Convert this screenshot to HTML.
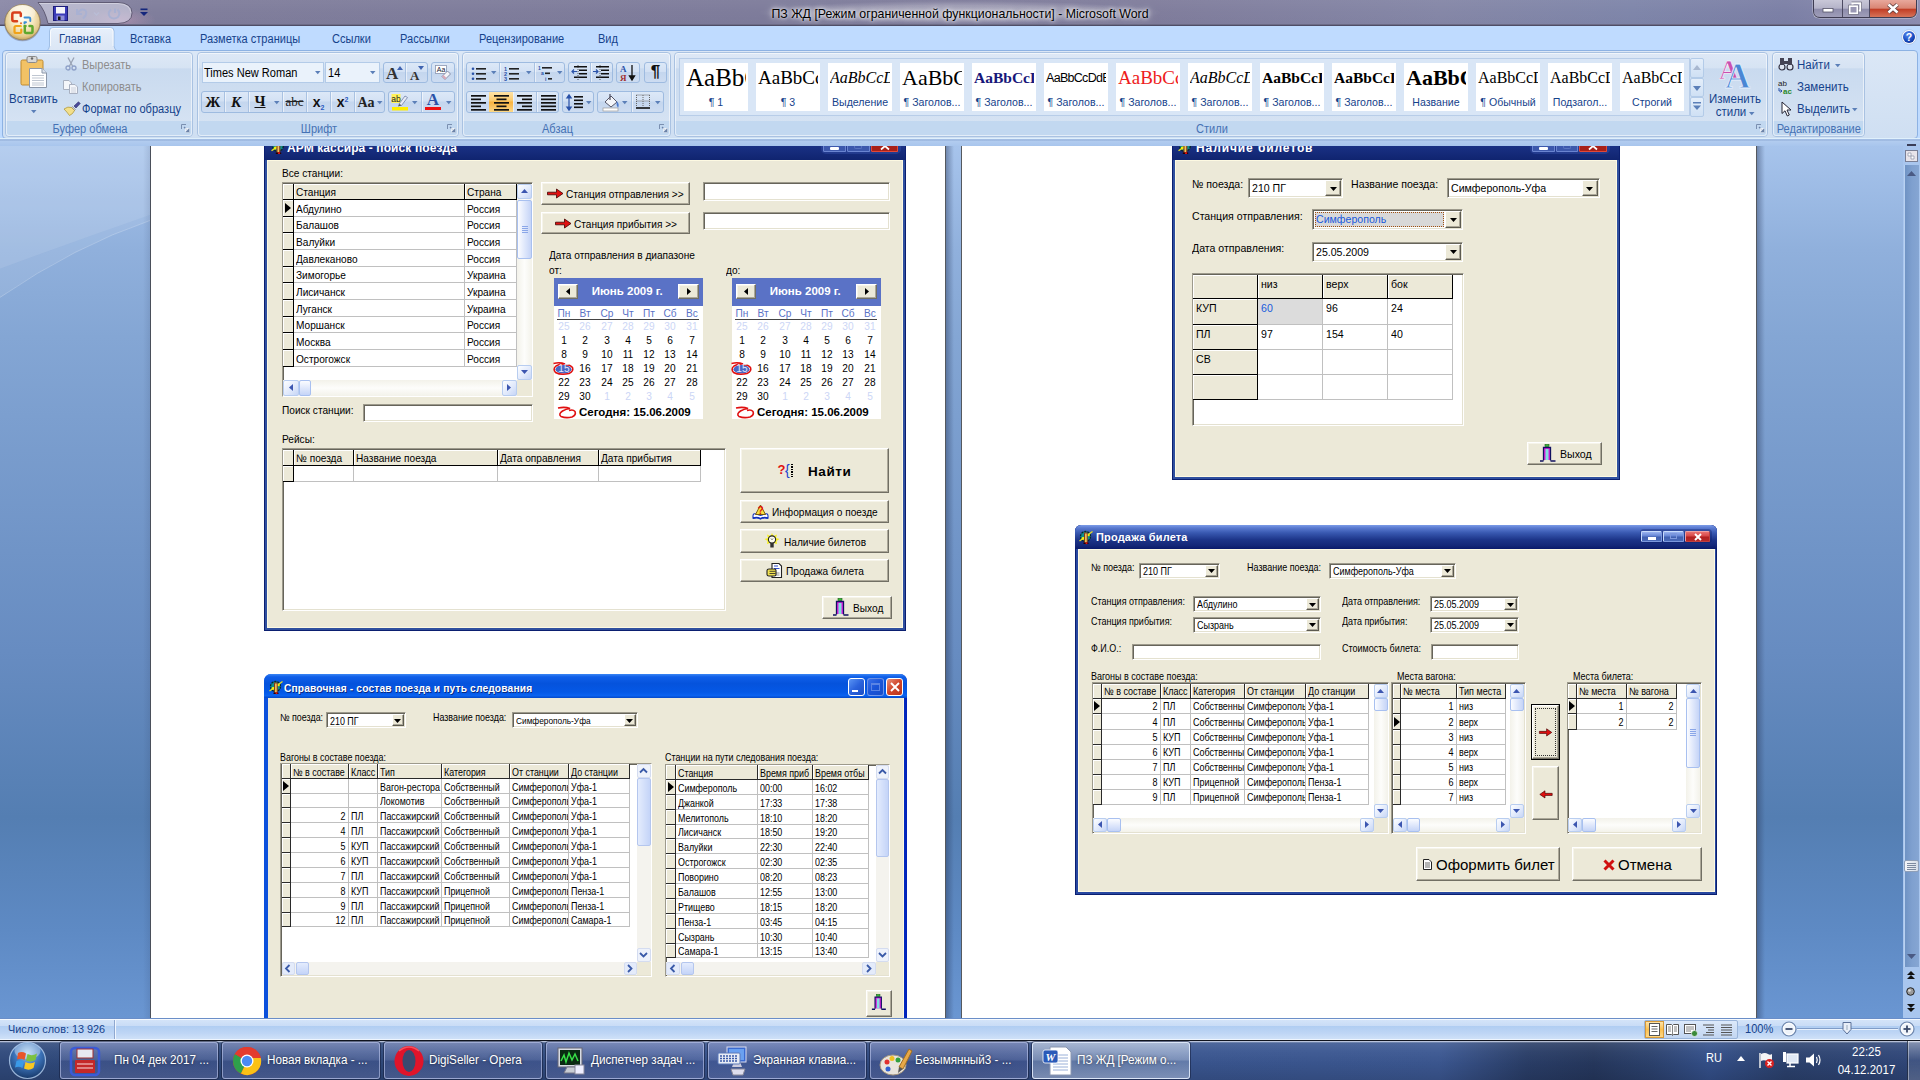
<!DOCTYPE html>
<html lang="ru"><head><meta charset="utf-8"><title>ПЗ ЖД - Microsoft Word</title><style>
html,body{margin:0;padding:0;}
body{width:1920px;height:1080px;overflow:hidden;position:relative;background:#6f95cb;font-family:"Liberation Sans",sans-serif;font-size:11px;}
div{position:absolute;box-sizing:content-box;}
svg{overflow:visible;}
</style></head><body>
<div style="left:0px;top:145px;width:1920px;height:873px;background:linear-gradient(180deg,#a7c4ec 0%,#90b0dc 12%,#84a6d4 22%,#7c9fcf 31%,#678cc1 58%,#547eb2 77%,#5e8ac4 90%,#6a96d2 100%);"></div>
<svg style="position:absolute;left:0px;top:146px;" width="150" height="160" viewBox="0 0 150 160"><path d="M0 0 H150 V69 Q75 95 0 122.700 Z" fill="rgba(255,255,255,.17)"/><path d="M0 122.700 Q75 95 150 69 V74.500 Q75 100 0 151.400 Z" fill="rgba(255,255,255,.09)"/><path d="M0 151.400 Q75 100 150 74.500" fill="none" stroke="rgba(255,255,255,.22)" stroke-width="1"/></svg>
<div style="left:150px;top:146px;width:1px;height:872px;background:#4a4f5a;"></div>
<div style="left:151px;top:146px;width:794px;height:872px;background:#fff;"></div>
<div style="left:945px;top:146px;width:1px;height:872px;background:#55595f;"></div>
<div style="left:946px;top:146px;width:8px;height:872px;background:linear-gradient(90deg,rgba(40,55,90,.42),rgba(40,55,90,0));"></div>
<div style="left:962px;top:146px;width:794px;height:872px;background:#fff;"></div>
<div style="left:961px;top:146px;width:1px;height:872px;background:#55595f;"></div>
<div style="left:1756px;top:146px;width:1px;height:872px;background:#55595f;"></div>
<div style="left:1757px;top:146px;width:8px;height:872px;background:linear-gradient(90deg,rgba(40,55,90,.42),rgba(40,55,90,0));"></div>
<div style="left:143px;top:146px;width:7px;height:872px;background:linear-gradient(270deg,rgba(40,55,90,.12),rgba(40,55,90,0));"></div>
<div style="left:1903px;top:145px;width:17px;height:873px;background:#a9c6ee;"></div>
<div style="left:1903px;top:165px;width:17px;height:31px;"></div>
<div style="left:1904px;top:165px;width:15px;height:802px;background:linear-gradient(90deg,#6f93c4,#7fa0cf 50%,#86a6d3);border-left:1px solid #b9d1f0;box-sizing:border-box;"></div>
<svg style="position:absolute;left:1905px;top:150px;" width="13" height="13" viewBox="0 0 13 13"><rect x="0.500" y="0.500" width="12" height="11" fill="#e8e4ea" stroke="#7a7f95"/><path d="M3 3 h3 v3 h3 v3 h-3 v-3 h-3 z" fill="#fff" stroke="#8a8fa5" stroke-width=".7"/></svg>
<svg style="position:absolute;left:1907px;top:171px;" width="9" height="5" viewBox="0 0 9 5"><path d="M0 5 H9 L4.500 0 Z" fill="#4a5a84"/></svg>
<svg style="position:absolute;left:1907px;top:954px;" width="9" height="5" viewBox="0 0 9 5"><path d="M0 0 H9 L4.500 5 Z" fill="#4a5a84"/></svg>
<div style="left:1904px;top:860px;width:15px;height:12px;background:linear-gradient(90deg,#f4f6fa,#d6dde8);border:1px solid #8f9fb8;border-radius:2px;box-sizing:border-box;"></div>
<svg style="position:absolute;left:1907px;top:863px;" width="9" height="7" viewBox="0 0 9 7"><path d="M0 0.500 H9 M0 2.500 H9 M0 4.500 H9 M0 6.500 H9" stroke="#7d8aa0" stroke-width="1"/></svg>
<svg style="position:absolute;left:1906px;top:971px;" width="10" height="9" viewBox="0 0 10 9"><path d="M5 0 L9 4 H1 Z M5 4 L9 8 H1 Z" fill="#111"/></svg>
<svg style="position:absolute;left:1906px;top:987px;" width="9" height="9" viewBox="0 0 9 9"><circle cx="4.500" cy="4.500" r="3.800" fill="#9a9a9a" stroke="#222" stroke-width="1"/><circle cx="3.500" cy="3.500" r="1.300" fill="#ddd"/></svg>
<svg style="position:absolute;left:1906px;top:1003px;" width="10" height="9" viewBox="0 0 10 9"><path d="M5 9 L9 5 H1 Z M5 5 L9 1 H1 Z" fill="#111"/></svg>
<div style="left:264px;top:140px;width:642px;height:491px;background:#30509f;box-shadow:inset 0 0 0 1px #0b1f70;"></div>
<div style="left:265px;top:140px;width:640px;height:20px;background:linear-gradient(180deg,#2c4596 0%,#1a3184 30%,#10246f 100%);"></div>
<div style="left:267px;top:160px;width:636px;height:468px;background:#ece9d8;box-sizing:border-box;border:1px solid #fdf9e2;"></div>
<div style="left:264px;top:145px;width:642px;height:15px;overflow:hidden;"><div style="left:23px;top:-5.50px;font-size:12px;line-height:16px;color:#fff;white-space:nowrap;font-weight:bold;letter-spacing:.1px;">АРМ кассира - поиск поезда</div></div>
<div style="left:271px;top:145px;width:16px;height:9px;overflow:hidden;"><svg style="position:absolute;left:0;top:-6.500px" width="15" height="15" viewBox="0 0 14 14"><circle cx="6.500" cy="6.500" r="5" fill="#10908c" stroke="#0a2a2a" stroke-width="1.300" stroke-dasharray="2.200 .9"/><path d="M0.500 11 L13.500 1.500" stroke="#e8e020" stroke-width="1.300"/><circle cx="4" cy="8.500" r="1.400" fill="#f0f010"/><circle cx="9.500" cy="5" r="1.300" fill="#f0f010"/><rect x="5.600" y="3" width="2.600" height="10" fill="#e8c860" stroke="#8a2a10" stroke-width=".9"/><path d="M4.500 13.300 H9.500" stroke="#200" stroke-width="1.400"/><circle cx="7.500" cy="13.200" r="1" fill="#e01010"/></svg></div>
<div style="left:821px;top:146px;width:80px;height:8px;background:rgba(60,90,180,.35);border-radius:0 0 5px 5px;"></div>
<div style="left:823px;top:146px;width:23px;height:6px;background:#3c58ac;border:1px solid #6a84d0;border-top:0;box-sizing:border-box;border-radius:0 0 1.500px 1.500px;"></div>
<div style="left:830px;top:147px;width:9px;height:2.5px;background:#fff;border-radius:1px;"></div>
<div style="left:847.2px;top:146px;width:22.8px;height:6px;background:#3c58ac;border:1px solid #6a84d0;border-top:0;box-sizing:border-box;border-radius:0 0 1.500px 1.500px;"></div>
<div style="left:854px;top:146px;width:8px;height:2.5px;border:1px solid #5a74c0;border-top:0;box-sizing:border-box;border-radius:0 0 2px 2px;"></div>
<div style="left:870.7px;top:146px;width:27.8px;height:6px;background:#a82018;border:1px solid #e04838;border-top:0;box-sizing:border-box;border-radius:0 0 1.500px 1.500px;"></div>
<svg style="position:absolute;left:880.5px;top:146px;" width="8" height="4" viewBox="0 0 8 4"><path d="M0 3.500 L4 0 L8 3.500" stroke="#fff" stroke-width="1.700" fill="none"/></svg>
<div style="left:282px;top:166.20px;font-size:11px;line-height:14px;color:#000;white-space:nowrap;transform:scaleX(0.92);transform-origin:0 50%;">Все станции:</div>
<div style="left:281.5px;top:182px;width:251px;height:214.5px;background:#fff;box-sizing:border-box;border:1px solid;border-color:#9d9a8c #fff #fff #9d9a8c;box-shadow:inset 1px 1px 0 #66645a, inset -1px -1px 0 #e4e1d0;"></div>
<div style="left:283px;top:184px;width:11px;height:16px;background:#ece9d8;box-sizing:border-box;border-right:1px solid #000;border-bottom:1px solid #000;box-shadow:inset 1px 1px 0 #fff;"></div>
<div style="left:294px;top:184px;width:171px;height:16px;background:#ece9d8;box-sizing:border-box;border-right:1px solid #000;border-bottom:1px solid #000;box-shadow:inset 1px 1px 0 #fff;"></div>
<div style="left:296px;top:184px;width:168px;height:15px;overflow:hidden;"><div style="left:0px;top:1.00px;font-size:11px;line-height:14px;color:#000;white-space:nowrap;transform:scaleX(0.92);transform-origin:0 50%;">Станция</div></div>
<div style="left:465px;top:184px;width:52px;height:16px;background:#ece9d8;box-sizing:border-box;border-right:1px solid #000;border-bottom:1px solid #000;box-shadow:inset 1px 1px 0 #fff;"></div>
<div style="left:467px;top:184px;width:49px;height:15px;overflow:hidden;"><div style="left:0px;top:1.00px;font-size:11px;line-height:14px;color:#000;white-space:nowrap;transform:scaleX(0.92);transform-origin:0 50%;">Страна</div></div>
<div style="left:283px;top:200px;width:11px;height:17px;background:#ece9d8;box-sizing:border-box;border-right:1px solid #000;border-bottom:1px solid #000;box-shadow:inset 1px 1px 0 #fff;"></div>
<svg style="position:absolute;left:285.0px;top:203.0px" width="6" height="10" viewBox="0 0 6 10"><path d="M0 0 V10 L6 5 Z" fill="#000"/></svg>
<div style="left:294px;top:200px;width:171px;height:17px;box-sizing:border-box;border-right:1px solid #c0c0c0;border-bottom:1px solid #c0c0c0;background:#fff;"></div>
<div style="left:296px;top:200px;width:168px;height:16px;overflow:hidden;"><div style="left:0px;top:1.50px;font-size:11px;line-height:14px;color:#000;white-space:nowrap;transform:scaleX(0.92);transform-origin:0 50%;">Абдулино</div></div>
<div style="left:465px;top:200px;width:52px;height:17px;box-sizing:border-box;border-right:1px solid #c0c0c0;border-bottom:1px solid #c0c0c0;background:#fff;"></div>
<div style="left:467px;top:200px;width:49px;height:16px;overflow:hidden;"><div style="left:0px;top:1.50px;font-size:11px;line-height:14px;color:#000;white-space:nowrap;transform:scaleX(0.92);transform-origin:0 50%;">Россия</div></div>
<div style="left:283px;top:217px;width:11px;height:16px;background:#ece9d8;box-sizing:border-box;border-right:1px solid #000;border-bottom:1px solid #000;box-shadow:inset 1px 1px 0 #fff;"></div>
<div style="left:294px;top:217px;width:171px;height:16px;box-sizing:border-box;border-right:1px solid #c0c0c0;border-bottom:1px solid #c0c0c0;background:#fff;"></div>
<div style="left:296px;top:217px;width:168px;height:15px;overflow:hidden;"><div style="left:0px;top:1.00px;font-size:11px;line-height:14px;color:#000;white-space:nowrap;transform:scaleX(0.92);transform-origin:0 50%;">Балашов</div></div>
<div style="left:465px;top:217px;width:52px;height:16px;box-sizing:border-box;border-right:1px solid #c0c0c0;border-bottom:1px solid #c0c0c0;background:#fff;"></div>
<div style="left:467px;top:217px;width:49px;height:15px;overflow:hidden;"><div style="left:0px;top:1.00px;font-size:11px;line-height:14px;color:#000;white-space:nowrap;transform:scaleX(0.92);transform-origin:0 50%;">Россия</div></div>
<div style="left:283px;top:233px;width:11px;height:17px;background:#ece9d8;box-sizing:border-box;border-right:1px solid #000;border-bottom:1px solid #000;box-shadow:inset 1px 1px 0 #fff;"></div>
<div style="left:294px;top:233px;width:171px;height:17px;box-sizing:border-box;border-right:1px solid #c0c0c0;border-bottom:1px solid #c0c0c0;background:#fff;"></div>
<div style="left:296px;top:233px;width:168px;height:16px;overflow:hidden;"><div style="left:0px;top:1.50px;font-size:11px;line-height:14px;color:#000;white-space:nowrap;transform:scaleX(0.92);transform-origin:0 50%;">Валуйки</div></div>
<div style="left:465px;top:233px;width:52px;height:17px;box-sizing:border-box;border-right:1px solid #c0c0c0;border-bottom:1px solid #c0c0c0;background:#fff;"></div>
<div style="left:467px;top:233px;width:49px;height:16px;overflow:hidden;"><div style="left:0px;top:1.50px;font-size:11px;line-height:14px;color:#000;white-space:nowrap;transform:scaleX(0.92);transform-origin:0 50%;">Россия</div></div>
<div style="left:283px;top:250px;width:11px;height:17px;background:#ece9d8;box-sizing:border-box;border-right:1px solid #000;border-bottom:1px solid #000;box-shadow:inset 1px 1px 0 #fff;"></div>
<div style="left:294px;top:250px;width:171px;height:17px;box-sizing:border-box;border-right:1px solid #c0c0c0;border-bottom:1px solid #c0c0c0;background:#fff;"></div>
<div style="left:296px;top:250px;width:168px;height:16px;overflow:hidden;"><div style="left:0px;top:1.50px;font-size:11px;line-height:14px;color:#000;white-space:nowrap;transform:scaleX(0.92);transform-origin:0 50%;">Давлеканово</div></div>
<div style="left:465px;top:250px;width:52px;height:17px;box-sizing:border-box;border-right:1px solid #c0c0c0;border-bottom:1px solid #c0c0c0;background:#fff;"></div>
<div style="left:467px;top:250px;width:49px;height:16px;overflow:hidden;"><div style="left:0px;top:1.50px;font-size:11px;line-height:14px;color:#000;white-space:nowrap;transform:scaleX(0.92);transform-origin:0 50%;">Россия</div></div>
<div style="left:283px;top:267px;width:11px;height:16px;background:#ece9d8;box-sizing:border-box;border-right:1px solid #000;border-bottom:1px solid #000;box-shadow:inset 1px 1px 0 #fff;"></div>
<div style="left:294px;top:267px;width:171px;height:16px;box-sizing:border-box;border-right:1px solid #c0c0c0;border-bottom:1px solid #c0c0c0;background:#fff;"></div>
<div style="left:296px;top:267px;width:168px;height:15px;overflow:hidden;"><div style="left:0px;top:1.00px;font-size:11px;line-height:14px;color:#000;white-space:nowrap;transform:scaleX(0.92);transform-origin:0 50%;">Зимогорье</div></div>
<div style="left:465px;top:267px;width:52px;height:16px;box-sizing:border-box;border-right:1px solid #c0c0c0;border-bottom:1px solid #c0c0c0;background:#fff;"></div>
<div style="left:467px;top:267px;width:49px;height:15px;overflow:hidden;"><div style="left:0px;top:1.00px;font-size:11px;line-height:14px;color:#000;white-space:nowrap;transform:scaleX(0.92);transform-origin:0 50%;">Украина</div></div>
<div style="left:283px;top:283px;width:11px;height:17px;background:#ece9d8;box-sizing:border-box;border-right:1px solid #000;border-bottom:1px solid #000;box-shadow:inset 1px 1px 0 #fff;"></div>
<div style="left:294px;top:283px;width:171px;height:17px;box-sizing:border-box;border-right:1px solid #c0c0c0;border-bottom:1px solid #c0c0c0;background:#fff;"></div>
<div style="left:296px;top:283px;width:168px;height:16px;overflow:hidden;"><div style="left:0px;top:1.50px;font-size:11px;line-height:14px;color:#000;white-space:nowrap;transform:scaleX(0.92);transform-origin:0 50%;">Лисичанск</div></div>
<div style="left:465px;top:283px;width:52px;height:17px;box-sizing:border-box;border-right:1px solid #c0c0c0;border-bottom:1px solid #c0c0c0;background:#fff;"></div>
<div style="left:467px;top:283px;width:49px;height:16px;overflow:hidden;"><div style="left:0px;top:1.50px;font-size:11px;line-height:14px;color:#000;white-space:nowrap;transform:scaleX(0.92);transform-origin:0 50%;">Украина</div></div>
<div style="left:283px;top:300px;width:11px;height:17px;background:#ece9d8;box-sizing:border-box;border-right:1px solid #000;border-bottom:1px solid #000;box-shadow:inset 1px 1px 0 #fff;"></div>
<div style="left:294px;top:300px;width:171px;height:17px;box-sizing:border-box;border-right:1px solid #c0c0c0;border-bottom:1px solid #c0c0c0;background:#fff;"></div>
<div style="left:296px;top:300px;width:168px;height:16px;overflow:hidden;"><div style="left:0px;top:1.50px;font-size:11px;line-height:14px;color:#000;white-space:nowrap;transform:scaleX(0.92);transform-origin:0 50%;">Луганск</div></div>
<div style="left:465px;top:300px;width:52px;height:17px;box-sizing:border-box;border-right:1px solid #c0c0c0;border-bottom:1px solid #c0c0c0;background:#fff;"></div>
<div style="left:467px;top:300px;width:49px;height:16px;overflow:hidden;"><div style="left:0px;top:1.50px;font-size:11px;line-height:14px;color:#000;white-space:nowrap;transform:scaleX(0.92);transform-origin:0 50%;">Украина</div></div>
<div style="left:283px;top:317px;width:11px;height:16px;background:#ece9d8;box-sizing:border-box;border-right:1px solid #000;border-bottom:1px solid #000;box-shadow:inset 1px 1px 0 #fff;"></div>
<div style="left:294px;top:317px;width:171px;height:16px;box-sizing:border-box;border-right:1px solid #c0c0c0;border-bottom:1px solid #c0c0c0;background:#fff;"></div>
<div style="left:296px;top:317px;width:168px;height:15px;overflow:hidden;"><div style="left:0px;top:1.00px;font-size:11px;line-height:14px;color:#000;white-space:nowrap;transform:scaleX(0.92);transform-origin:0 50%;">Моршанск</div></div>
<div style="left:465px;top:317px;width:52px;height:16px;box-sizing:border-box;border-right:1px solid #c0c0c0;border-bottom:1px solid #c0c0c0;background:#fff;"></div>
<div style="left:467px;top:317px;width:49px;height:15px;overflow:hidden;"><div style="left:0px;top:1.00px;font-size:11px;line-height:14px;color:#000;white-space:nowrap;transform:scaleX(0.92);transform-origin:0 50%;">Россия</div></div>
<div style="left:283px;top:333px;width:11px;height:17px;background:#ece9d8;box-sizing:border-box;border-right:1px solid #000;border-bottom:1px solid #000;box-shadow:inset 1px 1px 0 #fff;"></div>
<div style="left:294px;top:333px;width:171px;height:17px;box-sizing:border-box;border-right:1px solid #c0c0c0;border-bottom:1px solid #c0c0c0;background:#fff;"></div>
<div style="left:296px;top:333px;width:168px;height:16px;overflow:hidden;"><div style="left:0px;top:1.50px;font-size:11px;line-height:14px;color:#000;white-space:nowrap;transform:scaleX(0.92);transform-origin:0 50%;">Москва</div></div>
<div style="left:465px;top:333px;width:52px;height:17px;box-sizing:border-box;border-right:1px solid #c0c0c0;border-bottom:1px solid #c0c0c0;background:#fff;"></div>
<div style="left:467px;top:333px;width:49px;height:16px;overflow:hidden;"><div style="left:0px;top:1.50px;font-size:11px;line-height:14px;color:#000;white-space:nowrap;transform:scaleX(0.92);transform-origin:0 50%;">Россия</div></div>
<div style="left:283px;top:350px;width:11px;height:17px;background:#ece9d8;box-sizing:border-box;border-right:1px solid #000;border-bottom:1px solid #000;box-shadow:inset 1px 1px 0 #fff;"></div>
<div style="left:294px;top:350px;width:171px;height:17px;box-sizing:border-box;border-right:1px solid #c0c0c0;border-bottom:1px solid #c0c0c0;background:#fff;"></div>
<div style="left:296px;top:350px;width:168px;height:16px;overflow:hidden;"><div style="left:0px;top:1.50px;font-size:11px;line-height:14px;color:#000;white-space:nowrap;transform:scaleX(0.92);transform-origin:0 50%;">Острогожск</div></div>
<div style="left:465px;top:350px;width:52px;height:17px;box-sizing:border-box;border-right:1px solid #c0c0c0;border-bottom:1px solid #c0c0c0;background:#fff;"></div>
<div style="left:467px;top:350px;width:49px;height:16px;overflow:hidden;"><div style="left:0px;top:1.50px;font-size:11px;line-height:14px;color:#000;white-space:nowrap;transform:scaleX(0.92);transform-origin:0 50%;">Россия</div></div>
<div style="left:517px;top:183.5px;width:15px;height:196px;background:linear-gradient(90deg,#f3f2ea,#fdfdfb 50%,#f3f2ea);"></div>
<div style="left:517px;top:183.5px;width:15px;height:15px;box-sizing:border-box;border:1px solid #b8cdf0;border-radius:2px;background:linear-gradient(135deg,#fdfeff,#dfe8fb 60%,#c6d5f6);"></div>
<svg style="position:absolute;left:521.0px;top:189.0px" width="7" height="4" viewBox="0 0 7 4"><path d="M0 4 H7 L3.500 0 Z" fill="#3c56b0"/></svg>
<div style="left:517px;top:364.5px;width:15px;height:15px;box-sizing:border-box;border:1px solid #b8cdf0;border-radius:2px;background:linear-gradient(135deg,#fdfeff,#dfe8fb 60%,#c6d5f6);"></div>
<svg style="position:absolute;left:521.0px;top:370.0px" width="7" height="4" viewBox="0 0 7 4"><path d="M0 0 H7 L3.500 4 Z" fill="#3c56b0"/></svg>
<div style="left:517px;top:199.5px;width:15px;height:59px;box-sizing:border-box;border:1px solid #a8c0f0;border-radius:2px;background:linear-gradient(90deg,#fbfcff,#dde6fb 55%,#c5d4f7);"></div>
<svg style="position:absolute;left:521.5px;top:225.5px" width="6" height="7" viewBox="0 0 6 7"><path d="M0 0.500 H6 M0 2.500 H6 M0 4.500 H6 M0 6.500 H6" stroke="#8aa6e8" stroke-width="1"/></svg>
<div style="left:283px;top:380px;width:234px;height:15.5px;background:linear-gradient(180deg,#f3f2ea,#fdfdfb 50%,#f3f2ea);"></div>
<div style="left:283px;top:380px;width:15.5px;height:15.5px;box-sizing:border-box;border:1px solid #b8cdf0;border-radius:2px;background:linear-gradient(135deg,#fdfeff,#dfe8fb 60%,#c6d5f6);"></div>
<svg style="position:absolute;left:288.8px;top:384.2px" width="4" height="7" viewBox="0 0 4 7"><path d="M4 0 V7 L0 3.500 Z" fill="#3c56b0"/></svg>
<div style="left:501.5px;top:380px;width:15.5px;height:15.5px;box-sizing:border-box;border:1px solid #b8cdf0;border-radius:2px;background:linear-gradient(135deg,#fdfeff,#dfe8fb 60%,#c6d5f6);"></div>
<svg style="position:absolute;left:507.2px;top:384.2px" width="4" height="7" viewBox="0 0 4 7"><path d="M0 0 V7 L4 3.500 Z" fill="#3c56b0"/></svg>
<div style="left:298.5px;top:380px;width:12px;height:15.5px;box-sizing:border-box;border:1px solid #a8c0f0;border-radius:2px;background:linear-gradient(180deg,#fbfcff,#dde6fb 55%,#c5d4f7);"></div>
<div style="left:517px;top:380px;width:15px;height:15.5px;background:#ece9d8;"></div>
<div style="left:540.5px;top:182px;width:149.5px;height:22.5px;background:#ece9d8;box-sizing:border-box;border:1px solid;border-color:#fff #716f64 #716f64 #fff;box-shadow:inset -1px -1px 0 #aca899, inset 1px 1px 0 #f6f4ea;"></div>
<svg style="position:absolute;left:547px;top:188px" width="17.0" height="11.0" viewBox="0 0 17 11"><g><path d="M0.500 4.200 H9.500 V1 L16 5.500 L9.500 10 V6.800 H0.500 Z" fill="#e01010" stroke="#400000" stroke-width=".8"/></g></svg>
<div style="left:566px;top:187.00px;font-size:11px;line-height:14px;color:#000;white-space:nowrap;transform:scaleX(0.92);transform-origin:0 50%;">Станция отправления &gt;&gt;</div>
<div style="left:540.5px;top:211.5px;width:149.5px;height:22.5px;background:#ece9d8;box-sizing:border-box;border:1px solid;border-color:#fff #716f64 #716f64 #fff;box-shadow:inset -1px -1px 0 #aca899, inset 1px 1px 0 #f6f4ea;"></div>
<svg style="position:absolute;left:555px;top:217.5px" width="17.0" height="11.0" viewBox="0 0 17 11"><g><path d="M0.500 4.200 H9.500 V1 L16 5.500 L9.500 10 V6.800 H0.500 Z" fill="#e01010" stroke="#400000" stroke-width=".8"/></g></svg>
<div style="left:573.5px;top:216.50px;font-size:11px;line-height:14px;color:#000;white-space:nowrap;transform:scaleX(0.92);transform-origin:0 50%;">Станция прибытия &gt;&gt;</div>
<div style="left:703px;top:182px;width:186.5px;height:18.5px;background:#fff;box-sizing:border-box;border:1px solid;border-color:#9d9a8c #fff #fff #9d9a8c;box-shadow:inset 1px 1px 0 #66645a, inset -1px -1px 0 #e4e1d0;"></div>
<div style="left:703px;top:211.5px;width:186.5px;height:18.5px;background:#fff;box-sizing:border-box;border:1px solid;border-color:#9d9a8c #fff #fff #9d9a8c;box-shadow:inset 1px 1px 0 #66645a, inset -1px -1px 0 #e4e1d0;"></div>
<div style="left:548.5px;top:247.70px;font-size:11px;line-height:14px;color:#000;white-space:nowrap;transform:scaleX(0.92);transform-origin:0 50%;">Дата отправления в диапазоне</div>
<div style="left:548.5px;top:262.50px;font-size:11px;line-height:14px;color:#000;white-space:nowrap;transform:scaleX(0.92);transform-origin:0 50%;">от:</div>
<div style="left:725.5px;top:262.50px;font-size:11px;line-height:14px;color:#000;white-space:nowrap;transform:scaleX(0.92);transform-origin:0 50%;">до:</div>
<div style="left:553.5px;top:278px;width:149.5px;height:141.0px;background:#fff;"></div>
<div style="left:553.5px;top:278px;width:149.5px;height:27.5px;background:#5a72c6;"></div>
<div style="left:558.0px;top:283.5px;width:20px;height:15px;background:#ece9d8;box-sizing:border-box;border:1px solid;border-color:#fff #716f64 #716f64 #fff;box-shadow:inset -1px -1px 0 #aca899, inset 1px 1px 0 #f6f4ea;"></div>
<svg style="position:absolute;left:565.5px;top:287.5px;" width="4" height="7" viewBox="0 0 4 7"><path d="M4 0 V7 L0 3.500 Z" fill="#000"/></svg>
<div style="left:678.0px;top:283.5px;width:20.5px;height:15px;background:#ece9d8;box-sizing:border-box;border:1px solid;border-color:#fff #716f64 #716f64 #fff;box-shadow:inset -1px -1px 0 #aca899, inset 1px 1px 0 #f6f4ea;"></div>
<svg style="position:absolute;left:686.5px;top:287.5px;" width="4" height="7" viewBox="0 0 4 7"><path d="M0 0 V7 L4 3.500 Z" fill="#000"/></svg>
<div style="left:553.5px;top:284.00px;font-size:11.5px;line-height:15px;color:#fff;white-space:nowrap;width:147.5px;text-align:center;font-weight:bold;">Июнь 2009 г.</div>
<div style="left:554.0px;top:306.50px;font-size:11px;line-height:13px;color:#5a72c6;white-space:nowrap;width:20px;text-align:center;transform:scaleX(0.92);transform-origin:50% 50%;">Пн</div>
<div style="left:575.25px;top:306.50px;font-size:11px;line-height:13px;color:#5a72c6;white-space:nowrap;width:20px;text-align:center;transform:scaleX(0.92);transform-origin:50% 50%;">Вт</div>
<div style="left:596.5px;top:306.50px;font-size:11px;line-height:13px;color:#5a72c6;white-space:nowrap;width:20px;text-align:center;transform:scaleX(0.92);transform-origin:50% 50%;">Ср</div>
<div style="left:617.75px;top:306.50px;font-size:11px;line-height:13px;color:#5a72c6;white-space:nowrap;width:20px;text-align:center;transform:scaleX(0.92);transform-origin:50% 50%;">Чт</div>
<div style="left:639.0px;top:306.50px;font-size:11px;line-height:13px;color:#5a72c6;white-space:nowrap;width:20px;text-align:center;transform:scaleX(0.92);transform-origin:50% 50%;">Пт</div>
<div style="left:660.25px;top:306.50px;font-size:11px;line-height:13px;color:#5a72c6;white-space:nowrap;width:20px;text-align:center;transform:scaleX(0.92);transform-origin:50% 50%;">Сб</div>
<div style="left:681.5px;top:306.50px;font-size:11px;line-height:13px;color:#5a72c6;white-space:nowrap;width:20px;text-align:center;transform:scaleX(0.92);transform-origin:50% 50%;">Вс</div>
<div style="left:557.0px;top:318.5px;width:142.0px;height:1px;background:#444;"></div>
<div style="left:554.0px;top:320.00px;font-size:11px;line-height:13px;color:#ccd6f6;white-space:nowrap;width:20px;text-align:center;transform:scaleX(0.92);transform-origin:50% 50%;">25</div>
<div style="left:575.25px;top:320.00px;font-size:11px;line-height:13px;color:#ccd6f6;white-space:nowrap;width:20px;text-align:center;transform:scaleX(0.92);transform-origin:50% 50%;">26</div>
<div style="left:596.5px;top:320.00px;font-size:11px;line-height:13px;color:#ccd6f6;white-space:nowrap;width:20px;text-align:center;transform:scaleX(0.92);transform-origin:50% 50%;">27</div>
<div style="left:617.75px;top:320.00px;font-size:11px;line-height:13px;color:#ccd6f6;white-space:nowrap;width:20px;text-align:center;transform:scaleX(0.92);transform-origin:50% 50%;">28</div>
<div style="left:639.0px;top:320.00px;font-size:11px;line-height:13px;color:#ccd6f6;white-space:nowrap;width:20px;text-align:center;transform:scaleX(0.92);transform-origin:50% 50%;">29</div>
<div style="left:660.25px;top:320.00px;font-size:11px;line-height:13px;color:#ccd6f6;white-space:nowrap;width:20px;text-align:center;transform:scaleX(0.92);transform-origin:50% 50%;">30</div>
<div style="left:681.5px;top:320.00px;font-size:11px;line-height:13px;color:#ccd6f6;white-space:nowrap;width:20px;text-align:center;transform:scaleX(0.92);transform-origin:50% 50%;">31</div>
<div style="left:554.0px;top:333.90px;font-size:11px;line-height:13px;color:#000;white-space:nowrap;width:20px;text-align:center;transform:scaleX(0.92);transform-origin:50% 50%;">1</div>
<div style="left:575.25px;top:333.90px;font-size:11px;line-height:13px;color:#000;white-space:nowrap;width:20px;text-align:center;transform:scaleX(0.92);transform-origin:50% 50%;">2</div>
<div style="left:596.5px;top:333.90px;font-size:11px;line-height:13px;color:#000;white-space:nowrap;width:20px;text-align:center;transform:scaleX(0.92);transform-origin:50% 50%;">3</div>
<div style="left:617.75px;top:333.90px;font-size:11px;line-height:13px;color:#000;white-space:nowrap;width:20px;text-align:center;transform:scaleX(0.92);transform-origin:50% 50%;">4</div>
<div style="left:639.0px;top:333.90px;font-size:11px;line-height:13px;color:#000;white-space:nowrap;width:20px;text-align:center;transform:scaleX(0.92);transform-origin:50% 50%;">5</div>
<div style="left:660.25px;top:333.90px;font-size:11px;line-height:13px;color:#000;white-space:nowrap;width:20px;text-align:center;transform:scaleX(0.92);transform-origin:50% 50%;">6</div>
<div style="left:681.5px;top:333.90px;font-size:11px;line-height:13px;color:#000;white-space:nowrap;width:20px;text-align:center;transform:scaleX(0.92);transform-origin:50% 50%;">7</div>
<div style="left:554.0px;top:347.80px;font-size:11px;line-height:13px;color:#000;white-space:nowrap;width:20px;text-align:center;transform:scaleX(0.92);transform-origin:50% 50%;">8</div>
<div style="left:575.25px;top:347.80px;font-size:11px;line-height:13px;color:#000;white-space:nowrap;width:20px;text-align:center;transform:scaleX(0.92);transform-origin:50% 50%;">9</div>
<div style="left:596.5px;top:347.80px;font-size:11px;line-height:13px;color:#000;white-space:nowrap;width:20px;text-align:center;transform:scaleX(0.92);transform-origin:50% 50%;">10</div>
<div style="left:617.75px;top:347.80px;font-size:11px;line-height:13px;color:#000;white-space:nowrap;width:20px;text-align:center;transform:scaleX(0.92);transform-origin:50% 50%;">11</div>
<div style="left:639.0px;top:347.80px;font-size:11px;line-height:13px;color:#000;white-space:nowrap;width:20px;text-align:center;transform:scaleX(0.92);transform-origin:50% 50%;">12</div>
<div style="left:660.25px;top:347.80px;font-size:11px;line-height:13px;color:#000;white-space:nowrap;width:20px;text-align:center;transform:scaleX(0.92);transform-origin:50% 50%;">13</div>
<div style="left:681.5px;top:347.80px;font-size:11px;line-height:13px;color:#000;white-space:nowrap;width:20px;text-align:center;transform:scaleX(0.92);transform-origin:50% 50%;">14</div>
<svg style="position:absolute;left:552.0px;top:360.7px;" width="24" height="15" viewBox="0 0 24 15"><ellipse cx="11.500" cy="8.300" rx="8" ry="4.300" fill="#4a66c4"/><path d="M1.500 2.500 Q8 1 13 3 Q8 2.500 4 5 Q0.500 8 3.500 11.500 Q9 14.500 17 12.500 Q22 10 20.500 6.500 Q18 3.500 13 3.800" fill="none" stroke="#e01010" stroke-width="1.500"/></svg>
<div style="left:554.0px;top:361.70px;font-size:11px;line-height:13px;color:#dfe6fa;white-space:nowrap;width:20px;text-align:center;transform:scaleX(0.92);transform-origin:50% 50%;">15</div>
<div style="left:575.25px;top:361.70px;font-size:11px;line-height:13px;color:#000;white-space:nowrap;width:20px;text-align:center;transform:scaleX(0.92);transform-origin:50% 50%;">16</div>
<div style="left:596.5px;top:361.70px;font-size:11px;line-height:13px;color:#000;white-space:nowrap;width:20px;text-align:center;transform:scaleX(0.92);transform-origin:50% 50%;">17</div>
<div style="left:617.75px;top:361.70px;font-size:11px;line-height:13px;color:#000;white-space:nowrap;width:20px;text-align:center;transform:scaleX(0.92);transform-origin:50% 50%;">18</div>
<div style="left:639.0px;top:361.70px;font-size:11px;line-height:13px;color:#000;white-space:nowrap;width:20px;text-align:center;transform:scaleX(0.92);transform-origin:50% 50%;">19</div>
<div style="left:660.25px;top:361.70px;font-size:11px;line-height:13px;color:#000;white-space:nowrap;width:20px;text-align:center;transform:scaleX(0.92);transform-origin:50% 50%;">20</div>
<div style="left:681.5px;top:361.70px;font-size:11px;line-height:13px;color:#000;white-space:nowrap;width:20px;text-align:center;transform:scaleX(0.92);transform-origin:50% 50%;">21</div>
<div style="left:554.0px;top:375.60px;font-size:11px;line-height:13px;color:#000;white-space:nowrap;width:20px;text-align:center;transform:scaleX(0.92);transform-origin:50% 50%;">22</div>
<div style="left:575.25px;top:375.60px;font-size:11px;line-height:13px;color:#000;white-space:nowrap;width:20px;text-align:center;transform:scaleX(0.92);transform-origin:50% 50%;">23</div>
<div style="left:596.5px;top:375.60px;font-size:11px;line-height:13px;color:#000;white-space:nowrap;width:20px;text-align:center;transform:scaleX(0.92);transform-origin:50% 50%;">24</div>
<div style="left:617.75px;top:375.60px;font-size:11px;line-height:13px;color:#000;white-space:nowrap;width:20px;text-align:center;transform:scaleX(0.92);transform-origin:50% 50%;">25</div>
<div style="left:639.0px;top:375.60px;font-size:11px;line-height:13px;color:#000;white-space:nowrap;width:20px;text-align:center;transform:scaleX(0.92);transform-origin:50% 50%;">26</div>
<div style="left:660.25px;top:375.60px;font-size:11px;line-height:13px;color:#000;white-space:nowrap;width:20px;text-align:center;transform:scaleX(0.92);transform-origin:50% 50%;">27</div>
<div style="left:681.5px;top:375.60px;font-size:11px;line-height:13px;color:#000;white-space:nowrap;width:20px;text-align:center;transform:scaleX(0.92);transform-origin:50% 50%;">28</div>
<div style="left:554.0px;top:389.50px;font-size:11px;line-height:13px;color:#000;white-space:nowrap;width:20px;text-align:center;transform:scaleX(0.92);transform-origin:50% 50%;">29</div>
<div style="left:575.25px;top:389.50px;font-size:11px;line-height:13px;color:#000;white-space:nowrap;width:20px;text-align:center;transform:scaleX(0.92);transform-origin:50% 50%;">30</div>
<div style="left:596.5px;top:389.50px;font-size:11px;line-height:13px;color:#ccd6f6;white-space:nowrap;width:20px;text-align:center;transform:scaleX(0.92);transform-origin:50% 50%;">1</div>
<div style="left:617.75px;top:389.50px;font-size:11px;line-height:13px;color:#ccd6f6;white-space:nowrap;width:20px;text-align:center;transform:scaleX(0.92);transform-origin:50% 50%;">2</div>
<div style="left:639.0px;top:389.50px;font-size:11px;line-height:13px;color:#ccd6f6;white-space:nowrap;width:20px;text-align:center;transform:scaleX(0.92);transform-origin:50% 50%;">3</div>
<div style="left:660.25px;top:389.50px;font-size:11px;line-height:13px;color:#ccd6f6;white-space:nowrap;width:20px;text-align:center;transform:scaleX(0.92);transform-origin:50% 50%;">4</div>
<div style="left:681.5px;top:389.50px;font-size:11px;line-height:13px;color:#ccd6f6;white-space:nowrap;width:20px;text-align:center;transform:scaleX(0.92);transform-origin:50% 50%;">5</div>
<svg style="position:absolute;left:557.0px;top:405.5px;" width="20" height="13" viewBox="0 0 20 13"><path d="M1 2 Q8 0.500 13 2.500 Q9 3 5.500 5 Q1 8 4 10.500 Q9 12.500 15 11 Q19.500 9 18 5.500 Q16 3 12 4.500" stroke="#e01010" stroke-width="1.600" fill="none"/></svg>
<div style="left:579.0px;top:404.50px;font-size:11.5px;line-height:15px;color:#000;white-space:nowrap;font-weight:bold;">Сегодня: 15.06.2009</div>
<div style="left:731.5px;top:278px;width:149.5px;height:141.0px;background:#fff;"></div>
<div style="left:731.5px;top:278px;width:149.5px;height:27.5px;background:#5a72c6;"></div>
<div style="left:736.0px;top:283.5px;width:20px;height:15px;background:#ece9d8;box-sizing:border-box;border:1px solid;border-color:#fff #716f64 #716f64 #fff;box-shadow:inset -1px -1px 0 #aca899, inset 1px 1px 0 #f6f4ea;"></div>
<svg style="position:absolute;left:743.5px;top:287.5px;" width="4" height="7" viewBox="0 0 4 7"><path d="M4 0 V7 L0 3.500 Z" fill="#000"/></svg>
<div style="left:856.0px;top:283.5px;width:20.5px;height:15px;background:#ece9d8;box-sizing:border-box;border:1px solid;border-color:#fff #716f64 #716f64 #fff;box-shadow:inset -1px -1px 0 #aca899, inset 1px 1px 0 #f6f4ea;"></div>
<svg style="position:absolute;left:864.5px;top:287.5px;" width="4" height="7" viewBox="0 0 4 7"><path d="M0 0 V7 L4 3.500 Z" fill="#000"/></svg>
<div style="left:731.5px;top:284.00px;font-size:11.5px;line-height:15px;color:#fff;white-space:nowrap;width:147.5px;text-align:center;font-weight:bold;">Июнь 2009 г.</div>
<div style="left:732.0px;top:306.50px;font-size:11px;line-height:13px;color:#5a72c6;white-space:nowrap;width:20px;text-align:center;transform:scaleX(0.92);transform-origin:50% 50%;">Пн</div>
<div style="left:753.25px;top:306.50px;font-size:11px;line-height:13px;color:#5a72c6;white-space:nowrap;width:20px;text-align:center;transform:scaleX(0.92);transform-origin:50% 50%;">Вт</div>
<div style="left:774.5px;top:306.50px;font-size:11px;line-height:13px;color:#5a72c6;white-space:nowrap;width:20px;text-align:center;transform:scaleX(0.92);transform-origin:50% 50%;">Ср</div>
<div style="left:795.75px;top:306.50px;font-size:11px;line-height:13px;color:#5a72c6;white-space:nowrap;width:20px;text-align:center;transform:scaleX(0.92);transform-origin:50% 50%;">Чт</div>
<div style="left:817.0px;top:306.50px;font-size:11px;line-height:13px;color:#5a72c6;white-space:nowrap;width:20px;text-align:center;transform:scaleX(0.92);transform-origin:50% 50%;">Пт</div>
<div style="left:838.25px;top:306.50px;font-size:11px;line-height:13px;color:#5a72c6;white-space:nowrap;width:20px;text-align:center;transform:scaleX(0.92);transform-origin:50% 50%;">Сб</div>
<div style="left:859.5px;top:306.50px;font-size:11px;line-height:13px;color:#5a72c6;white-space:nowrap;width:20px;text-align:center;transform:scaleX(0.92);transform-origin:50% 50%;">Вс</div>
<div style="left:735.0px;top:318.5px;width:142.0px;height:1px;background:#444;"></div>
<div style="left:732.0px;top:320.00px;font-size:11px;line-height:13px;color:#ccd6f6;white-space:nowrap;width:20px;text-align:center;transform:scaleX(0.92);transform-origin:50% 50%;">25</div>
<div style="left:753.25px;top:320.00px;font-size:11px;line-height:13px;color:#ccd6f6;white-space:nowrap;width:20px;text-align:center;transform:scaleX(0.92);transform-origin:50% 50%;">26</div>
<div style="left:774.5px;top:320.00px;font-size:11px;line-height:13px;color:#ccd6f6;white-space:nowrap;width:20px;text-align:center;transform:scaleX(0.92);transform-origin:50% 50%;">27</div>
<div style="left:795.75px;top:320.00px;font-size:11px;line-height:13px;color:#ccd6f6;white-space:nowrap;width:20px;text-align:center;transform:scaleX(0.92);transform-origin:50% 50%;">28</div>
<div style="left:817.0px;top:320.00px;font-size:11px;line-height:13px;color:#ccd6f6;white-space:nowrap;width:20px;text-align:center;transform:scaleX(0.92);transform-origin:50% 50%;">29</div>
<div style="left:838.25px;top:320.00px;font-size:11px;line-height:13px;color:#ccd6f6;white-space:nowrap;width:20px;text-align:center;transform:scaleX(0.92);transform-origin:50% 50%;">30</div>
<div style="left:859.5px;top:320.00px;font-size:11px;line-height:13px;color:#ccd6f6;white-space:nowrap;width:20px;text-align:center;transform:scaleX(0.92);transform-origin:50% 50%;">31</div>
<div style="left:732.0px;top:333.90px;font-size:11px;line-height:13px;color:#000;white-space:nowrap;width:20px;text-align:center;transform:scaleX(0.92);transform-origin:50% 50%;">1</div>
<div style="left:753.25px;top:333.90px;font-size:11px;line-height:13px;color:#000;white-space:nowrap;width:20px;text-align:center;transform:scaleX(0.92);transform-origin:50% 50%;">2</div>
<div style="left:774.5px;top:333.90px;font-size:11px;line-height:13px;color:#000;white-space:nowrap;width:20px;text-align:center;transform:scaleX(0.92);transform-origin:50% 50%;">3</div>
<div style="left:795.75px;top:333.90px;font-size:11px;line-height:13px;color:#000;white-space:nowrap;width:20px;text-align:center;transform:scaleX(0.92);transform-origin:50% 50%;">4</div>
<div style="left:817.0px;top:333.90px;font-size:11px;line-height:13px;color:#000;white-space:nowrap;width:20px;text-align:center;transform:scaleX(0.92);transform-origin:50% 50%;">5</div>
<div style="left:838.25px;top:333.90px;font-size:11px;line-height:13px;color:#000;white-space:nowrap;width:20px;text-align:center;transform:scaleX(0.92);transform-origin:50% 50%;">6</div>
<div style="left:859.5px;top:333.90px;font-size:11px;line-height:13px;color:#000;white-space:nowrap;width:20px;text-align:center;transform:scaleX(0.92);transform-origin:50% 50%;">7</div>
<div style="left:732.0px;top:347.80px;font-size:11px;line-height:13px;color:#000;white-space:nowrap;width:20px;text-align:center;transform:scaleX(0.92);transform-origin:50% 50%;">8</div>
<div style="left:753.25px;top:347.80px;font-size:11px;line-height:13px;color:#000;white-space:nowrap;width:20px;text-align:center;transform:scaleX(0.92);transform-origin:50% 50%;">9</div>
<div style="left:774.5px;top:347.80px;font-size:11px;line-height:13px;color:#000;white-space:nowrap;width:20px;text-align:center;transform:scaleX(0.92);transform-origin:50% 50%;">10</div>
<div style="left:795.75px;top:347.80px;font-size:11px;line-height:13px;color:#000;white-space:nowrap;width:20px;text-align:center;transform:scaleX(0.92);transform-origin:50% 50%;">11</div>
<div style="left:817.0px;top:347.80px;font-size:11px;line-height:13px;color:#000;white-space:nowrap;width:20px;text-align:center;transform:scaleX(0.92);transform-origin:50% 50%;">12</div>
<div style="left:838.25px;top:347.80px;font-size:11px;line-height:13px;color:#000;white-space:nowrap;width:20px;text-align:center;transform:scaleX(0.92);transform-origin:50% 50%;">13</div>
<div style="left:859.5px;top:347.80px;font-size:11px;line-height:13px;color:#000;white-space:nowrap;width:20px;text-align:center;transform:scaleX(0.92);transform-origin:50% 50%;">14</div>
<svg style="position:absolute;left:730.0px;top:360.7px;" width="24" height="15" viewBox="0 0 24 15"><ellipse cx="11.500" cy="8.300" rx="8" ry="4.300" fill="#4a66c4"/><path d="M1.500 2.500 Q8 1 13 3 Q8 2.500 4 5 Q0.500 8 3.500 11.500 Q9 14.500 17 12.500 Q22 10 20.500 6.500 Q18 3.500 13 3.800" fill="none" stroke="#e01010" stroke-width="1.500"/></svg>
<div style="left:732.0px;top:361.70px;font-size:11px;line-height:13px;color:#dfe6fa;white-space:nowrap;width:20px;text-align:center;transform:scaleX(0.92);transform-origin:50% 50%;">15</div>
<div style="left:753.25px;top:361.70px;font-size:11px;line-height:13px;color:#000;white-space:nowrap;width:20px;text-align:center;transform:scaleX(0.92);transform-origin:50% 50%;">16</div>
<div style="left:774.5px;top:361.70px;font-size:11px;line-height:13px;color:#000;white-space:nowrap;width:20px;text-align:center;transform:scaleX(0.92);transform-origin:50% 50%;">17</div>
<div style="left:795.75px;top:361.70px;font-size:11px;line-height:13px;color:#000;white-space:nowrap;width:20px;text-align:center;transform:scaleX(0.92);transform-origin:50% 50%;">18</div>
<div style="left:817.0px;top:361.70px;font-size:11px;line-height:13px;color:#000;white-space:nowrap;width:20px;text-align:center;transform:scaleX(0.92);transform-origin:50% 50%;">19</div>
<div style="left:838.25px;top:361.70px;font-size:11px;line-height:13px;color:#000;white-space:nowrap;width:20px;text-align:center;transform:scaleX(0.92);transform-origin:50% 50%;">20</div>
<div style="left:859.5px;top:361.70px;font-size:11px;line-height:13px;color:#000;white-space:nowrap;width:20px;text-align:center;transform:scaleX(0.92);transform-origin:50% 50%;">21</div>
<div style="left:732.0px;top:375.60px;font-size:11px;line-height:13px;color:#000;white-space:nowrap;width:20px;text-align:center;transform:scaleX(0.92);transform-origin:50% 50%;">22</div>
<div style="left:753.25px;top:375.60px;font-size:11px;line-height:13px;color:#000;white-space:nowrap;width:20px;text-align:center;transform:scaleX(0.92);transform-origin:50% 50%;">23</div>
<div style="left:774.5px;top:375.60px;font-size:11px;line-height:13px;color:#000;white-space:nowrap;width:20px;text-align:center;transform:scaleX(0.92);transform-origin:50% 50%;">24</div>
<div style="left:795.75px;top:375.60px;font-size:11px;line-height:13px;color:#000;white-space:nowrap;width:20px;text-align:center;transform:scaleX(0.92);transform-origin:50% 50%;">25</div>
<div style="left:817.0px;top:375.60px;font-size:11px;line-height:13px;color:#000;white-space:nowrap;width:20px;text-align:center;transform:scaleX(0.92);transform-origin:50% 50%;">26</div>
<div style="left:838.25px;top:375.60px;font-size:11px;line-height:13px;color:#000;white-space:nowrap;width:20px;text-align:center;transform:scaleX(0.92);transform-origin:50% 50%;">27</div>
<div style="left:859.5px;top:375.60px;font-size:11px;line-height:13px;color:#000;white-space:nowrap;width:20px;text-align:center;transform:scaleX(0.92);transform-origin:50% 50%;">28</div>
<div style="left:732.0px;top:389.50px;font-size:11px;line-height:13px;color:#000;white-space:nowrap;width:20px;text-align:center;transform:scaleX(0.92);transform-origin:50% 50%;">29</div>
<div style="left:753.25px;top:389.50px;font-size:11px;line-height:13px;color:#000;white-space:nowrap;width:20px;text-align:center;transform:scaleX(0.92);transform-origin:50% 50%;">30</div>
<div style="left:774.5px;top:389.50px;font-size:11px;line-height:13px;color:#ccd6f6;white-space:nowrap;width:20px;text-align:center;transform:scaleX(0.92);transform-origin:50% 50%;">1</div>
<div style="left:795.75px;top:389.50px;font-size:11px;line-height:13px;color:#ccd6f6;white-space:nowrap;width:20px;text-align:center;transform:scaleX(0.92);transform-origin:50% 50%;">2</div>
<div style="left:817.0px;top:389.50px;font-size:11px;line-height:13px;color:#ccd6f6;white-space:nowrap;width:20px;text-align:center;transform:scaleX(0.92);transform-origin:50% 50%;">3</div>
<div style="left:838.25px;top:389.50px;font-size:11px;line-height:13px;color:#ccd6f6;white-space:nowrap;width:20px;text-align:center;transform:scaleX(0.92);transform-origin:50% 50%;">4</div>
<div style="left:859.5px;top:389.50px;font-size:11px;line-height:13px;color:#ccd6f6;white-space:nowrap;width:20px;text-align:center;transform:scaleX(0.92);transform-origin:50% 50%;">5</div>
<svg style="position:absolute;left:735.0px;top:405.5px;" width="20" height="13" viewBox="0 0 20 13"><path d="M1 2 Q8 0.500 13 2.500 Q9 3 5.500 5 Q1 8 4 10.500 Q9 12.500 15 11 Q19.500 9 18 5.500 Q16 3 12 4.500" stroke="#e01010" stroke-width="1.600" fill="none"/></svg>
<div style="left:757.0px;top:404.50px;font-size:11.5px;line-height:15px;color:#000;white-space:nowrap;font-weight:bold;">Сегодня: 15.06.2009</div>
<div style="left:282px;top:402.70px;font-size:11px;line-height:14px;color:#000;white-space:nowrap;transform:scaleX(0.92);transform-origin:0 50%;">Поиск станции:</div>
<div style="left:363px;top:403.5px;width:170px;height:18.5px;background:#fff;box-sizing:border-box;border:1px solid;border-color:#9d9a8c #fff #fff #9d9a8c;box-shadow:inset 1px 1px 0 #66645a, inset -1px -1px 0 #e4e1d0;"></div>
<div style="left:282px;top:432.30px;font-size:11px;line-height:14px;color:#000;white-space:nowrap;transform:scaleX(0.92);transform-origin:0 50%;">Рейсы:</div>
<div style="left:281.5px;top:448px;width:444.5px;height:162.5px;background:#fff;box-sizing:border-box;border:1px solid;border-color:#9d9a8c #fff #fff #9d9a8c;box-shadow:inset 1px 1px 0 #66645a, inset -1px -1px 0 #e4e1d0;"></div>
<div style="left:283px;top:450px;width:11px;height:16px;background:#ece9d8;box-sizing:border-box;border-right:1px solid #000;border-bottom:1px solid #000;box-shadow:inset 1px 1px 0 #fff;"></div>
<div style="left:294px;top:450px;width:60px;height:16px;background:#ece9d8;box-sizing:border-box;border-right:1px solid #000;border-bottom:1px solid #000;box-shadow:inset 1px 1px 0 #fff;"></div>
<div style="left:296px;top:450px;width:57px;height:15px;overflow:hidden;"><div style="left:0px;top:1.00px;font-size:11px;line-height:14px;color:#000;white-space:nowrap;transform:scaleX(0.92);transform-origin:0 50%;">№ поезда</div></div>
<div style="left:354px;top:450px;width:144px;height:16px;background:#ece9d8;box-sizing:border-box;border-right:1px solid #000;border-bottom:1px solid #000;box-shadow:inset 1px 1px 0 #fff;"></div>
<div style="left:356px;top:450px;width:141px;height:15px;overflow:hidden;"><div style="left:0px;top:1.00px;font-size:11px;line-height:14px;color:#000;white-space:nowrap;transform:scaleX(0.92);transform-origin:0 50%;">Название поезда</div></div>
<div style="left:498px;top:450px;width:101px;height:16px;background:#ece9d8;box-sizing:border-box;border-right:1px solid #000;border-bottom:1px solid #000;box-shadow:inset 1px 1px 0 #fff;"></div>
<div style="left:500px;top:450px;width:98px;height:15px;overflow:hidden;"><div style="left:0px;top:1.00px;font-size:11px;line-height:14px;color:#000;white-space:nowrap;transform:scaleX(0.92);transform-origin:0 50%;">Дата оправления</div></div>
<div style="left:599px;top:450px;width:102px;height:16px;background:#ece9d8;box-sizing:border-box;border-right:1px solid #000;border-bottom:1px solid #000;box-shadow:inset 1px 1px 0 #fff;"></div>
<div style="left:601px;top:450px;width:99px;height:15px;overflow:hidden;"><div style="left:0px;top:1.00px;font-size:11px;line-height:14px;color:#000;white-space:nowrap;transform:scaleX(0.92);transform-origin:0 50%;">Дата прибытия</div></div>
<div style="left:283px;top:466px;width:11px;height:16px;background:#ece9d8;box-sizing:border-box;border-right:1px solid #000;border-bottom:1px solid #000;box-shadow:inset 1px 1px 0 #fff;"></div>
<div style="left:294px;top:466px;width:60px;height:16px;box-sizing:border-box;border-right:1px solid #c0c0c0;border-bottom:1px solid #c0c0c0;background:#fff;"></div>
<div style="left:354px;top:466px;width:144px;height:16px;box-sizing:border-box;border-right:1px solid #c0c0c0;border-bottom:1px solid #c0c0c0;background:#fff;"></div>
<div style="left:498px;top:466px;width:101px;height:16px;box-sizing:border-box;border-right:1px solid #c0c0c0;border-bottom:1px solid #c0c0c0;background:#fff;"></div>
<div style="left:599px;top:466px;width:102px;height:16px;box-sizing:border-box;border-right:1px solid #c0c0c0;border-bottom:1px solid #c0c0c0;background:#fff;"></div>
<div style="left:740px;top:448px;width:149px;height:45px;background:#ece9d8;box-sizing:border-box;border:1px solid;border-color:#fff #716f64 #716f64 #fff;box-shadow:inset -1px -1px 0 #aca899, inset 1px 1px 0 #f6f4ea;"></div>
<div style="left:777.5px;top:462.00px;font-size:13px;line-height:16px;color:#e01010;white-space:nowrap;font-weight:bold;">?</div>
<div style="left:785px;top:461.50px;font-size:14px;line-height:16px;color:#2040d0;white-space:nowrap;font-weight:normal;">{</div>
<div style="left:791px;top:464px;width:2px;height:13px;background:repeating-linear-gradient(180deg,#000 0,#000 1.500px,transparent 1.500px,transparent 2.500px);"></div>
<div style="left:808px;top:463.00px;font-size:13.5px;line-height:17px;color:#000;white-space:nowrap;font-weight:bold;letter-spacing:.6px;">Найти</div>
<div style="left:740px;top:499.5px;width:149px;height:23.5px;background:#ece9d8;box-sizing:border-box;border:1px solid;border-color:#fff #716f64 #716f64 #fff;box-shadow:inset -1px -1px 0 #aca899, inset 1px 1px 0 #f6f4ea;"></div>
<svg style="position:absolute;left:752px;top:503px;" width="17" height="17" viewBox="0 0 17 17"><path d="M1 13 Q1 10 4 11 L8.500 12.500 L13 11 Q16 10 16 13 V15 Q12 13.500 8.500 15.500 Q5 13.500 1 15 Z" fill="#fff" stroke="#1030c0" stroke-width="1.100"/><path d="M8.500 2 L13.500 11.500 H3.500 Z" fill="#f8e040" stroke="#705000" stroke-width=".9"/><text x="8.500" y="10.500" font-size="10" font-weight="bold" fill="#e01010" text-anchor="middle" font-family="Liberation Sans,sans-serif">?</text><path d="M1 15.500 Q5 14 8.500 16 Q12 14 16 15.500" stroke="#1030c0" stroke-width="1.300" fill="none"/></svg>
<div style="left:772px;top:505.00px;font-size:11px;line-height:14px;color:#000;white-space:nowrap;transform:scaleX(0.92);transform-origin:0 50%;">Информация о поезде</div>
<div style="left:740px;top:529px;width:149px;height:23.5px;background:#ece9d8;box-sizing:border-box;border:1px solid;border-color:#fff #716f64 #716f64 #fff;box-shadow:inset -1px -1px 0 #aca899, inset 1px 1px 0 #f6f4ea;"></div>
<svg style="position:absolute;left:764px;top:532.5px;" width="16" height="17" viewBox="0 0 16 17"><path d="M8 0 L9.500 3 L13 1.500 L12 5 L15.500 6 L12.500 8 L13 11 L8 9.500 L3 11 L3.500 8 L0.500 6 L4 5 L3 1.500 L6.500 3 Z" fill="#f8f020"/><circle cx="8" cy="6.500" r="3.600" fill="#fcfcf0" stroke="#222" stroke-width="1.100"/><rect x="6.300" y="10" width="3.400" height="4.500" fill="#333"/><path d="M7 5.500 Q8 8 9 5.500" stroke="#555" fill="none" stroke-width=".8"/></svg>
<div style="left:784px;top:534.50px;font-size:11px;line-height:14px;color:#000;white-space:nowrap;transform:scaleX(0.92);transform-origin:0 50%;">Наличие билетов</div>
<div style="left:740px;top:558.5px;width:149px;height:23.5px;background:#ece9d8;box-sizing:border-box;border:1px solid;border-color:#fff #716f64 #716f64 #fff;box-shadow:inset -1px -1px 0 #aca899, inset 1px 1px 0 #f6f4ea;"></div>
<svg style="position:absolute;left:766px;top:562px;" width="17" height="17" viewBox="0 0 17 17"><path d="M6 1.500 H13 L15.500 4 V15.500 H6 Z" fill="#fff" stroke="#222" stroke-width="1.100"/><path d="M8 4 H12 M8 6.500 H13.500" stroke="#3050d0" stroke-width="1.200"/><path d="M9 11 H13.500 M9 13 H13.500" stroke="#888" stroke-width=".9"/><path d="M1 8.500 Q1 7 3 7 H8.500 Q10 7 10 8.500 V12.500 Q10 14 8.500 14 H3 Q1 14 1 12.500 Z" fill="#f0e050" stroke="#222" stroke-width="1.100"/><path d="M3.500 9.300 H9.500 M3.500 11.500 H9.500" stroke="#222" stroke-width=".8"/></svg>
<div style="left:786px;top:564.00px;font-size:11px;line-height:14px;color:#000;white-space:nowrap;transform:scaleX(0.92);transform-origin:0 50%;">Продажа билета</div>
<div style="left:822px;top:596px;width:69.5px;height:22.5px;background:#ece9d8;box-sizing:border-box;border:1px solid;border-color:#fff #716f64 #716f64 #fff;box-shadow:inset -1px -1px 0 #aca899, inset 1px 1px 0 #f6f4ea;"></div>
<svg style="position:absolute;left:832px;top:597.5px" width="18.0" height="19.0" viewBox="0 0 18 19"><rect x="6" y="0.500" width="4" height="2" fill="#30c030" stroke="#1a5a1a" stroke-width=".6"/><path d="M4.500 3.500 H11.500 V16 H4.500 Z" fill="#e020e0"/><path d="M6.500 5 H9.500 V16 H6.500 Z" fill="#80e0e0"/><path d="M4.500 16.500 V3.500 H11.500 V16.500" fill="none" stroke="#101060" stroke-width="1.300"/><path d="M1 17 H4.500 M11.500 17 H16.500" stroke="#101060" stroke-width="1.500"/></svg>
<div style="left:853px;top:601.00px;font-size:11px;line-height:14px;color:#000;white-space:nowrap;transform:scaleX(0.92);transform-origin:0 50%;">Выход</div>
<div style="left:264px;top:674px;width:643px;height:348px;background:linear-gradient(90deg,#0c50dc 0%,#0c50dc 98%,#0020b8 100%);border-radius:7px 7px 0 0;"></div>
<div style="left:264px;top:674px;width:643px;height:24px;border-radius:7px 7px 0 0;background:linear-gradient(180deg,#3a86f4 0%,#0f5ee8 12%,#0553dc 40%,#0458e6 75%,#0a62f0 90%,#0448c8 100%);"></div>
<div style="left:267.5px;top:698px;width:636.5px;height:320px;background:#ece9d8;box-sizing:border-box;border-right:1px solid #fdf9e2;"></div>
<svg style="position:absolute;left:269px;top:680px" width="14.0" height="14.0" viewBox="0 0 14 14"><circle cx="6.500" cy="6.500" r="5" fill="#10908c" stroke="#0a2a2a" stroke-width="1.300" stroke-dasharray="2.200 .9"/><path d="M0.500 11 L13.500 1.500" stroke="#e8e020" stroke-width="1.300"/><circle cx="4" cy="8.500" r="1.400" fill="#f0f010"/><circle cx="9.500" cy="5" r="1.300" fill="#f0f010"/><rect x="5.600" y="3" width="2.600" height="10" fill="#e8c860" stroke="#8a2a10" stroke-width=".9"/><path d="M4.500 13.300 H9.500" stroke="#200" stroke-width="1.400"/><circle cx="7.500" cy="13.200" r="1" fill="#e01010"/></svg>
<div style="left:284px;top:680.50px;font-size:11px;line-height:14px;color:#fff;white-space:nowrap;transform:scaleX(0.93);transform-origin:0 50%;font-weight:bold;letter-spacing:.15px;text-shadow:1px 1px 0 #0a2a80;">Справочная - состав поезда и путь следования</div>
<div style="left:847.5px;top:678px;width:17.5px;height:17.5px;box-sizing:border-box;border:1px solid #fff;border-radius:3px;background:linear-gradient(135deg,#5a94f4,#2a62dc 50%,#1c4ec4);"></div>
<div style="left:852px;top:689.5px;width:6px;height:2.5px;background:#fff;"></div>
<div style="left:866.5px;top:678px;width:17.5px;height:17.5px;box-sizing:border-box;border:1px solid rgba(255,255,255,.35);border-radius:3px;background:linear-gradient(135deg,#3a70e8,#1a54d8 50%,#164cc8);"></div>
<div style="left:871px;top:682.5px;width:9px;height:8.5px;box-sizing:border-box;border:1px solid #5a84e4;border-top:2.500px solid #5a84e4;"></div>
<div style="left:885.5px;top:678px;width:17.5px;height:17.5px;box-sizing:border-box;border:1px solid #fff;border-radius:3px;background:linear-gradient(135deg,#e8927c,#d0452a 50%,#b8341c);"></div>
<svg style="position:absolute;left:889.5px;top:682px;" width="10" height="10" viewBox="0 0 10 10"><path d="M1 1 L9 9 M9 1 L1 9" stroke="#fff" stroke-width="1.900"/></svg>
<div style="left:279.5px;top:711.30px;font-size:10.3px;line-height:13px;color:#000;white-space:nowrap;transform:scaleX(0.865);transform-origin:0 50%;">№ поезда:</div>
<div style="left:326px;top:712px;width:79.5px;height:16px;background:#fff;box-sizing:border-box;border:1px solid;border-color:#9d9a8c #fff #fff #9d9a8c;box-shadow:inset 1px 1px 0 #66645a, inset -1px -1px 0 #e4e1d0;"></div>
<div style="left:391.5px;top:714px;width:12px;height:12px;background:#ece9d8;box-sizing:border-box;border:1px solid;border-color:#fff #5c5a50 #5c5a50 #fff;box-shadow:inset -1px -1px 0 #aca899;"></div>
<svg style="position:absolute;left:394.0px;top:718.5px" width="7" height="4" viewBox="0 0 7 4"><path d="M0 0 H7 L3.500 4 Z" fill="#000"/></svg>
<div style="left:330px;top:714.80px;font-size:10.3px;line-height:13px;color:#000;white-space:nowrap;transform:scaleX(0.865);transform-origin:0 50%;">210 ПГ</div>
<div style="left:432.5px;top:711.30px;font-size:10.3px;line-height:13px;color:#000;white-space:nowrap;transform:scaleX(0.865);transform-origin:0 50%;">Название поезда:</div>
<div style="left:512px;top:712px;width:125.5px;height:16px;background:#fff;box-sizing:border-box;border:1px solid;border-color:#9d9a8c #fff #fff #9d9a8c;box-shadow:inset 1px 1px 0 #66645a, inset -1px -1px 0 #e4e1d0;"></div>
<div style="left:623.5px;top:714px;width:12px;height:12px;background:#ece9d8;box-sizing:border-box;border:1px solid;border-color:#fff #5c5a50 #5c5a50 #fff;box-shadow:inset -1px -1px 0 #aca899;"></div>
<svg style="position:absolute;left:626.0px;top:718.5px" width="7" height="4" viewBox="0 0 7 4"><path d="M0 0 H7 L3.500 4 Z" fill="#000"/></svg>
<div style="left:516px;top:715.30px;font-size:9.6px;line-height:12px;color:#000;white-space:nowrap;transform:scaleX(0.865);transform-origin:0 50%;">Симферополь-Уфа</div>
<div style="left:280px;top:750.80px;font-size:10.3px;line-height:13px;color:#000;white-space:nowrap;transform:scaleX(0.865);transform-origin:0 50%;">Вагоны в составе поезда:</div>
<div style="left:280px;top:762.5px;width:371.5px;height:214px;background:#fff;box-sizing:border-box;border:1px solid;border-color:#9d9a8c #fff #fff #9d9a8c;box-shadow:inset 1px 1px 0 #66645a, inset -1px -1px 0 #e4e1d0;"></div>
<div style="left:282px;top:764px;width:9px;height:15px;background:#ece9d8;box-sizing:border-box;border-right:1px solid #2a2a2a;border-bottom:1px solid #2a2a2a;box-shadow:inset 1px 1px 0 #fff;"></div>
<div style="left:291px;top:764px;width:58px;height:15px;background:#ece9d8;box-sizing:border-box;border-right:1px solid #2a2a2a;border-bottom:1px solid #2a2a2a;box-shadow:inset 1px 1px 0 #fff;"></div>
<div style="left:292.5px;top:764px;width:55.5px;height:14px;overflow:hidden;"><div style="left:0px;top:1.80px;font-size:10.3px;line-height:13px;color:#000;white-space:nowrap;transform:scaleX(0.865);transform-origin:0 50%;">№ в составе</div></div>
<div style="left:349px;top:764px;width:29px;height:15px;background:#ece9d8;box-sizing:border-box;border-right:1px solid #2a2a2a;border-bottom:1px solid #2a2a2a;box-shadow:inset 1px 1px 0 #fff;"></div>
<div style="left:350.5px;top:764px;width:26.5px;height:14px;overflow:hidden;"><div style="left:0px;top:1.80px;font-size:10.3px;line-height:13px;color:#000;white-space:nowrap;transform:scaleX(0.865);transform-origin:0 50%;">Класс</div></div>
<div style="left:378px;top:764px;width:64px;height:15px;background:#ece9d8;box-sizing:border-box;border-right:1px solid #2a2a2a;border-bottom:1px solid #2a2a2a;box-shadow:inset 1px 1px 0 #fff;"></div>
<div style="left:379.5px;top:764px;width:61.5px;height:14px;overflow:hidden;"><div style="left:0px;top:1.80px;font-size:10.3px;line-height:13px;color:#000;white-space:nowrap;transform:scaleX(0.865);transform-origin:0 50%;">Тип</div></div>
<div style="left:442px;top:764px;width:68px;height:15px;background:#ece9d8;box-sizing:border-box;border-right:1px solid #2a2a2a;border-bottom:1px solid #2a2a2a;box-shadow:inset 1px 1px 0 #fff;"></div>
<div style="left:443.5px;top:764px;width:65.5px;height:14px;overflow:hidden;"><div style="left:0px;top:1.80px;font-size:10.3px;line-height:13px;color:#000;white-space:nowrap;transform:scaleX(0.865);transform-origin:0 50%;">Категория</div></div>
<div style="left:510px;top:764px;width:59px;height:15px;background:#ece9d8;box-sizing:border-box;border-right:1px solid #2a2a2a;border-bottom:1px solid #2a2a2a;box-shadow:inset 1px 1px 0 #fff;"></div>
<div style="left:511.5px;top:764px;width:56.5px;height:14px;overflow:hidden;"><div style="left:0px;top:1.80px;font-size:10.3px;line-height:13px;color:#000;white-space:nowrap;transform:scaleX(0.865);transform-origin:0 50%;">От станции</div></div>
<div style="left:569px;top:764px;width:61px;height:15px;background:#ece9d8;box-sizing:border-box;border-right:1px solid #2a2a2a;border-bottom:1px solid #2a2a2a;box-shadow:inset 1px 1px 0 #fff;"></div>
<div style="left:570.5px;top:764px;width:58.5px;height:14px;overflow:hidden;"><div style="left:0px;top:1.80px;font-size:10.3px;line-height:13px;color:#000;white-space:nowrap;transform:scaleX(0.865);transform-origin:0 50%;">До станции</div></div>
<div style="left:282px;top:779px;width:9px;height:15px;background:#ece9d8;box-sizing:border-box;border-right:1px solid #2a2a2a;border-bottom:1px solid #2a2a2a;box-shadow:inset 1px 1px 0 #fff;"></div>
<svg style="position:absolute;left:283.0px;top:781.0px" width="6" height="10" viewBox="0 0 6 10"><path d="M0 0 V10 L6 5 Z" fill="#000"/></svg>
<div style="left:291px;top:779px;width:58px;height:15px;box-sizing:border-box;border-right:1px solid #c0c0c0;border-bottom:1px solid #c0c0c0;background:#fff;"></div>
<div style="left:349px;top:779px;width:29px;height:15px;box-sizing:border-box;border-right:1px solid #c0c0c0;border-bottom:1px solid #c0c0c0;background:#fff;"></div>
<div style="left:378px;top:779px;width:64px;height:15px;box-sizing:border-box;border-right:1px solid #c0c0c0;border-bottom:1px solid #c0c0c0;background:#fff;"></div>
<div style="left:379.5px;top:779px;width:61.5px;height:14px;overflow:hidden;"><div style="left:0px;top:1.80px;font-size:10.3px;line-height:13px;color:#000;white-space:nowrap;transform:scaleX(0.865);transform-origin:0 50%;">Вагон-рестора</div></div>
<div style="left:442px;top:779px;width:68px;height:15px;box-sizing:border-box;border-right:1px solid #c0c0c0;border-bottom:1px solid #c0c0c0;background:#fff;"></div>
<div style="left:443.5px;top:779px;width:65.5px;height:14px;overflow:hidden;"><div style="left:0px;top:1.80px;font-size:10.3px;line-height:13px;color:#000;white-space:nowrap;transform:scaleX(0.865);transform-origin:0 50%;">Собственный</div></div>
<div style="left:510px;top:779px;width:59px;height:15px;box-sizing:border-box;border-right:1px solid #c0c0c0;border-bottom:1px solid #c0c0c0;background:#fff;"></div>
<div style="left:511.5px;top:779px;width:56.5px;height:14px;overflow:hidden;"><div style="left:0px;top:1.80px;font-size:10.3px;line-height:13px;color:#000;white-space:nowrap;transform:scaleX(0.865);transform-origin:0 50%;">Симферополь</div></div>
<div style="left:569px;top:779px;width:61px;height:15px;box-sizing:border-box;border-right:1px solid #c0c0c0;border-bottom:1px solid #c0c0c0;background:#fff;"></div>
<div style="left:570.5px;top:779px;width:58.5px;height:14px;overflow:hidden;"><div style="left:0px;top:1.80px;font-size:10.3px;line-height:13px;color:#000;white-space:nowrap;transform:scaleX(0.865);transform-origin:0 50%;">Уфа-1</div></div>
<div style="left:282px;top:794px;width:9px;height:14px;background:#ece9d8;box-sizing:border-box;border-right:1px solid #2a2a2a;border-bottom:1px solid #2a2a2a;box-shadow:inset 1px 1px 0 #fff;"></div>
<div style="left:291px;top:794px;width:58px;height:14px;box-sizing:border-box;border-right:1px solid #c0c0c0;border-bottom:1px solid #c0c0c0;background:#fff;"></div>
<div style="left:349px;top:794px;width:29px;height:14px;box-sizing:border-box;border-right:1px solid #c0c0c0;border-bottom:1px solid #c0c0c0;background:#fff;"></div>
<div style="left:378px;top:794px;width:64px;height:14px;box-sizing:border-box;border-right:1px solid #c0c0c0;border-bottom:1px solid #c0c0c0;background:#fff;"></div>
<div style="left:379.5px;top:794px;width:61.5px;height:13px;overflow:hidden;"><div style="left:0px;top:1.30px;font-size:10.3px;line-height:13px;color:#000;white-space:nowrap;transform:scaleX(0.865);transform-origin:0 50%;">Локомотив</div></div>
<div style="left:442px;top:794px;width:68px;height:14px;box-sizing:border-box;border-right:1px solid #c0c0c0;border-bottom:1px solid #c0c0c0;background:#fff;"></div>
<div style="left:443.5px;top:794px;width:65.5px;height:13px;overflow:hidden;"><div style="left:0px;top:1.30px;font-size:10.3px;line-height:13px;color:#000;white-space:nowrap;transform:scaleX(0.865);transform-origin:0 50%;">Собственный</div></div>
<div style="left:510px;top:794px;width:59px;height:14px;box-sizing:border-box;border-right:1px solid #c0c0c0;border-bottom:1px solid #c0c0c0;background:#fff;"></div>
<div style="left:511.5px;top:794px;width:56.5px;height:13px;overflow:hidden;"><div style="left:0px;top:1.30px;font-size:10.3px;line-height:13px;color:#000;white-space:nowrap;transform:scaleX(0.865);transform-origin:0 50%;">Симферополь</div></div>
<div style="left:569px;top:794px;width:61px;height:14px;box-sizing:border-box;border-right:1px solid #c0c0c0;border-bottom:1px solid #c0c0c0;background:#fff;"></div>
<div style="left:570.5px;top:794px;width:58.5px;height:13px;overflow:hidden;"><div style="left:0px;top:1.30px;font-size:10.3px;line-height:13px;color:#000;white-space:nowrap;transform:scaleX(0.865);transform-origin:0 50%;">Уфа-1</div></div>
<div style="left:282px;top:808px;width:9px;height:15px;background:#ece9d8;box-sizing:border-box;border-right:1px solid #2a2a2a;border-bottom:1px solid #2a2a2a;box-shadow:inset 1px 1px 0 #fff;"></div>
<div style="left:291px;top:808px;width:58px;height:15px;box-sizing:border-box;border-right:1px solid #c0c0c0;border-bottom:1px solid #c0c0c0;background:#fff;"></div>
<div style="left:291px;top:808px;width:54.5px;height:14px;overflow:hidden;"><div style="left:0px;top:1.80px;font-size:10.3px;line-height:13px;color:#000;white-space:nowrap;width:54.5px;text-align:right;transform:scaleX(0.865);transform-origin:100% 50%;">2</div></div>
<div style="left:349px;top:808px;width:29px;height:15px;box-sizing:border-box;border-right:1px solid #c0c0c0;border-bottom:1px solid #c0c0c0;background:#fff;"></div>
<div style="left:350.5px;top:808px;width:26.5px;height:14px;overflow:hidden;"><div style="left:0px;top:1.80px;font-size:10.3px;line-height:13px;color:#000;white-space:nowrap;transform:scaleX(0.865);transform-origin:0 50%;">ПЛ</div></div>
<div style="left:378px;top:808px;width:64px;height:15px;box-sizing:border-box;border-right:1px solid #c0c0c0;border-bottom:1px solid #c0c0c0;background:#fff;"></div>
<div style="left:379.5px;top:808px;width:61.5px;height:14px;overflow:hidden;"><div style="left:0px;top:1.80px;font-size:10.3px;line-height:13px;color:#000;white-space:nowrap;transform:scaleX(0.865);transform-origin:0 50%;">Пассажирский</div></div>
<div style="left:442px;top:808px;width:68px;height:15px;box-sizing:border-box;border-right:1px solid #c0c0c0;border-bottom:1px solid #c0c0c0;background:#fff;"></div>
<div style="left:443.5px;top:808px;width:65.5px;height:14px;overflow:hidden;"><div style="left:0px;top:1.80px;font-size:10.3px;line-height:13px;color:#000;white-space:nowrap;transform:scaleX(0.865);transform-origin:0 50%;">Собственный</div></div>
<div style="left:510px;top:808px;width:59px;height:15px;box-sizing:border-box;border-right:1px solid #c0c0c0;border-bottom:1px solid #c0c0c0;background:#fff;"></div>
<div style="left:511.5px;top:808px;width:56.5px;height:14px;overflow:hidden;"><div style="left:0px;top:1.80px;font-size:10.3px;line-height:13px;color:#000;white-space:nowrap;transform:scaleX(0.865);transform-origin:0 50%;">Симферополь</div></div>
<div style="left:569px;top:808px;width:61px;height:15px;box-sizing:border-box;border-right:1px solid #c0c0c0;border-bottom:1px solid #c0c0c0;background:#fff;"></div>
<div style="left:570.5px;top:808px;width:58.5px;height:14px;overflow:hidden;"><div style="left:0px;top:1.80px;font-size:10.3px;line-height:13px;color:#000;white-space:nowrap;transform:scaleX(0.865);transform-origin:0 50%;">Уфа-1</div></div>
<div style="left:282px;top:823px;width:9px;height:15px;background:#ece9d8;box-sizing:border-box;border-right:1px solid #2a2a2a;border-bottom:1px solid #2a2a2a;box-shadow:inset 1px 1px 0 #fff;"></div>
<div style="left:291px;top:823px;width:58px;height:15px;box-sizing:border-box;border-right:1px solid #c0c0c0;border-bottom:1px solid #c0c0c0;background:#fff;"></div>
<div style="left:291px;top:823px;width:54.5px;height:14px;overflow:hidden;"><div style="left:0px;top:1.80px;font-size:10.3px;line-height:13px;color:#000;white-space:nowrap;width:54.5px;text-align:right;transform:scaleX(0.865);transform-origin:100% 50%;">4</div></div>
<div style="left:349px;top:823px;width:29px;height:15px;box-sizing:border-box;border-right:1px solid #c0c0c0;border-bottom:1px solid #c0c0c0;background:#fff;"></div>
<div style="left:350.5px;top:823px;width:26.5px;height:14px;overflow:hidden;"><div style="left:0px;top:1.80px;font-size:10.3px;line-height:13px;color:#000;white-space:nowrap;transform:scaleX(0.865);transform-origin:0 50%;">ПЛ</div></div>
<div style="left:378px;top:823px;width:64px;height:15px;box-sizing:border-box;border-right:1px solid #c0c0c0;border-bottom:1px solid #c0c0c0;background:#fff;"></div>
<div style="left:379.5px;top:823px;width:61.5px;height:14px;overflow:hidden;"><div style="left:0px;top:1.80px;font-size:10.3px;line-height:13px;color:#000;white-space:nowrap;transform:scaleX(0.865);transform-origin:0 50%;">Пассажирский</div></div>
<div style="left:442px;top:823px;width:68px;height:15px;box-sizing:border-box;border-right:1px solid #c0c0c0;border-bottom:1px solid #c0c0c0;background:#fff;"></div>
<div style="left:443.5px;top:823px;width:65.5px;height:14px;overflow:hidden;"><div style="left:0px;top:1.80px;font-size:10.3px;line-height:13px;color:#000;white-space:nowrap;transform:scaleX(0.865);transform-origin:0 50%;">Собственный</div></div>
<div style="left:510px;top:823px;width:59px;height:15px;box-sizing:border-box;border-right:1px solid #c0c0c0;border-bottom:1px solid #c0c0c0;background:#fff;"></div>
<div style="left:511.5px;top:823px;width:56.5px;height:14px;overflow:hidden;"><div style="left:0px;top:1.80px;font-size:10.3px;line-height:13px;color:#000;white-space:nowrap;transform:scaleX(0.865);transform-origin:0 50%;">Симферополь</div></div>
<div style="left:569px;top:823px;width:61px;height:15px;box-sizing:border-box;border-right:1px solid #c0c0c0;border-bottom:1px solid #c0c0c0;background:#fff;"></div>
<div style="left:570.5px;top:823px;width:58.5px;height:14px;overflow:hidden;"><div style="left:0px;top:1.80px;font-size:10.3px;line-height:13px;color:#000;white-space:nowrap;transform:scaleX(0.865);transform-origin:0 50%;">Уфа-1</div></div>
<div style="left:282px;top:838px;width:9px;height:15px;background:#ece9d8;box-sizing:border-box;border-right:1px solid #2a2a2a;border-bottom:1px solid #2a2a2a;box-shadow:inset 1px 1px 0 #fff;"></div>
<div style="left:291px;top:838px;width:58px;height:15px;box-sizing:border-box;border-right:1px solid #c0c0c0;border-bottom:1px solid #c0c0c0;background:#fff;"></div>
<div style="left:291px;top:838px;width:54.5px;height:14px;overflow:hidden;"><div style="left:0px;top:1.80px;font-size:10.3px;line-height:13px;color:#000;white-space:nowrap;width:54.5px;text-align:right;transform:scaleX(0.865);transform-origin:100% 50%;">5</div></div>
<div style="left:349px;top:838px;width:29px;height:15px;box-sizing:border-box;border-right:1px solid #c0c0c0;border-bottom:1px solid #c0c0c0;background:#fff;"></div>
<div style="left:350.5px;top:838px;width:26.5px;height:14px;overflow:hidden;"><div style="left:0px;top:1.80px;font-size:10.3px;line-height:13px;color:#000;white-space:nowrap;transform:scaleX(0.865);transform-origin:0 50%;">КУП</div></div>
<div style="left:378px;top:838px;width:64px;height:15px;box-sizing:border-box;border-right:1px solid #c0c0c0;border-bottom:1px solid #c0c0c0;background:#fff;"></div>
<div style="left:379.5px;top:838px;width:61.5px;height:14px;overflow:hidden;"><div style="left:0px;top:1.80px;font-size:10.3px;line-height:13px;color:#000;white-space:nowrap;transform:scaleX(0.865);transform-origin:0 50%;">Пассажирский</div></div>
<div style="left:442px;top:838px;width:68px;height:15px;box-sizing:border-box;border-right:1px solid #c0c0c0;border-bottom:1px solid #c0c0c0;background:#fff;"></div>
<div style="left:443.5px;top:838px;width:65.5px;height:14px;overflow:hidden;"><div style="left:0px;top:1.80px;font-size:10.3px;line-height:13px;color:#000;white-space:nowrap;transform:scaleX(0.865);transform-origin:0 50%;">Собственный</div></div>
<div style="left:510px;top:838px;width:59px;height:15px;box-sizing:border-box;border-right:1px solid #c0c0c0;border-bottom:1px solid #c0c0c0;background:#fff;"></div>
<div style="left:511.5px;top:838px;width:56.5px;height:14px;overflow:hidden;"><div style="left:0px;top:1.80px;font-size:10.3px;line-height:13px;color:#000;white-space:nowrap;transform:scaleX(0.865);transform-origin:0 50%;">Симферополь</div></div>
<div style="left:569px;top:838px;width:61px;height:15px;box-sizing:border-box;border-right:1px solid #c0c0c0;border-bottom:1px solid #c0c0c0;background:#fff;"></div>
<div style="left:570.5px;top:838px;width:58.5px;height:14px;overflow:hidden;"><div style="left:0px;top:1.80px;font-size:10.3px;line-height:13px;color:#000;white-space:nowrap;transform:scaleX(0.865);transform-origin:0 50%;">Уфа-1</div></div>
<div style="left:282px;top:853px;width:9px;height:15px;background:#ece9d8;box-sizing:border-box;border-right:1px solid #2a2a2a;border-bottom:1px solid #2a2a2a;box-shadow:inset 1px 1px 0 #fff;"></div>
<div style="left:291px;top:853px;width:58px;height:15px;box-sizing:border-box;border-right:1px solid #c0c0c0;border-bottom:1px solid #c0c0c0;background:#fff;"></div>
<div style="left:291px;top:853px;width:54.5px;height:14px;overflow:hidden;"><div style="left:0px;top:1.80px;font-size:10.3px;line-height:13px;color:#000;white-space:nowrap;width:54.5px;text-align:right;transform:scaleX(0.865);transform-origin:100% 50%;">6</div></div>
<div style="left:349px;top:853px;width:29px;height:15px;box-sizing:border-box;border-right:1px solid #c0c0c0;border-bottom:1px solid #c0c0c0;background:#fff;"></div>
<div style="left:350.5px;top:853px;width:26.5px;height:14px;overflow:hidden;"><div style="left:0px;top:1.80px;font-size:10.3px;line-height:13px;color:#000;white-space:nowrap;transform:scaleX(0.865);transform-origin:0 50%;">КУП</div></div>
<div style="left:378px;top:853px;width:64px;height:15px;box-sizing:border-box;border-right:1px solid #c0c0c0;border-bottom:1px solid #c0c0c0;background:#fff;"></div>
<div style="left:379.5px;top:853px;width:61.5px;height:14px;overflow:hidden;"><div style="left:0px;top:1.80px;font-size:10.3px;line-height:13px;color:#000;white-space:nowrap;transform:scaleX(0.865);transform-origin:0 50%;">Пассажирский</div></div>
<div style="left:442px;top:853px;width:68px;height:15px;box-sizing:border-box;border-right:1px solid #c0c0c0;border-bottom:1px solid #c0c0c0;background:#fff;"></div>
<div style="left:443.5px;top:853px;width:65.5px;height:14px;overflow:hidden;"><div style="left:0px;top:1.80px;font-size:10.3px;line-height:13px;color:#000;white-space:nowrap;transform:scaleX(0.865);transform-origin:0 50%;">Собственный</div></div>
<div style="left:510px;top:853px;width:59px;height:15px;box-sizing:border-box;border-right:1px solid #c0c0c0;border-bottom:1px solid #c0c0c0;background:#fff;"></div>
<div style="left:511.5px;top:853px;width:56.5px;height:14px;overflow:hidden;"><div style="left:0px;top:1.80px;font-size:10.3px;line-height:13px;color:#000;white-space:nowrap;transform:scaleX(0.865);transform-origin:0 50%;">Симферополь</div></div>
<div style="left:569px;top:853px;width:61px;height:15px;box-sizing:border-box;border-right:1px solid #c0c0c0;border-bottom:1px solid #c0c0c0;background:#fff;"></div>
<div style="left:570.5px;top:853px;width:58.5px;height:14px;overflow:hidden;"><div style="left:0px;top:1.80px;font-size:10.3px;line-height:13px;color:#000;white-space:nowrap;transform:scaleX(0.865);transform-origin:0 50%;">Уфа-1</div></div>
<div style="left:282px;top:868px;width:9px;height:15px;background:#ece9d8;box-sizing:border-box;border-right:1px solid #2a2a2a;border-bottom:1px solid #2a2a2a;box-shadow:inset 1px 1px 0 #fff;"></div>
<div style="left:291px;top:868px;width:58px;height:15px;box-sizing:border-box;border-right:1px solid #c0c0c0;border-bottom:1px solid #c0c0c0;background:#fff;"></div>
<div style="left:291px;top:868px;width:54.5px;height:14px;overflow:hidden;"><div style="left:0px;top:1.80px;font-size:10.3px;line-height:13px;color:#000;white-space:nowrap;width:54.5px;text-align:right;transform:scaleX(0.865);transform-origin:100% 50%;">7</div></div>
<div style="left:349px;top:868px;width:29px;height:15px;box-sizing:border-box;border-right:1px solid #c0c0c0;border-bottom:1px solid #c0c0c0;background:#fff;"></div>
<div style="left:350.5px;top:868px;width:26.5px;height:14px;overflow:hidden;"><div style="left:0px;top:1.80px;font-size:10.3px;line-height:13px;color:#000;white-space:nowrap;transform:scaleX(0.865);transform-origin:0 50%;">ПЛ</div></div>
<div style="left:378px;top:868px;width:64px;height:15px;box-sizing:border-box;border-right:1px solid #c0c0c0;border-bottom:1px solid #c0c0c0;background:#fff;"></div>
<div style="left:379.5px;top:868px;width:61.5px;height:14px;overflow:hidden;"><div style="left:0px;top:1.80px;font-size:10.3px;line-height:13px;color:#000;white-space:nowrap;transform:scaleX(0.865);transform-origin:0 50%;">Пассажирский</div></div>
<div style="left:442px;top:868px;width:68px;height:15px;box-sizing:border-box;border-right:1px solid #c0c0c0;border-bottom:1px solid #c0c0c0;background:#fff;"></div>
<div style="left:443.5px;top:868px;width:65.5px;height:14px;overflow:hidden;"><div style="left:0px;top:1.80px;font-size:10.3px;line-height:13px;color:#000;white-space:nowrap;transform:scaleX(0.865);transform-origin:0 50%;">Собственный</div></div>
<div style="left:510px;top:868px;width:59px;height:15px;box-sizing:border-box;border-right:1px solid #c0c0c0;border-bottom:1px solid #c0c0c0;background:#fff;"></div>
<div style="left:511.5px;top:868px;width:56.5px;height:14px;overflow:hidden;"><div style="left:0px;top:1.80px;font-size:10.3px;line-height:13px;color:#000;white-space:nowrap;transform:scaleX(0.865);transform-origin:0 50%;">Симферополь</div></div>
<div style="left:569px;top:868px;width:61px;height:15px;box-sizing:border-box;border-right:1px solid #c0c0c0;border-bottom:1px solid #c0c0c0;background:#fff;"></div>
<div style="left:570.5px;top:868px;width:58.5px;height:14px;overflow:hidden;"><div style="left:0px;top:1.80px;font-size:10.3px;line-height:13px;color:#000;white-space:nowrap;transform:scaleX(0.865);transform-origin:0 50%;">Уфа-1</div></div>
<div style="left:282px;top:883px;width:9px;height:15px;background:#ece9d8;box-sizing:border-box;border-right:1px solid #2a2a2a;border-bottom:1px solid #2a2a2a;box-shadow:inset 1px 1px 0 #fff;"></div>
<div style="left:291px;top:883px;width:58px;height:15px;box-sizing:border-box;border-right:1px solid #c0c0c0;border-bottom:1px solid #c0c0c0;background:#fff;"></div>
<div style="left:291px;top:883px;width:54.5px;height:14px;overflow:hidden;"><div style="left:0px;top:1.80px;font-size:10.3px;line-height:13px;color:#000;white-space:nowrap;width:54.5px;text-align:right;transform:scaleX(0.865);transform-origin:100% 50%;">8</div></div>
<div style="left:349px;top:883px;width:29px;height:15px;box-sizing:border-box;border-right:1px solid #c0c0c0;border-bottom:1px solid #c0c0c0;background:#fff;"></div>
<div style="left:350.5px;top:883px;width:26.5px;height:14px;overflow:hidden;"><div style="left:0px;top:1.80px;font-size:10.3px;line-height:13px;color:#000;white-space:nowrap;transform:scaleX(0.865);transform-origin:0 50%;">КУП</div></div>
<div style="left:378px;top:883px;width:64px;height:15px;box-sizing:border-box;border-right:1px solid #c0c0c0;border-bottom:1px solid #c0c0c0;background:#fff;"></div>
<div style="left:379.5px;top:883px;width:61.5px;height:14px;overflow:hidden;"><div style="left:0px;top:1.80px;font-size:10.3px;line-height:13px;color:#000;white-space:nowrap;transform:scaleX(0.865);transform-origin:0 50%;">Пассажирский</div></div>
<div style="left:442px;top:883px;width:68px;height:15px;box-sizing:border-box;border-right:1px solid #c0c0c0;border-bottom:1px solid #c0c0c0;background:#fff;"></div>
<div style="left:443.5px;top:883px;width:65.5px;height:14px;overflow:hidden;"><div style="left:0px;top:1.80px;font-size:10.3px;line-height:13px;color:#000;white-space:nowrap;transform:scaleX(0.865);transform-origin:0 50%;">Прицепной</div></div>
<div style="left:510px;top:883px;width:59px;height:15px;box-sizing:border-box;border-right:1px solid #c0c0c0;border-bottom:1px solid #c0c0c0;background:#fff;"></div>
<div style="left:511.5px;top:883px;width:56.5px;height:14px;overflow:hidden;"><div style="left:0px;top:1.80px;font-size:10.3px;line-height:13px;color:#000;white-space:nowrap;transform:scaleX(0.865);transform-origin:0 50%;">Симферополь</div></div>
<div style="left:569px;top:883px;width:61px;height:15px;box-sizing:border-box;border-right:1px solid #c0c0c0;border-bottom:1px solid #c0c0c0;background:#fff;"></div>
<div style="left:570.5px;top:883px;width:58.5px;height:14px;overflow:hidden;"><div style="left:0px;top:1.80px;font-size:10.3px;line-height:13px;color:#000;white-space:nowrap;transform:scaleX(0.865);transform-origin:0 50%;">Пенза-1</div></div>
<div style="left:282px;top:898px;width:9px;height:15px;background:#ece9d8;box-sizing:border-box;border-right:1px solid #2a2a2a;border-bottom:1px solid #2a2a2a;box-shadow:inset 1px 1px 0 #fff;"></div>
<div style="left:291px;top:898px;width:58px;height:15px;box-sizing:border-box;border-right:1px solid #c0c0c0;border-bottom:1px solid #c0c0c0;background:#fff;"></div>
<div style="left:291px;top:898px;width:54.5px;height:14px;overflow:hidden;"><div style="left:0px;top:1.80px;font-size:10.3px;line-height:13px;color:#000;white-space:nowrap;width:54.5px;text-align:right;transform:scaleX(0.865);transform-origin:100% 50%;">9</div></div>
<div style="left:349px;top:898px;width:29px;height:15px;box-sizing:border-box;border-right:1px solid #c0c0c0;border-bottom:1px solid #c0c0c0;background:#fff;"></div>
<div style="left:350.5px;top:898px;width:26.5px;height:14px;overflow:hidden;"><div style="left:0px;top:1.80px;font-size:10.3px;line-height:13px;color:#000;white-space:nowrap;transform:scaleX(0.865);transform-origin:0 50%;">ПЛ</div></div>
<div style="left:378px;top:898px;width:64px;height:15px;box-sizing:border-box;border-right:1px solid #c0c0c0;border-bottom:1px solid #c0c0c0;background:#fff;"></div>
<div style="left:379.5px;top:898px;width:61.5px;height:14px;overflow:hidden;"><div style="left:0px;top:1.80px;font-size:10.3px;line-height:13px;color:#000;white-space:nowrap;transform:scaleX(0.865);transform-origin:0 50%;">Пассажирский</div></div>
<div style="left:442px;top:898px;width:68px;height:15px;box-sizing:border-box;border-right:1px solid #c0c0c0;border-bottom:1px solid #c0c0c0;background:#fff;"></div>
<div style="left:443.5px;top:898px;width:65.5px;height:14px;overflow:hidden;"><div style="left:0px;top:1.80px;font-size:10.3px;line-height:13px;color:#000;white-space:nowrap;transform:scaleX(0.865);transform-origin:0 50%;">Прицепной</div></div>
<div style="left:510px;top:898px;width:59px;height:15px;box-sizing:border-box;border-right:1px solid #c0c0c0;border-bottom:1px solid #c0c0c0;background:#fff;"></div>
<div style="left:511.5px;top:898px;width:56.5px;height:14px;overflow:hidden;"><div style="left:0px;top:1.80px;font-size:10.3px;line-height:13px;color:#000;white-space:nowrap;transform:scaleX(0.865);transform-origin:0 50%;">Симферополь</div></div>
<div style="left:569px;top:898px;width:61px;height:15px;box-sizing:border-box;border-right:1px solid #c0c0c0;border-bottom:1px solid #c0c0c0;background:#fff;"></div>
<div style="left:570.5px;top:898px;width:58.5px;height:14px;overflow:hidden;"><div style="left:0px;top:1.80px;font-size:10.3px;line-height:13px;color:#000;white-space:nowrap;transform:scaleX(0.865);transform-origin:0 50%;">Пенза-1</div></div>
<div style="left:282px;top:913px;width:9px;height:14px;background:#ece9d8;box-sizing:border-box;border-right:1px solid #2a2a2a;border-bottom:1px solid #2a2a2a;box-shadow:inset 1px 1px 0 #fff;"></div>
<div style="left:291px;top:913px;width:58px;height:14px;box-sizing:border-box;border-right:1px solid #c0c0c0;border-bottom:1px solid #c0c0c0;background:#fff;"></div>
<div style="left:291px;top:913px;width:54.5px;height:13px;overflow:hidden;"><div style="left:0px;top:1.30px;font-size:10.3px;line-height:13px;color:#000;white-space:nowrap;width:54.5px;text-align:right;transform:scaleX(0.865);transform-origin:100% 50%;">12</div></div>
<div style="left:349px;top:913px;width:29px;height:14px;box-sizing:border-box;border-right:1px solid #c0c0c0;border-bottom:1px solid #c0c0c0;background:#fff;"></div>
<div style="left:350.5px;top:913px;width:26.5px;height:13px;overflow:hidden;"><div style="left:0px;top:1.30px;font-size:10.3px;line-height:13px;color:#000;white-space:nowrap;transform:scaleX(0.865);transform-origin:0 50%;">ПЛ</div></div>
<div style="left:378px;top:913px;width:64px;height:14px;box-sizing:border-box;border-right:1px solid #c0c0c0;border-bottom:1px solid #c0c0c0;background:#fff;"></div>
<div style="left:379.5px;top:913px;width:61.5px;height:13px;overflow:hidden;"><div style="left:0px;top:1.30px;font-size:10.3px;line-height:13px;color:#000;white-space:nowrap;transform:scaleX(0.865);transform-origin:0 50%;">Пассажирский</div></div>
<div style="left:442px;top:913px;width:68px;height:14px;box-sizing:border-box;border-right:1px solid #c0c0c0;border-bottom:1px solid #c0c0c0;background:#fff;"></div>
<div style="left:443.5px;top:913px;width:65.5px;height:13px;overflow:hidden;"><div style="left:0px;top:1.30px;font-size:10.3px;line-height:13px;color:#000;white-space:nowrap;transform:scaleX(0.865);transform-origin:0 50%;">Прицепной</div></div>
<div style="left:510px;top:913px;width:59px;height:14px;box-sizing:border-box;border-right:1px solid #c0c0c0;border-bottom:1px solid #c0c0c0;background:#fff;"></div>
<div style="left:511.5px;top:913px;width:56.5px;height:13px;overflow:hidden;"><div style="left:0px;top:1.30px;font-size:10.3px;line-height:13px;color:#000;white-space:nowrap;transform:scaleX(0.865);transform-origin:0 50%;">Симферополь</div></div>
<div style="left:569px;top:913px;width:61px;height:14px;box-sizing:border-box;border-right:1px solid #c0c0c0;border-bottom:1px solid #c0c0c0;background:#fff;"></div>
<div style="left:570.5px;top:913px;width:58.5px;height:13px;overflow:hidden;"><div style="left:0px;top:1.30px;font-size:10.3px;line-height:13px;color:#000;white-space:nowrap;transform:scaleX(0.865);transform-origin:0 50%;">Самара-1</div></div>
<div style="left:637px;top:764px;width:13.5px;height:197.5px;background:#f4f3ee;"></div>
<div style="left:637px;top:764px;width:13.5px;height:13.5px;box-sizing:border-box;border:1px solid #d4dcf0;background:#eef2fb;border-radius:2px;"></div>
<svg style="position:absolute;left:639.2px;top:766.8px" width="9" height="8" viewBox="0 0 9 8"><path d="M1 5.500 L4.500 2 L8 5.500" fill="none" stroke="#3a5aa8" stroke-width="1.800"/></svg>
<div style="left:637px;top:948.0px;width:13.5px;height:13.5px;box-sizing:border-box;border:1px solid #d4dcf0;background:#eef2fb;border-radius:2px;"></div>
<svg style="position:absolute;left:639.2px;top:950.8px" width="9" height="8" viewBox="0 0 9 8"><path d="M1 2 L4.500 5.500 L8 2" fill="none" stroke="#3a5aa8" stroke-width="1.800"/></svg>
<div style="left:637px;top:778px;width:13.5px;height:68px;box-sizing:border-box;border:1px solid #b4c6ee;border-radius:2px;background:linear-gradient(90deg,#e4ecfd,#c4d4f8);"></div>
<div style="left:281.5px;top:961.5px;width:355.5px;height:13.5px;background:#f4f3ee;"></div>
<div style="left:281.5px;top:961.5px;width:13.5px;height:13.5px;box-sizing:border-box;border:1px solid #d4dcf0;background:#e4ebfa;border-radius:2px;"></div>
<svg style="position:absolute;left:284.2px;top:963.8px" width="8" height="9" viewBox="0 0 8 9"><path d="M5.500 1 L2 4.500 L5.500 8" fill="none" stroke="#3a5aa8" stroke-width="1.800"/></svg>
<div style="left:623.5px;top:961.5px;width:13.5px;height:13.5px;box-sizing:border-box;border:1px solid #d4dcf0;background:#e4ebfa;border-radius:2px;"></div>
<svg style="position:absolute;left:626.2px;top:963.8px" width="8" height="9" viewBox="0 0 8 9"><path d="M2 1 L5.500 4.500 L2 8" fill="none" stroke="#3a5aa8" stroke-width="1.800"/></svg>
<div style="left:296.0px;top:961.5px;width:13px;height:13.5px;box-sizing:border-box;border:1px solid #b4c6ee;border-radius:2px;background:linear-gradient(180deg,#e4ecfd,#c4d4f8);"></div>
<div style="left:637px;top:961.5px;width:13.5px;height:13.5px;background:#ece9d8;"></div>
<div style="left:664.5px;top:750.80px;font-size:10.3px;line-height:13px;color:#000;white-space:nowrap;transform:scaleX(0.865);transform-origin:0 50%;">Станции на пути следования поезда:</div>
<div style="left:664.5px;top:763.5px;width:225.5px;height:213px;background:#fff;box-sizing:border-box;border:1px solid;border-color:#9d9a8c #fff #fff #9d9a8c;box-shadow:inset 1px 1px 0 #66645a, inset -1px -1px 0 #e4e1d0;"></div>
<div style="left:666px;top:765px;width:10px;height:15px;background:#ece9d8;box-sizing:border-box;border-right:1px solid #2a2a2a;border-bottom:1px solid #2a2a2a;box-shadow:inset 1px 1px 0 #fff;"></div>
<div style="left:676px;top:765px;width:82px;height:15px;background:#ece9d8;box-sizing:border-box;border-right:1px solid #2a2a2a;border-bottom:1px solid #2a2a2a;box-shadow:inset 1px 1px 0 #fff;"></div>
<div style="left:677.5px;top:765px;width:79.5px;height:14px;overflow:hidden;"><div style="left:0px;top:1.80px;font-size:10.3px;line-height:13px;color:#000;white-space:nowrap;transform:scaleX(0.865);transform-origin:0 50%;">Станция</div></div>
<div style="left:758px;top:765px;width:55px;height:15px;background:#ece9d8;box-sizing:border-box;border-right:1px solid #2a2a2a;border-bottom:1px solid #2a2a2a;box-shadow:inset 1px 1px 0 #fff;"></div>
<div style="left:759.5px;top:765px;width:52.5px;height:14px;overflow:hidden;"><div style="left:0px;top:1.80px;font-size:10.3px;line-height:13px;color:#000;white-space:nowrap;transform:scaleX(0.865);transform-origin:0 50%;">Время приб</div></div>
<div style="left:813px;top:765px;width:56px;height:15px;background:#ece9d8;box-sizing:border-box;border-right:1px solid #2a2a2a;border-bottom:1px solid #2a2a2a;box-shadow:inset 1px 1px 0 #fff;"></div>
<div style="left:814.5px;top:765px;width:53.5px;height:14px;overflow:hidden;"><div style="left:0px;top:1.80px;font-size:10.3px;line-height:13px;color:#000;white-space:nowrap;transform:scaleX(0.865);transform-origin:0 50%;">Время отбы</div></div>
<div style="left:666px;top:780px;width:10px;height:15px;background:#ece9d8;box-sizing:border-box;border-right:1px solid #2a2a2a;border-bottom:1px solid #2a2a2a;box-shadow:inset 1px 1px 0 #fff;"></div>
<svg style="position:absolute;left:667.5px;top:782.0px" width="6" height="10" viewBox="0 0 6 10"><path d="M0 0 V10 L6 5 Z" fill="#000"/></svg>
<div style="left:676px;top:780px;width:82px;height:15px;box-sizing:border-box;border-right:1px solid #c0c0c0;border-bottom:1px solid #c0c0c0;background:#fff;"></div>
<div style="left:677.5px;top:780px;width:79.5px;height:14px;overflow:hidden;"><div style="left:0px;top:1.80px;font-size:10.3px;line-height:13px;color:#000;white-space:nowrap;transform:scaleX(0.865);transform-origin:0 50%;">Симферополь</div></div>
<div style="left:758px;top:780px;width:55px;height:15px;box-sizing:border-box;border-right:1px solid #c0c0c0;border-bottom:1px solid #c0c0c0;background:#fff;"></div>
<div style="left:759.5px;top:780px;width:52.5px;height:14px;overflow:hidden;"><div style="left:0px;top:1.80px;font-size:10.3px;line-height:13px;color:#000;white-space:nowrap;transform:scaleX(0.865);transform-origin:0 50%;">00:00</div></div>
<div style="left:813px;top:780px;width:56px;height:15px;box-sizing:border-box;border-right:1px solid #c0c0c0;border-bottom:1px solid #c0c0c0;background:#fff;"></div>
<div style="left:814.5px;top:780px;width:53.5px;height:14px;overflow:hidden;"><div style="left:0px;top:1.80px;font-size:10.3px;line-height:13px;color:#000;white-space:nowrap;transform:scaleX(0.865);transform-origin:0 50%;">16:02</div></div>
<div style="left:666px;top:795px;width:10px;height:15px;background:#ece9d8;box-sizing:border-box;border-right:1px solid #2a2a2a;border-bottom:1px solid #2a2a2a;box-shadow:inset 1px 1px 0 #fff;"></div>
<div style="left:676px;top:795px;width:82px;height:15px;box-sizing:border-box;border-right:1px solid #c0c0c0;border-bottom:1px solid #c0c0c0;background:#fff;"></div>
<div style="left:677.5px;top:795px;width:79.5px;height:14px;overflow:hidden;"><div style="left:0px;top:1.80px;font-size:10.3px;line-height:13px;color:#000;white-space:nowrap;transform:scaleX(0.865);transform-origin:0 50%;">Джанкой</div></div>
<div style="left:758px;top:795px;width:55px;height:15px;box-sizing:border-box;border-right:1px solid #c0c0c0;border-bottom:1px solid #c0c0c0;background:#fff;"></div>
<div style="left:759.5px;top:795px;width:52.5px;height:14px;overflow:hidden;"><div style="left:0px;top:1.80px;font-size:10.3px;line-height:13px;color:#000;white-space:nowrap;transform:scaleX(0.865);transform-origin:0 50%;">17:33</div></div>
<div style="left:813px;top:795px;width:56px;height:15px;box-sizing:border-box;border-right:1px solid #c0c0c0;border-bottom:1px solid #c0c0c0;background:#fff;"></div>
<div style="left:814.5px;top:795px;width:53.5px;height:14px;overflow:hidden;"><div style="left:0px;top:1.80px;font-size:10.3px;line-height:13px;color:#000;white-space:nowrap;transform:scaleX(0.865);transform-origin:0 50%;">17:38</div></div>
<div style="left:666px;top:810px;width:10px;height:15px;background:#ece9d8;box-sizing:border-box;border-right:1px solid #2a2a2a;border-bottom:1px solid #2a2a2a;box-shadow:inset 1px 1px 0 #fff;"></div>
<div style="left:676px;top:810px;width:82px;height:15px;box-sizing:border-box;border-right:1px solid #c0c0c0;border-bottom:1px solid #c0c0c0;background:#fff;"></div>
<div style="left:677.5px;top:810px;width:79.5px;height:14px;overflow:hidden;"><div style="left:0px;top:1.80px;font-size:10.3px;line-height:13px;color:#000;white-space:nowrap;transform:scaleX(0.865);transform-origin:0 50%;">Мелитополь</div></div>
<div style="left:758px;top:810px;width:55px;height:15px;box-sizing:border-box;border-right:1px solid #c0c0c0;border-bottom:1px solid #c0c0c0;background:#fff;"></div>
<div style="left:759.5px;top:810px;width:52.5px;height:14px;overflow:hidden;"><div style="left:0px;top:1.80px;font-size:10.3px;line-height:13px;color:#000;white-space:nowrap;transform:scaleX(0.865);transform-origin:0 50%;">18:10</div></div>
<div style="left:813px;top:810px;width:56px;height:15px;box-sizing:border-box;border-right:1px solid #c0c0c0;border-bottom:1px solid #c0c0c0;background:#fff;"></div>
<div style="left:814.5px;top:810px;width:53.5px;height:14px;overflow:hidden;"><div style="left:0px;top:1.80px;font-size:10.3px;line-height:13px;color:#000;white-space:nowrap;transform:scaleX(0.865);transform-origin:0 50%;">18:20</div></div>
<div style="left:666px;top:825px;width:10px;height:14px;background:#ece9d8;box-sizing:border-box;border-right:1px solid #2a2a2a;border-bottom:1px solid #2a2a2a;box-shadow:inset 1px 1px 0 #fff;"></div>
<div style="left:676px;top:825px;width:82px;height:14px;box-sizing:border-box;border-right:1px solid #c0c0c0;border-bottom:1px solid #c0c0c0;background:#fff;"></div>
<div style="left:677.5px;top:825px;width:79.5px;height:13px;overflow:hidden;"><div style="left:0px;top:1.30px;font-size:10.3px;line-height:13px;color:#000;white-space:nowrap;transform:scaleX(0.865);transform-origin:0 50%;">Лисичанск</div></div>
<div style="left:758px;top:825px;width:55px;height:14px;box-sizing:border-box;border-right:1px solid #c0c0c0;border-bottom:1px solid #c0c0c0;background:#fff;"></div>
<div style="left:759.5px;top:825px;width:52.5px;height:13px;overflow:hidden;"><div style="left:0px;top:1.30px;font-size:10.3px;line-height:13px;color:#000;white-space:nowrap;transform:scaleX(0.865);transform-origin:0 50%;">18:50</div></div>
<div style="left:813px;top:825px;width:56px;height:14px;box-sizing:border-box;border-right:1px solid #c0c0c0;border-bottom:1px solid #c0c0c0;background:#fff;"></div>
<div style="left:814.5px;top:825px;width:53.5px;height:13px;overflow:hidden;"><div style="left:0px;top:1.30px;font-size:10.3px;line-height:13px;color:#000;white-space:nowrap;transform:scaleX(0.865);transform-origin:0 50%;">19:20</div></div>
<div style="left:666px;top:839px;width:10px;height:15px;background:#ece9d8;box-sizing:border-box;border-right:1px solid #2a2a2a;border-bottom:1px solid #2a2a2a;box-shadow:inset 1px 1px 0 #fff;"></div>
<div style="left:676px;top:839px;width:82px;height:15px;box-sizing:border-box;border-right:1px solid #c0c0c0;border-bottom:1px solid #c0c0c0;background:#fff;"></div>
<div style="left:677.5px;top:839px;width:79.5px;height:14px;overflow:hidden;"><div style="left:0px;top:1.80px;font-size:10.3px;line-height:13px;color:#000;white-space:nowrap;transform:scaleX(0.865);transform-origin:0 50%;">Валуйки</div></div>
<div style="left:758px;top:839px;width:55px;height:15px;box-sizing:border-box;border-right:1px solid #c0c0c0;border-bottom:1px solid #c0c0c0;background:#fff;"></div>
<div style="left:759.5px;top:839px;width:52.5px;height:14px;overflow:hidden;"><div style="left:0px;top:1.80px;font-size:10.3px;line-height:13px;color:#000;white-space:nowrap;transform:scaleX(0.865);transform-origin:0 50%;">22:30</div></div>
<div style="left:813px;top:839px;width:56px;height:15px;box-sizing:border-box;border-right:1px solid #c0c0c0;border-bottom:1px solid #c0c0c0;background:#fff;"></div>
<div style="left:814.5px;top:839px;width:53.5px;height:14px;overflow:hidden;"><div style="left:0px;top:1.80px;font-size:10.3px;line-height:13px;color:#000;white-space:nowrap;transform:scaleX(0.865);transform-origin:0 50%;">22:40</div></div>
<div style="left:666px;top:854px;width:10px;height:15px;background:#ece9d8;box-sizing:border-box;border-right:1px solid #2a2a2a;border-bottom:1px solid #2a2a2a;box-shadow:inset 1px 1px 0 #fff;"></div>
<div style="left:676px;top:854px;width:82px;height:15px;box-sizing:border-box;border-right:1px solid #c0c0c0;border-bottom:1px solid #c0c0c0;background:#fff;"></div>
<div style="left:677.5px;top:854px;width:79.5px;height:14px;overflow:hidden;"><div style="left:0px;top:1.80px;font-size:10.3px;line-height:13px;color:#000;white-space:nowrap;transform:scaleX(0.865);transform-origin:0 50%;">Острогожск</div></div>
<div style="left:758px;top:854px;width:55px;height:15px;box-sizing:border-box;border-right:1px solid #c0c0c0;border-bottom:1px solid #c0c0c0;background:#fff;"></div>
<div style="left:759.5px;top:854px;width:52.5px;height:14px;overflow:hidden;"><div style="left:0px;top:1.80px;font-size:10.3px;line-height:13px;color:#000;white-space:nowrap;transform:scaleX(0.865);transform-origin:0 50%;">02:30</div></div>
<div style="left:813px;top:854px;width:56px;height:15px;box-sizing:border-box;border-right:1px solid #c0c0c0;border-bottom:1px solid #c0c0c0;background:#fff;"></div>
<div style="left:814.5px;top:854px;width:53.5px;height:14px;overflow:hidden;"><div style="left:0px;top:1.80px;font-size:10.3px;line-height:13px;color:#000;white-space:nowrap;transform:scaleX(0.865);transform-origin:0 50%;">02:35</div></div>
<div style="left:666px;top:869px;width:10px;height:15px;background:#ece9d8;box-sizing:border-box;border-right:1px solid #2a2a2a;border-bottom:1px solid #2a2a2a;box-shadow:inset 1px 1px 0 #fff;"></div>
<div style="left:676px;top:869px;width:82px;height:15px;box-sizing:border-box;border-right:1px solid #c0c0c0;border-bottom:1px solid #c0c0c0;background:#fff;"></div>
<div style="left:677.5px;top:869px;width:79.5px;height:14px;overflow:hidden;"><div style="left:0px;top:1.80px;font-size:10.3px;line-height:13px;color:#000;white-space:nowrap;transform:scaleX(0.865);transform-origin:0 50%;">Поворино</div></div>
<div style="left:758px;top:869px;width:55px;height:15px;box-sizing:border-box;border-right:1px solid #c0c0c0;border-bottom:1px solid #c0c0c0;background:#fff;"></div>
<div style="left:759.5px;top:869px;width:52.5px;height:14px;overflow:hidden;"><div style="left:0px;top:1.80px;font-size:10.3px;line-height:13px;color:#000;white-space:nowrap;transform:scaleX(0.865);transform-origin:0 50%;">08:20</div></div>
<div style="left:813px;top:869px;width:56px;height:15px;box-sizing:border-box;border-right:1px solid #c0c0c0;border-bottom:1px solid #c0c0c0;background:#fff;"></div>
<div style="left:814.5px;top:869px;width:53.5px;height:14px;overflow:hidden;"><div style="left:0px;top:1.80px;font-size:10.3px;line-height:13px;color:#000;white-space:nowrap;transform:scaleX(0.865);transform-origin:0 50%;">08:23</div></div>
<div style="left:666px;top:884px;width:10px;height:15px;background:#ece9d8;box-sizing:border-box;border-right:1px solid #2a2a2a;border-bottom:1px solid #2a2a2a;box-shadow:inset 1px 1px 0 #fff;"></div>
<div style="left:676px;top:884px;width:82px;height:15px;box-sizing:border-box;border-right:1px solid #c0c0c0;border-bottom:1px solid #c0c0c0;background:#fff;"></div>
<div style="left:677.5px;top:884px;width:79.5px;height:14px;overflow:hidden;"><div style="left:0px;top:1.80px;font-size:10.3px;line-height:13px;color:#000;white-space:nowrap;transform:scaleX(0.865);transform-origin:0 50%;">Балашов</div></div>
<div style="left:758px;top:884px;width:55px;height:15px;box-sizing:border-box;border-right:1px solid #c0c0c0;border-bottom:1px solid #c0c0c0;background:#fff;"></div>
<div style="left:759.5px;top:884px;width:52.5px;height:14px;overflow:hidden;"><div style="left:0px;top:1.80px;font-size:10.3px;line-height:13px;color:#000;white-space:nowrap;transform:scaleX(0.865);transform-origin:0 50%;">12:55</div></div>
<div style="left:813px;top:884px;width:56px;height:15px;box-sizing:border-box;border-right:1px solid #c0c0c0;border-bottom:1px solid #c0c0c0;background:#fff;"></div>
<div style="left:814.5px;top:884px;width:53.5px;height:14px;overflow:hidden;"><div style="left:0px;top:1.80px;font-size:10.3px;line-height:13px;color:#000;white-space:nowrap;transform:scaleX(0.865);transform-origin:0 50%;">13:00</div></div>
<div style="left:666px;top:899px;width:10px;height:15px;background:#ece9d8;box-sizing:border-box;border-right:1px solid #2a2a2a;border-bottom:1px solid #2a2a2a;box-shadow:inset 1px 1px 0 #fff;"></div>
<div style="left:676px;top:899px;width:82px;height:15px;box-sizing:border-box;border-right:1px solid #c0c0c0;border-bottom:1px solid #c0c0c0;background:#fff;"></div>
<div style="left:677.5px;top:899px;width:79.5px;height:14px;overflow:hidden;"><div style="left:0px;top:1.80px;font-size:10.3px;line-height:13px;color:#000;white-space:nowrap;transform:scaleX(0.865);transform-origin:0 50%;">Ртищево</div></div>
<div style="left:758px;top:899px;width:55px;height:15px;box-sizing:border-box;border-right:1px solid #c0c0c0;border-bottom:1px solid #c0c0c0;background:#fff;"></div>
<div style="left:759.5px;top:899px;width:52.5px;height:14px;overflow:hidden;"><div style="left:0px;top:1.80px;font-size:10.3px;line-height:13px;color:#000;white-space:nowrap;transform:scaleX(0.865);transform-origin:0 50%;">18:15</div></div>
<div style="left:813px;top:899px;width:56px;height:15px;box-sizing:border-box;border-right:1px solid #c0c0c0;border-bottom:1px solid #c0c0c0;background:#fff;"></div>
<div style="left:814.5px;top:899px;width:53.5px;height:14px;overflow:hidden;"><div style="left:0px;top:1.80px;font-size:10.3px;line-height:13px;color:#000;white-space:nowrap;transform:scaleX(0.865);transform-origin:0 50%;">18:20</div></div>
<div style="left:666px;top:914px;width:10px;height:15px;background:#ece9d8;box-sizing:border-box;border-right:1px solid #2a2a2a;border-bottom:1px solid #2a2a2a;box-shadow:inset 1px 1px 0 #fff;"></div>
<div style="left:676px;top:914px;width:82px;height:15px;box-sizing:border-box;border-right:1px solid #c0c0c0;border-bottom:1px solid #c0c0c0;background:#fff;"></div>
<div style="left:677.5px;top:914px;width:79.5px;height:14px;overflow:hidden;"><div style="left:0px;top:1.80px;font-size:10.3px;line-height:13px;color:#000;white-space:nowrap;transform:scaleX(0.865);transform-origin:0 50%;">Пенза-1</div></div>
<div style="left:758px;top:914px;width:55px;height:15px;box-sizing:border-box;border-right:1px solid #c0c0c0;border-bottom:1px solid #c0c0c0;background:#fff;"></div>
<div style="left:759.5px;top:914px;width:52.5px;height:14px;overflow:hidden;"><div style="left:0px;top:1.80px;font-size:10.3px;line-height:13px;color:#000;white-space:nowrap;transform:scaleX(0.865);transform-origin:0 50%;">03:45</div></div>
<div style="left:813px;top:914px;width:56px;height:15px;box-sizing:border-box;border-right:1px solid #c0c0c0;border-bottom:1px solid #c0c0c0;background:#fff;"></div>
<div style="left:814.5px;top:914px;width:53.5px;height:14px;overflow:hidden;"><div style="left:0px;top:1.80px;font-size:10.3px;line-height:13px;color:#000;white-space:nowrap;transform:scaleX(0.865);transform-origin:0 50%;">04:15</div></div>
<div style="left:666px;top:929px;width:10px;height:15px;background:#ece9d8;box-sizing:border-box;border-right:1px solid #2a2a2a;border-bottom:1px solid #2a2a2a;box-shadow:inset 1px 1px 0 #fff;"></div>
<div style="left:676px;top:929px;width:82px;height:15px;box-sizing:border-box;border-right:1px solid #c0c0c0;border-bottom:1px solid #c0c0c0;background:#fff;"></div>
<div style="left:677.5px;top:929px;width:79.5px;height:14px;overflow:hidden;"><div style="left:0px;top:1.80px;font-size:10.3px;line-height:13px;color:#000;white-space:nowrap;transform:scaleX(0.865);transform-origin:0 50%;">Сызрань</div></div>
<div style="left:758px;top:929px;width:55px;height:15px;box-sizing:border-box;border-right:1px solid #c0c0c0;border-bottom:1px solid #c0c0c0;background:#fff;"></div>
<div style="left:759.5px;top:929px;width:52.5px;height:14px;overflow:hidden;"><div style="left:0px;top:1.80px;font-size:10.3px;line-height:13px;color:#000;white-space:nowrap;transform:scaleX(0.865);transform-origin:0 50%;">10:30</div></div>
<div style="left:813px;top:929px;width:56px;height:15px;box-sizing:border-box;border-right:1px solid #c0c0c0;border-bottom:1px solid #c0c0c0;background:#fff;"></div>
<div style="left:814.5px;top:929px;width:53.5px;height:14px;overflow:hidden;"><div style="left:0px;top:1.80px;font-size:10.3px;line-height:13px;color:#000;white-space:nowrap;transform:scaleX(0.865);transform-origin:0 50%;">10:40</div></div>
<div style="left:666px;top:944px;width:10px;height:14px;background:#ece9d8;box-sizing:border-box;border-right:1px solid #2a2a2a;border-bottom:1px solid #2a2a2a;box-shadow:inset 1px 1px 0 #fff;"></div>
<div style="left:676px;top:944px;width:82px;height:14px;box-sizing:border-box;border-right:1px solid #c0c0c0;border-bottom:1px solid #c0c0c0;background:#fff;"></div>
<div style="left:677.5px;top:944px;width:79.5px;height:13px;overflow:hidden;"><div style="left:0px;top:1.30px;font-size:10.3px;line-height:13px;color:#000;white-space:nowrap;transform:scaleX(0.865);transform-origin:0 50%;">Самара-1</div></div>
<div style="left:758px;top:944px;width:55px;height:14px;box-sizing:border-box;border-right:1px solid #c0c0c0;border-bottom:1px solid #c0c0c0;background:#fff;"></div>
<div style="left:759.5px;top:944px;width:52.5px;height:13px;overflow:hidden;"><div style="left:0px;top:1.30px;font-size:10.3px;line-height:13px;color:#000;white-space:nowrap;transform:scaleX(0.865);transform-origin:0 50%;">13:15</div></div>
<div style="left:813px;top:944px;width:56px;height:14px;box-sizing:border-box;border-right:1px solid #c0c0c0;border-bottom:1px solid #c0c0c0;background:#fff;"></div>
<div style="left:814.5px;top:944px;width:53.5px;height:13px;overflow:hidden;"><div style="left:0px;top:1.30px;font-size:10.3px;line-height:13px;color:#000;white-space:nowrap;transform:scaleX(0.865);transform-origin:0 50%;">13:40</div></div>
<div style="left:875.5px;top:765px;width:13.5px;height:196.5px;background:#f4f3ee;"></div>
<div style="left:875.5px;top:765px;width:13.5px;height:13.5px;box-sizing:border-box;border:1px solid #d4dcf0;background:#eef2fb;border-radius:2px;"></div>
<svg style="position:absolute;left:877.8px;top:767.8px" width="9" height="8" viewBox="0 0 9 8"><path d="M1 5.500 L4.500 2 L8 5.500" fill="none" stroke="#3a5aa8" stroke-width="1.800"/></svg>
<div style="left:875.5px;top:948.0px;width:13.5px;height:13.5px;box-sizing:border-box;border:1px solid #d4dcf0;background:#eef2fb;border-radius:2px;"></div>
<svg style="position:absolute;left:877.8px;top:950.8px" width="9" height="8" viewBox="0 0 9 8"><path d="M1 2 L4.500 5.500 L8 2" fill="none" stroke="#3a5aa8" stroke-width="1.800"/></svg>
<div style="left:875.5px;top:779px;width:13.5px;height:78px;box-sizing:border-box;border:1px solid #b4c6ee;border-radius:2px;background:linear-gradient(90deg,#e4ecfd,#c4d4f8);"></div>
<div style="left:666px;top:961.5px;width:209.5px;height:13.5px;background:#f4f3ee;"></div>
<div style="left:666px;top:961.5px;width:13.5px;height:13.5px;box-sizing:border-box;border:1px solid #d4dcf0;background:#e4ebfa;border-radius:2px;"></div>
<svg style="position:absolute;left:668.8px;top:963.8px" width="8" height="9" viewBox="0 0 8 9"><path d="M5.500 1 L2 4.500 L5.500 8" fill="none" stroke="#3a5aa8" stroke-width="1.800"/></svg>
<div style="left:862.0px;top:961.5px;width:13.5px;height:13.5px;box-sizing:border-box;border:1px solid #d4dcf0;background:#e4ebfa;border-radius:2px;"></div>
<svg style="position:absolute;left:864.8px;top:963.8px" width="8" height="9" viewBox="0 0 8 9"><path d="M2 1 L5.500 4.500 L2 8" fill="none" stroke="#3a5aa8" stroke-width="1.800"/></svg>
<div style="left:680.5px;top:961.5px;width:13px;height:13.5px;box-sizing:border-box;border:1px solid #b4c6ee;border-radius:2px;background:linear-gradient(180deg,#e4ecfd,#c4d4f8);"></div>
<div style="left:875.5px;top:961.5px;width:13.5px;height:13.5px;background:#ece9d8;"></div>
<div style="left:865.5px;top:989.5px;width:26.5px;height:27px;background:#ece9d8;box-sizing:border-box;border:1px solid;border-color:#fff #716f64 #716f64 #fff;box-shadow:inset -1px -1px 0 #aca899, inset 1px 1px 0 #f6f4ea;"></div>
<svg style="position:absolute;left:871px;top:994px" width="16.2" height="17.1" viewBox="0 0 18 19"><rect x="6" y="0.500" width="4" height="2" fill="#30c030" stroke="#1a5a1a" stroke-width=".6"/><path d="M4.500 3.500 H11.500 V16 H4.500 Z" fill="#e020e0"/><path d="M6.500 5 H9.500 V16 H6.500 Z" fill="#80e0e0"/><path d="M4.500 16.500 V3.500 H11.500 V16.500" fill="none" stroke="#101060" stroke-width="1.300"/><path d="M1 17 H4.500 M11.500 17 H16.500" stroke="#101060" stroke-width="1.500"/></svg>
<div style="left:1172px;top:140px;width:447.5px;height:340px;background:#30509f;box-shadow:inset 0 0 0 1px #0b1f70;"></div>
<div style="left:1173px;top:140px;width:445.5px;height:20px;background:linear-gradient(180deg,#2c4596 0%,#1a3184 30%,#10246f 100%);"></div>
<div style="left:1175px;top:160px;width:441.5px;height:317px;background:#ece9d8;box-sizing:border-box;border:1px solid #fdf9e2;"></div>
<div style="left:1172px;top:145px;width:447.5px;height:15px;overflow:hidden;"><div style="left:24px;top:-5.50px;font-size:12px;line-height:16px;color:#fff;white-space:nowrap;font-weight:bold;letter-spacing:.9px;">Наличие билетов</div></div>
<div style="left:1178px;top:145px;width:16px;height:9px;overflow:hidden;"><svg style="position:absolute;left:0;top:-6.500px" width="15" height="15" viewBox="0 0 14 14"><circle cx="6.500" cy="6.500" r="5" fill="#10908c" stroke="#0a2a2a" stroke-width="1.300" stroke-dasharray="2.200 .9"/><path d="M0.500 11 L13.500 1.500" stroke="#e8e020" stroke-width="1.300"/><circle cx="4" cy="8.500" r="1.400" fill="#f0f010"/><circle cx="9.500" cy="5" r="1.300" fill="#f0f010"/><rect x="5.600" y="3" width="2.600" height="10" fill="#e8c860" stroke="#8a2a10" stroke-width=".9"/><path d="M4.500 13.300 H9.500" stroke="#200" stroke-width="1.400"/><circle cx="7.500" cy="13.200" r="1" fill="#e01010"/></svg></div>
<div style="left:1529.5px;top:146px;width:80px;height:8px;background:rgba(60,90,180,.35);border-radius:0 0 5px 5px;"></div>
<div style="left:1531.5px;top:146px;width:23px;height:6px;background:#3c58ac;border:1px solid #6a84d0;border-top:0;box-sizing:border-box;border-radius:0 0 1.500px 1.500px;"></div>
<div style="left:1538.5px;top:147px;width:9px;height:2.5px;background:#fff;border-radius:1px;"></div>
<div style="left:1555.7px;top:146px;width:22.8px;height:6px;background:#3c58ac;border:1px solid #6a84d0;border-top:0;box-sizing:border-box;border-radius:0 0 1.500px 1.500px;"></div>
<div style="left:1562.5px;top:146px;width:8px;height:2.5px;border:1px solid #5a74c0;border-top:0;box-sizing:border-box;border-radius:0 0 2px 2px;"></div>
<div style="left:1579.2px;top:146px;width:27.8px;height:6px;background:#a82018;border:1px solid #e04838;border-top:0;box-sizing:border-box;border-radius:0 0 1.500px 1.500px;"></div>
<svg style="position:absolute;left:1589.0px;top:146px;" width="8" height="4" viewBox="0 0 8 4"><path d="M0 3.500 L4 0 L8 3.500" stroke="#fff" stroke-width="1.700" fill="none"/></svg>
<div style="left:1191.5px;top:176.50px;font-size:11.5px;line-height:15px;color:#000;white-space:nowrap;transform:scaleX(0.92);transform-origin:0 50%;">№ поезда:</div>
<div style="left:1247.5px;top:178px;width:95.5px;height:20px;background:#fff;box-sizing:border-box;border:1px solid;border-color:#9d9a8c #fff #fff #9d9a8c;box-shadow:inset 1px 1px 0 #66645a, inset -1px -1px 0 #e4e1d0;"></div>
<div style="left:1325.0px;top:180px;width:16px;height:16px;background:#ece9d8;box-sizing:border-box;border:1px solid;border-color:#fff #5c5a50 #5c5a50 #fff;box-shadow:inset -1px -1px 0 #aca899;"></div>
<svg style="position:absolute;left:1329.5px;top:186.5px" width="7" height="4" viewBox="0 0 7 4"><path d="M0 0 H7 L3.500 4 Z" fill="#000"/></svg>
<div style="left:1251.5px;top:181.00px;font-size:11.5px;line-height:15px;color:#000;white-space:nowrap;transform:scaleX(0.92);transform-origin:0 50%;">210 ПГ</div>
<div style="left:1351px;top:176.50px;font-size:11.5px;line-height:15px;color:#000;white-space:nowrap;transform:scaleX(0.92);transform-origin:0 50%;">Название поезда:</div>
<div style="left:1447px;top:178px;width:152.5px;height:20px;background:#fff;box-sizing:border-box;border:1px solid;border-color:#9d9a8c #fff #fff #9d9a8c;box-shadow:inset 1px 1px 0 #66645a, inset -1px -1px 0 #e4e1d0;"></div>
<div style="left:1581.5px;top:180px;width:16px;height:16px;background:#ece9d8;box-sizing:border-box;border:1px solid;border-color:#fff #5c5a50 #5c5a50 #fff;box-shadow:inset -1px -1px 0 #aca899;"></div>
<svg style="position:absolute;left:1586.0px;top:186.5px" width="7" height="4" viewBox="0 0 7 4"><path d="M0 0 H7 L3.500 4 Z" fill="#000"/></svg>
<div style="left:1451px;top:181.00px;font-size:11.5px;line-height:15px;color:#000;white-space:nowrap;transform:scaleX(0.92);transform-origin:0 50%;">Симферополь-Уфа</div>
<div style="left:1191.5px;top:208.50px;font-size:11.5px;line-height:15px;color:#000;white-space:nowrap;transform:scaleX(0.92);transform-origin:0 50%;">Станция отправления:</div>
<div style="left:1311.5px;top:209px;width:151.5px;height:20.5px;background:#fff;box-sizing:border-box;border:1px solid;border-color:#9d9a8c #fff #fff #9d9a8c;box-shadow:inset 1px 1px 0 #66645a, inset -1px -1px 0 #e4e1d0;"></div>
<div style="left:1445.0px;top:211px;width:16px;height:16.5px;background:#ece9d8;box-sizing:border-box;border:1px solid;border-color:#fff #5c5a50 #5c5a50 #fff;box-shadow:inset -1px -1px 0 #aca899;"></div>
<svg style="position:absolute;left:1449.5px;top:217.8px" width="7" height="4" viewBox="0 0 7 4"><path d="M0 0 H7 L3.500 4 Z" fill="#000"/></svg>
<div style="left:1314.5px;top:212px;width:129.5px;height:14.5px;background:#d8d8d8;box-sizing:border-box;border:1px dotted #a05010;"></div>
<div style="left:1315.5px;top:212.25px;font-size:11.5px;line-height:15px;color:#1a5adc;white-space:nowrap;transform:scaleX(0.92);transform-origin:0 50%;">Симферополь</div>
<div style="left:1191.5px;top:240.50px;font-size:11.5px;line-height:15px;color:#000;white-space:nowrap;transform:scaleX(0.92);transform-origin:0 50%;">Дата отправления:</div>
<div style="left:1311.5px;top:241.5px;width:151.5px;height:20px;background:#fff;box-sizing:border-box;border:1px solid;border-color:#9d9a8c #fff #fff #9d9a8c;box-shadow:inset 1px 1px 0 #66645a, inset -1px -1px 0 #e4e1d0;"></div>
<div style="left:1445.0px;top:243.5px;width:16px;height:16px;background:#ece9d8;box-sizing:border-box;border:1px solid;border-color:#fff #5c5a50 #5c5a50 #fff;box-shadow:inset -1px -1px 0 #aca899;"></div>
<svg style="position:absolute;left:1449.5px;top:250.0px" width="7" height="4" viewBox="0 0 7 4"><path d="M0 0 H7 L3.500 4 Z" fill="#000"/></svg>
<div style="left:1315.5px;top:244.50px;font-size:11.5px;line-height:15px;color:#000;white-space:nowrap;transform:scaleX(0.92);transform-origin:0 50%;">25.05.2009</div>
<div style="left:1191.5px;top:273px;width:272.5px;height:152.5px;background:#fff;box-sizing:border-box;border:1px solid;border-color:#9d9a8c #fff #fff #9d9a8c;box-shadow:inset 1px 1px 0 #66645a, inset -1px -1px 0 #e4e1d0;"></div>
<div style="left:1193px;top:274.5px;width:64.5px;height:24.5px;background:#ece9d8;box-sizing:border-box;border-right:1px solid #000;border-bottom:1px solid #000;box-shadow:inset 1px 1px 0 #fff;"></div>
<div style="left:1257.5px;top:274.5px;width:65.0px;height:24.5px;background:#ece9d8;box-sizing:border-box;border-right:1px solid #000;border-bottom:1px solid #000;box-shadow:inset 1px 1px 0 #fff;"><div style="left:3px;top:2.00px;font-size:11.5px;line-height:15px;color:#000;white-space:nowrap;transform:scaleX(0.92);transform-origin:0 50%;">низ</div></div>
<div style="left:1322.5px;top:274.5px;width:65.0px;height:24.5px;background:#ece9d8;box-sizing:border-box;border-right:1px solid #000;border-bottom:1px solid #000;box-shadow:inset 1px 1px 0 #fff;"><div style="left:3px;top:2.00px;font-size:11.5px;line-height:15px;color:#000;white-space:nowrap;transform:scaleX(0.92);transform-origin:0 50%;">верх</div></div>
<div style="left:1387.5px;top:274.5px;width:65.0px;height:24.5px;background:#ece9d8;box-sizing:border-box;border-right:1px solid #000;border-bottom:1px solid #000;box-shadow:inset 1px 1px 0 #fff;"><div style="left:3px;top:2.00px;font-size:11.5px;line-height:15px;color:#000;white-space:nowrap;transform:scaleX(0.92);transform-origin:0 50%;">бок</div></div>
<div style="left:1193px;top:299px;width:64.5px;height:25.5px;background:#ece9d8;box-sizing:border-box;border-right:1px solid #000;border-bottom:1px solid #000;box-shadow:inset 1px 1px 0 #fff;"><div style="left:3px;top:2.00px;font-size:11.5px;line-height:15px;color:#000;white-space:nowrap;transform:scaleX(0.92);transform-origin:0 50%;">КУП</div></div>
<div style="left:1257.5px;top:299px;width:65.0px;height:25.5px;box-sizing:border-box;background:#dcdcdc;border-right:1px solid #c0c0c0;border-bottom:1px solid #c0c0c0;"><div style="left:3px;top:2.00px;font-size:11.5px;line-height:15px;color:#1a5adc;white-space:nowrap;transform:scaleX(0.92);transform-origin:0 50%;">60</div></div>
<div style="left:1322.5px;top:299px;width:65.0px;height:25.5px;box-sizing:border-box;background:#fff;border-right:1px solid #c0c0c0;border-bottom:1px solid #c0c0c0;"><div style="left:3px;top:2.00px;font-size:11.5px;line-height:15px;color:#000;white-space:nowrap;transform:scaleX(0.92);transform-origin:0 50%;">96</div></div>
<div style="left:1387.5px;top:299px;width:65.0px;height:25.5px;box-sizing:border-box;background:#fff;border-right:1px solid #c0c0c0;border-bottom:1px solid #c0c0c0;"><div style="left:3px;top:2.00px;font-size:11.5px;line-height:15px;color:#000;white-space:nowrap;transform:scaleX(0.92);transform-origin:0 50%;">24</div></div>
<div style="left:1193px;top:324.5px;width:64.5px;height:25.0px;background:#ece9d8;box-sizing:border-box;border-right:1px solid #000;border-bottom:1px solid #000;box-shadow:inset 1px 1px 0 #fff;"><div style="left:3px;top:2.00px;font-size:11.5px;line-height:15px;color:#000;white-space:nowrap;transform:scaleX(0.92);transform-origin:0 50%;">ПЛ</div></div>
<div style="left:1257.5px;top:324.5px;width:65.0px;height:25.0px;box-sizing:border-box;background:#fff;border-right:1px solid #c0c0c0;border-bottom:1px solid #c0c0c0;"><div style="left:3px;top:2.00px;font-size:11.5px;line-height:15px;color:#000;white-space:nowrap;transform:scaleX(0.92);transform-origin:0 50%;">97</div></div>
<div style="left:1322.5px;top:324.5px;width:65.0px;height:25.0px;box-sizing:border-box;background:#fff;border-right:1px solid #c0c0c0;border-bottom:1px solid #c0c0c0;"><div style="left:3px;top:2.00px;font-size:11.5px;line-height:15px;color:#000;white-space:nowrap;transform:scaleX(0.92);transform-origin:0 50%;">154</div></div>
<div style="left:1387.5px;top:324.5px;width:65.0px;height:25.0px;box-sizing:border-box;background:#fff;border-right:1px solid #c0c0c0;border-bottom:1px solid #c0c0c0;"><div style="left:3px;top:2.00px;font-size:11.5px;line-height:15px;color:#000;white-space:nowrap;transform:scaleX(0.92);transform-origin:0 50%;">40</div></div>
<div style="left:1193px;top:349.5px;width:64.5px;height:25.0px;background:#ece9d8;box-sizing:border-box;border-right:1px solid #000;border-bottom:1px solid #000;box-shadow:inset 1px 1px 0 #fff;"><div style="left:3px;top:2.00px;font-size:11.5px;line-height:15px;color:#000;white-space:nowrap;transform:scaleX(0.92);transform-origin:0 50%;">СВ</div></div>
<div style="left:1257.5px;top:349.5px;width:65.0px;height:25.0px;box-sizing:border-box;background:#fff;border-right:1px solid #c0c0c0;border-bottom:1px solid #c0c0c0;"></div>
<div style="left:1322.5px;top:349.5px;width:65.0px;height:25.0px;box-sizing:border-box;background:#fff;border-right:1px solid #c0c0c0;border-bottom:1px solid #c0c0c0;"></div>
<div style="left:1387.5px;top:349.5px;width:65.0px;height:25.0px;box-sizing:border-box;background:#fff;border-right:1px solid #c0c0c0;border-bottom:1px solid #c0c0c0;"></div>
<div style="left:1193px;top:374.5px;width:64.5px;height:25.0px;background:#ece9d8;box-sizing:border-box;border-right:1px solid #000;border-bottom:1px solid #000;box-shadow:inset 1px 1px 0 #fff;"></div>
<div style="left:1257.5px;top:374.5px;width:65.0px;height:25.0px;box-sizing:border-box;background:#fff;border-right:1px solid #c0c0c0;border-bottom:1px solid #c0c0c0;"></div>
<div style="left:1322.5px;top:374.5px;width:65.0px;height:25.0px;box-sizing:border-box;background:#fff;border-right:1px solid #c0c0c0;border-bottom:1px solid #c0c0c0;"></div>
<div style="left:1387.5px;top:374.5px;width:65.0px;height:25.0px;box-sizing:border-box;background:#fff;border-right:1px solid #c0c0c0;border-bottom:1px solid #c0c0c0;"></div>
<div style="left:1527px;top:441.5px;width:75px;height:23.5px;background:#ece9d8;box-sizing:border-box;border:1px solid;border-color:#fff #716f64 #716f64 #fff;box-shadow:inset -1px -1px 0 #aca899, inset 1px 1px 0 #f6f4ea;"></div>
<svg style="position:absolute;left:1539px;top:443.5px" width="18.0" height="19.0" viewBox="0 0 18 19"><rect x="6" y="0.500" width="4" height="2" fill="#30c030" stroke="#1a5a1a" stroke-width=".6"/><path d="M4.500 3.500 H11.500 V16 H4.500 Z" fill="#e020e0"/><path d="M6.500 5 H9.500 V16 H6.500 Z" fill="#80e0e0"/><path d="M4.500 16.500 V3.500 H11.500 V16.500" fill="none" stroke="#101060" stroke-width="1.300"/><path d="M1 17 H4.500 M11.500 17 H16.500" stroke="#101060" stroke-width="1.500"/></svg>
<div style="left:1560px;top:446.50px;font-size:11.5px;line-height:15px;color:#000;white-space:nowrap;transform:scaleX(0.92);transform-origin:0 50%;">Выход</div>
<div style="left:1075px;top:524.5px;width:642px;height:370.5px;background:#2848a0;border-radius:6px 6px 0 0;box-shadow:inset 0 0 0 1px #0b1f70;"></div>
<div style="left:1075px;top:524.5px;width:642px;height:24px;border-radius:6px 6px 0 0;background:linear-gradient(180deg,#7c9ce8 0%,#5a7ad0 12%,#3858b0 33%,#1c3488 62%,#142878 85%,#0a1a6a 100%);"></div>
<div style="left:1077.5px;top:548.5px;width:637px;height:343.5px;background:#ece9d8;box-sizing:border-box;border:1px solid #fdf9e2;"></div>
<svg style="position:absolute;left:1079px;top:529.5px" width="14.0" height="14.0" viewBox="0 0 14 14"><circle cx="6.500" cy="6.500" r="5" fill="#10908c" stroke="#0a2a2a" stroke-width="1.300" stroke-dasharray="2.200 .9"/><path d="M0.500 11 L13.500 1.500" stroke="#e8e020" stroke-width="1.300"/><circle cx="4" cy="8.500" r="1.400" fill="#f0f010"/><circle cx="9.500" cy="5" r="1.300" fill="#f0f010"/><rect x="5.600" y="3" width="2.600" height="10" fill="#e8c860" stroke="#8a2a10" stroke-width=".9"/><path d="M4.500 13.300 H9.500" stroke="#200" stroke-width="1.400"/><circle cx="7.500" cy="13.200" r="1" fill="#e01010"/></svg>
<div style="left:1095.5px;top:530.00px;font-size:11.3px;line-height:14px;color:#fff;white-space:nowrap;transform:scaleX(0.97);transform-origin:0 50%;font-weight:bold;letter-spacing:.2px;">Продажа билета</div>
<div style="left:1639.5px;top:529px;width:72px;height:14px;border-radius:4px;background:rgba(10,25,100,.35);"></div>
<div style="left:1641px;top:530.5px;width:21px;height:11.5px;box-sizing:border-box;border:1px solid;border-color:#c8dcfc #7c98dc #7c98dc #c8dcfc;border-radius:1.500px;background:linear-gradient(180deg,#9ab4f0 0%,#6484d4 45%,#4060b0 55%,#4a6ab8 100%);"></div>
<div style="left:1647.5px;top:537px;width:8px;height:2.5px;background:#fff;"></div>
<div style="left:1663px;top:530.5px;width:21px;height:11.5px;box-sizing:border-box;border:1px solid;border-color:#c8dcfc #7c98dc #7c98dc #c8dcfc;border-radius:1.500px;background:linear-gradient(180deg,#9ab4f0 0%,#6484d4 45%,#4060b0 55%,#4a6ab8 100%);"></div>
<div style="left:1669.5px;top:533px;width:7.5px;height:6px;box-sizing:border-box;border:1px solid #7e98dc;border-top:1.500px solid #7e98dc;"></div>
<div style="left:1685px;top:530.5px;width:25px;height:11.5px;box-sizing:border-box;border:1px solid;border-color:#f0a0a0 #c04040 #c04040 #f0a0a0;border-radius:1.500px;background:linear-gradient(180deg,#e87070 0%,#d84848 45%,#b02020 55%,#b82828 100%);"></div>
<svg style="position:absolute;left:1693.5px;top:532.5px;" width="8" height="8" viewBox="0 0 8 8"><path d="M1 1 L7 7 M7 1 L1 7" stroke="#fff" stroke-width="1.900"/></svg>
<div style="left:1091px;top:561.10px;font-size:10.4px;line-height:14px;color:#000;white-space:nowrap;transform:scaleX(0.865);transform-origin:0 50%;">№ поезда:</div>
<div style="left:1138.5px;top:562.5px;width:81px;height:16.5px;background:#fff;box-sizing:border-box;border:1px solid;border-color:#9d9a8c #fff #fff #9d9a8c;box-shadow:inset 1px 1px 0 #66645a, inset -1px -1px 0 #e4e1d0;"></div>
<div style="left:1204.5px;top:564.5px;width:13px;height:12.5px;background:#ece9d8;box-sizing:border-box;border:1px solid;border-color:#fff #5c5a50 #5c5a50 #fff;box-shadow:inset -1px -1px 0 #aca899;"></div>
<svg style="position:absolute;left:1207.5px;top:569.2px" width="7" height="4" viewBox="0 0 7 4"><path d="M0 0 H7 L3.500 4 Z" fill="#000"/></svg>
<div style="left:1142.5px;top:565.05px;font-size:10.4px;line-height:14px;color:#000;white-space:nowrap;transform:scaleX(0.865);transform-origin:0 50%;">210 ПГ</div>
<div style="left:1247px;top:561.10px;font-size:10.4px;line-height:14px;color:#000;white-space:nowrap;transform:scaleX(0.865);transform-origin:0 50%;">Название поезда:</div>
<div style="left:1328.5px;top:562.5px;width:127.5px;height:16.5px;background:#fff;box-sizing:border-box;border:1px solid;border-color:#9d9a8c #fff #fff #9d9a8c;box-shadow:inset 1px 1px 0 #66645a, inset -1px -1px 0 #e4e1d0;"></div>
<div style="left:1441.0px;top:564.5px;width:13px;height:12.5px;background:#ece9d8;box-sizing:border-box;border:1px solid;border-color:#fff #5c5a50 #5c5a50 #fff;box-shadow:inset -1px -1px 0 #aca899;"></div>
<svg style="position:absolute;left:1444.0px;top:569.2px" width="7" height="4" viewBox="0 0 7 4"><path d="M0 0 H7 L3.500 4 Z" fill="#000"/></svg>
<div style="left:1332.5px;top:565.05px;font-size:10.4px;line-height:14px;color:#000;white-space:nowrap;transform:scaleX(0.865);transform-origin:0 50%;">Симферополь-Уфа</div>
<div style="left:1091px;top:595.10px;font-size:10.4px;line-height:14px;color:#000;white-space:nowrap;transform:scaleX(0.865);transform-origin:0 50%;">Станция отправления:</div>
<div style="left:1192.5px;top:596px;width:128px;height:16px;background:#fff;box-sizing:border-box;border:1px solid;border-color:#9d9a8c #fff #fff #9d9a8c;box-shadow:inset 1px 1px 0 #66645a, inset -1px -1px 0 #e4e1d0;"></div>
<div style="left:1305.5px;top:598px;width:13px;height:12px;background:#ece9d8;box-sizing:border-box;border:1px solid;border-color:#fff #5c5a50 #5c5a50 #fff;box-shadow:inset -1px -1px 0 #aca899;"></div>
<svg style="position:absolute;left:1308.5px;top:602.5px" width="7" height="4" viewBox="0 0 7 4"><path d="M0 0 H7 L3.500 4 Z" fill="#000"/></svg>
<div style="left:1196.5px;top:598.30px;font-size:10.4px;line-height:14px;color:#000;white-space:nowrap;transform:scaleX(0.865);transform-origin:0 50%;">Абдулино</div>
<div style="left:1091px;top:615.30px;font-size:10.4px;line-height:14px;color:#000;white-space:nowrap;transform:scaleX(0.865);transform-origin:0 50%;">Станция прибытия:</div>
<div style="left:1192.5px;top:616.5px;width:128px;height:16px;background:#fff;box-sizing:border-box;border:1px solid;border-color:#9d9a8c #fff #fff #9d9a8c;box-shadow:inset 1px 1px 0 #66645a, inset -1px -1px 0 #e4e1d0;"></div>
<div style="left:1305.5px;top:618.5px;width:13px;height:12px;background:#ece9d8;box-sizing:border-box;border:1px solid;border-color:#fff #5c5a50 #5c5a50 #fff;box-shadow:inset -1px -1px 0 #aca899;"></div>
<svg style="position:absolute;left:1308.5px;top:623.0px" width="7" height="4" viewBox="0 0 7 4"><path d="M0 0 H7 L3.500 4 Z" fill="#000"/></svg>
<div style="left:1196.5px;top:618.80px;font-size:10.4px;line-height:14px;color:#000;white-space:nowrap;transform:scaleX(0.865);transform-origin:0 50%;">Сызрань</div>
<div style="left:1342px;top:595.10px;font-size:10.4px;line-height:14px;color:#000;white-space:nowrap;transform:scaleX(0.865);transform-origin:0 50%;">Дата отправления:</div>
<div style="left:1430px;top:596px;width:88.5px;height:16px;background:#fff;box-sizing:border-box;border:1px solid;border-color:#9d9a8c #fff #fff #9d9a8c;box-shadow:inset 1px 1px 0 #66645a, inset -1px -1px 0 #e4e1d0;"></div>
<div style="left:1503.5px;top:598px;width:13px;height:12px;background:#ece9d8;box-sizing:border-box;border:1px solid;border-color:#fff #5c5a50 #5c5a50 #fff;box-shadow:inset -1px -1px 0 #aca899;"></div>
<svg style="position:absolute;left:1506.5px;top:602.5px" width="7" height="4" viewBox="0 0 7 4"><path d="M0 0 H7 L3.500 4 Z" fill="#000"/></svg>
<div style="left:1434px;top:598.30px;font-size:10.4px;line-height:14px;color:#000;white-space:nowrap;transform:scaleX(0.865);transform-origin:0 50%;">25.05.2009</div>
<div style="left:1342px;top:615.30px;font-size:10.4px;line-height:14px;color:#000;white-space:nowrap;transform:scaleX(0.865);transform-origin:0 50%;">Дата прибытия:</div>
<div style="left:1430px;top:616.5px;width:88.5px;height:16px;background:#fff;box-sizing:border-box;border:1px solid;border-color:#9d9a8c #fff #fff #9d9a8c;box-shadow:inset 1px 1px 0 #66645a, inset -1px -1px 0 #e4e1d0;"></div>
<div style="left:1503.5px;top:618.5px;width:13px;height:12px;background:#ece9d8;box-sizing:border-box;border:1px solid;border-color:#fff #5c5a50 #5c5a50 #fff;box-shadow:inset -1px -1px 0 #aca899;"></div>
<svg style="position:absolute;left:1506.5px;top:623.0px" width="7" height="4" viewBox="0 0 7 4"><path d="M0 0 H7 L3.500 4 Z" fill="#000"/></svg>
<div style="left:1434px;top:618.80px;font-size:10.4px;line-height:14px;color:#000;white-space:nowrap;transform:scaleX(0.865);transform-origin:0 50%;">25.05.2009</div>
<div style="left:1091px;top:642.10px;font-size:10.4px;line-height:14px;color:#000;white-space:nowrap;transform:scaleX(0.865);transform-origin:0 50%;">Ф.И.О.:</div>
<div style="left:1132px;top:643.5px;width:188.5px;height:16.5px;background:#fff;box-sizing:border-box;border:1px solid;border-color:#9d9a8c #fff #fff #9d9a8c;box-shadow:inset 1px 1px 0 #66645a, inset -1px -1px 0 #e4e1d0;"></div>
<div style="left:1342px;top:642.30px;font-size:10.4px;line-height:14px;color:#000;white-space:nowrap;transform:scaleX(0.865);transform-origin:0 50%;">Стоимость билета:</div>
<div style="left:1430.5px;top:643.5px;width:88px;height:16.5px;background:#fff;box-sizing:border-box;border:1px solid;border-color:#9d9a8c #fff #fff #9d9a8c;box-shadow:inset 1px 1px 0 #66645a, inset -1px -1px 0 #e4e1d0;"></div>
<div style="left:1091px;top:670.10px;font-size:10.4px;line-height:14px;color:#000;white-space:nowrap;transform:scaleX(0.865);transform-origin:0 50%;">Вагоны в составе поезда:</div>
<div style="left:1091.5px;top:682px;width:297.5px;height:151.5px;background:#fff;box-sizing:border-box;border:1px solid;border-color:#9d9a8c #fff #fff #9d9a8c;box-shadow:inset 1px 1px 0 #66645a, inset -1px -1px 0 #e4e1d0;"></div>
<div style="left:1093px;top:684px;width:9px;height:15px;background:#ece9d8;box-sizing:border-box;border-right:1px solid #2a2a2a;border-bottom:1px solid #2a2a2a;box-shadow:inset 1px 1px 0 #fff;"></div>
<div style="left:1102px;top:684px;width:59px;height:15px;background:#ece9d8;box-sizing:border-box;border-right:1px solid #2a2a2a;border-bottom:1px solid #2a2a2a;box-shadow:inset 1px 1px 0 #fff;"></div>
<div style="left:1103.5px;top:684px;width:56.5px;height:14px;overflow:hidden;"><div style="left:0px;top:1.30px;font-size:10.4px;line-height:14px;color:#000;white-space:nowrap;transform:scaleX(0.865);transform-origin:0 50%;">№ в составе</div></div>
<div style="left:1161px;top:684px;width:30px;height:15px;background:#ece9d8;box-sizing:border-box;border-right:1px solid #2a2a2a;border-bottom:1px solid #2a2a2a;box-shadow:inset 1px 1px 0 #fff;"></div>
<div style="left:1162.5px;top:684px;width:27.5px;height:14px;overflow:hidden;"><div style="left:0px;top:1.30px;font-size:10.4px;line-height:14px;color:#000;white-space:nowrap;transform:scaleX(0.865);transform-origin:0 50%;">Класс</div></div>
<div style="left:1191px;top:684px;width:54px;height:15px;background:#ece9d8;box-sizing:border-box;border-right:1px solid #2a2a2a;border-bottom:1px solid #2a2a2a;box-shadow:inset 1px 1px 0 #fff;"></div>
<div style="left:1192.5px;top:684px;width:51.5px;height:14px;overflow:hidden;"><div style="left:0px;top:1.30px;font-size:10.4px;line-height:14px;color:#000;white-space:nowrap;transform:scaleX(0.865);transform-origin:0 50%;">Категория</div></div>
<div style="left:1245px;top:684px;width:61px;height:15px;background:#ece9d8;box-sizing:border-box;border-right:1px solid #2a2a2a;border-bottom:1px solid #2a2a2a;box-shadow:inset 1px 1px 0 #fff;"></div>
<div style="left:1246.5px;top:684px;width:58.5px;height:14px;overflow:hidden;"><div style="left:0px;top:1.30px;font-size:10.4px;line-height:14px;color:#000;white-space:nowrap;transform:scaleX(0.865);transform-origin:0 50%;">От станции</div></div>
<div style="left:1306px;top:684px;width:63px;height:15px;background:#ece9d8;box-sizing:border-box;border-right:1px solid #2a2a2a;border-bottom:1px solid #2a2a2a;box-shadow:inset 1px 1px 0 #fff;"></div>
<div style="left:1307.5px;top:684px;width:60.5px;height:14px;overflow:hidden;"><div style="left:0px;top:1.30px;font-size:10.4px;line-height:14px;color:#000;white-space:nowrap;transform:scaleX(0.865);transform-origin:0 50%;">До станции</div></div>
<div style="left:1093px;top:699px;width:9px;height:15px;background:#ece9d8;box-sizing:border-box;border-right:1px solid #2a2a2a;border-bottom:1px solid #2a2a2a;box-shadow:inset 1px 1px 0 #fff;"></div>
<svg style="position:absolute;left:1094.0px;top:701.0px" width="6" height="10" viewBox="0 0 6 10"><path d="M0 0 V10 L6 5 Z" fill="#000"/></svg>
<div style="left:1102px;top:699px;width:59px;height:15px;box-sizing:border-box;border-right:1px solid #c0c0c0;border-bottom:1px solid #c0c0c0;background:#fff;"></div>
<div style="left:1102px;top:699px;width:55.5px;height:14px;overflow:hidden;"><div style="left:0px;top:1.30px;font-size:10.4px;line-height:14px;color:#000;white-space:nowrap;width:55.5px;text-align:right;transform:scaleX(0.865);transform-origin:100% 50%;">2</div></div>
<div style="left:1161px;top:699px;width:30px;height:15px;box-sizing:border-box;border-right:1px solid #c0c0c0;border-bottom:1px solid #c0c0c0;background:#fff;"></div>
<div style="left:1162.5px;top:699px;width:27.5px;height:14px;overflow:hidden;"><div style="left:0px;top:1.30px;font-size:10.4px;line-height:14px;color:#000;white-space:nowrap;transform:scaleX(0.865);transform-origin:0 50%;">ПЛ</div></div>
<div style="left:1191px;top:699px;width:54px;height:15px;box-sizing:border-box;border-right:1px solid #c0c0c0;border-bottom:1px solid #c0c0c0;background:#fff;"></div>
<div style="left:1192.5px;top:699px;width:51.5px;height:14px;overflow:hidden;"><div style="left:0px;top:1.30px;font-size:10.4px;line-height:14px;color:#000;white-space:nowrap;transform:scaleX(0.865);transform-origin:0 50%;">Собственны</div></div>
<div style="left:1245px;top:699px;width:61px;height:15px;box-sizing:border-box;border-right:1px solid #c0c0c0;border-bottom:1px solid #c0c0c0;background:#fff;"></div>
<div style="left:1246.5px;top:699px;width:58.5px;height:14px;overflow:hidden;"><div style="left:0px;top:1.30px;font-size:10.4px;line-height:14px;color:#000;white-space:nowrap;transform:scaleX(0.865);transform-origin:0 50%;">Симферополь</div></div>
<div style="left:1306px;top:699px;width:63px;height:15px;box-sizing:border-box;border-right:1px solid #c0c0c0;border-bottom:1px solid #c0c0c0;background:#fff;"></div>
<div style="left:1307.5px;top:699px;width:60.5px;height:14px;overflow:hidden;"><div style="left:0px;top:1.30px;font-size:10.4px;line-height:14px;color:#000;white-space:nowrap;transform:scaleX(0.865);transform-origin:0 50%;">Уфа-1</div></div>
<div style="left:1093px;top:714px;width:9px;height:16px;background:#ece9d8;box-sizing:border-box;border-right:1px solid #2a2a2a;border-bottom:1px solid #2a2a2a;box-shadow:inset 1px 1px 0 #fff;"></div>
<div style="left:1102px;top:714px;width:59px;height:16px;box-sizing:border-box;border-right:1px solid #c0c0c0;border-bottom:1px solid #c0c0c0;background:#fff;"></div>
<div style="left:1102px;top:714px;width:55.5px;height:15px;overflow:hidden;"><div style="left:0px;top:1.80px;font-size:10.4px;line-height:14px;color:#000;white-space:nowrap;width:55.5px;text-align:right;transform:scaleX(0.865);transform-origin:100% 50%;">4</div></div>
<div style="left:1161px;top:714px;width:30px;height:16px;box-sizing:border-box;border-right:1px solid #c0c0c0;border-bottom:1px solid #c0c0c0;background:#fff;"></div>
<div style="left:1162.5px;top:714px;width:27.5px;height:15px;overflow:hidden;"><div style="left:0px;top:1.80px;font-size:10.4px;line-height:14px;color:#000;white-space:nowrap;transform:scaleX(0.865);transform-origin:0 50%;">ПЛ</div></div>
<div style="left:1191px;top:714px;width:54px;height:16px;box-sizing:border-box;border-right:1px solid #c0c0c0;border-bottom:1px solid #c0c0c0;background:#fff;"></div>
<div style="left:1192.5px;top:714px;width:51.5px;height:15px;overflow:hidden;"><div style="left:0px;top:1.80px;font-size:10.4px;line-height:14px;color:#000;white-space:nowrap;transform:scaleX(0.865);transform-origin:0 50%;">Собственны</div></div>
<div style="left:1245px;top:714px;width:61px;height:16px;box-sizing:border-box;border-right:1px solid #c0c0c0;border-bottom:1px solid #c0c0c0;background:#fff;"></div>
<div style="left:1246.5px;top:714px;width:58.5px;height:15px;overflow:hidden;"><div style="left:0px;top:1.80px;font-size:10.4px;line-height:14px;color:#000;white-space:nowrap;transform:scaleX(0.865);transform-origin:0 50%;">Симферополь</div></div>
<div style="left:1306px;top:714px;width:63px;height:16px;box-sizing:border-box;border-right:1px solid #c0c0c0;border-bottom:1px solid #c0c0c0;background:#fff;"></div>
<div style="left:1307.5px;top:714px;width:60.5px;height:15px;overflow:hidden;"><div style="left:0px;top:1.80px;font-size:10.4px;line-height:14px;color:#000;white-space:nowrap;transform:scaleX(0.865);transform-origin:0 50%;">Уфа-1</div></div>
<div style="left:1093px;top:730px;width:9px;height:15px;background:#ece9d8;box-sizing:border-box;border-right:1px solid #2a2a2a;border-bottom:1px solid #2a2a2a;box-shadow:inset 1px 1px 0 #fff;"></div>
<div style="left:1102px;top:730px;width:59px;height:15px;box-sizing:border-box;border-right:1px solid #c0c0c0;border-bottom:1px solid #c0c0c0;background:#fff;"></div>
<div style="left:1102px;top:730px;width:55.5px;height:14px;overflow:hidden;"><div style="left:0px;top:1.30px;font-size:10.4px;line-height:14px;color:#000;white-space:nowrap;width:55.5px;text-align:right;transform:scaleX(0.865);transform-origin:100% 50%;">5</div></div>
<div style="left:1161px;top:730px;width:30px;height:15px;box-sizing:border-box;border-right:1px solid #c0c0c0;border-bottom:1px solid #c0c0c0;background:#fff;"></div>
<div style="left:1162.5px;top:730px;width:27.5px;height:14px;overflow:hidden;"><div style="left:0px;top:1.30px;font-size:10.4px;line-height:14px;color:#000;white-space:nowrap;transform:scaleX(0.865);transform-origin:0 50%;">КУП</div></div>
<div style="left:1191px;top:730px;width:54px;height:15px;box-sizing:border-box;border-right:1px solid #c0c0c0;border-bottom:1px solid #c0c0c0;background:#fff;"></div>
<div style="left:1192.5px;top:730px;width:51.5px;height:14px;overflow:hidden;"><div style="left:0px;top:1.30px;font-size:10.4px;line-height:14px;color:#000;white-space:nowrap;transform:scaleX(0.865);transform-origin:0 50%;">Собственны</div></div>
<div style="left:1245px;top:730px;width:61px;height:15px;box-sizing:border-box;border-right:1px solid #c0c0c0;border-bottom:1px solid #c0c0c0;background:#fff;"></div>
<div style="left:1246.5px;top:730px;width:58.5px;height:14px;overflow:hidden;"><div style="left:0px;top:1.30px;font-size:10.4px;line-height:14px;color:#000;white-space:nowrap;transform:scaleX(0.865);transform-origin:0 50%;">Симферополь</div></div>
<div style="left:1306px;top:730px;width:63px;height:15px;box-sizing:border-box;border-right:1px solid #c0c0c0;border-bottom:1px solid #c0c0c0;background:#fff;"></div>
<div style="left:1307.5px;top:730px;width:60.5px;height:14px;overflow:hidden;"><div style="left:0px;top:1.30px;font-size:10.4px;line-height:14px;color:#000;white-space:nowrap;transform:scaleX(0.865);transform-origin:0 50%;">Уфа-1</div></div>
<div style="left:1093px;top:745px;width:9px;height:15px;background:#ece9d8;box-sizing:border-box;border-right:1px solid #2a2a2a;border-bottom:1px solid #2a2a2a;box-shadow:inset 1px 1px 0 #fff;"></div>
<div style="left:1102px;top:745px;width:59px;height:15px;box-sizing:border-box;border-right:1px solid #c0c0c0;border-bottom:1px solid #c0c0c0;background:#fff;"></div>
<div style="left:1102px;top:745px;width:55.5px;height:14px;overflow:hidden;"><div style="left:0px;top:1.30px;font-size:10.4px;line-height:14px;color:#000;white-space:nowrap;width:55.5px;text-align:right;transform:scaleX(0.865);transform-origin:100% 50%;">6</div></div>
<div style="left:1161px;top:745px;width:30px;height:15px;box-sizing:border-box;border-right:1px solid #c0c0c0;border-bottom:1px solid #c0c0c0;background:#fff;"></div>
<div style="left:1162.5px;top:745px;width:27.5px;height:14px;overflow:hidden;"><div style="left:0px;top:1.30px;font-size:10.4px;line-height:14px;color:#000;white-space:nowrap;transform:scaleX(0.865);transform-origin:0 50%;">КУП</div></div>
<div style="left:1191px;top:745px;width:54px;height:15px;box-sizing:border-box;border-right:1px solid #c0c0c0;border-bottom:1px solid #c0c0c0;background:#fff;"></div>
<div style="left:1192.5px;top:745px;width:51.5px;height:14px;overflow:hidden;"><div style="left:0px;top:1.30px;font-size:10.4px;line-height:14px;color:#000;white-space:nowrap;transform:scaleX(0.865);transform-origin:0 50%;">Собственны</div></div>
<div style="left:1245px;top:745px;width:61px;height:15px;box-sizing:border-box;border-right:1px solid #c0c0c0;border-bottom:1px solid #c0c0c0;background:#fff;"></div>
<div style="left:1246.5px;top:745px;width:58.5px;height:14px;overflow:hidden;"><div style="left:0px;top:1.30px;font-size:10.4px;line-height:14px;color:#000;white-space:nowrap;transform:scaleX(0.865);transform-origin:0 50%;">Симферополь</div></div>
<div style="left:1306px;top:745px;width:63px;height:15px;box-sizing:border-box;border-right:1px solid #c0c0c0;border-bottom:1px solid #c0c0c0;background:#fff;"></div>
<div style="left:1307.5px;top:745px;width:60.5px;height:14px;overflow:hidden;"><div style="left:0px;top:1.30px;font-size:10.4px;line-height:14px;color:#000;white-space:nowrap;transform:scaleX(0.865);transform-origin:0 50%;">Уфа-1</div></div>
<div style="left:1093px;top:760px;width:9px;height:15px;background:#ece9d8;box-sizing:border-box;border-right:1px solid #2a2a2a;border-bottom:1px solid #2a2a2a;box-shadow:inset 1px 1px 0 #fff;"></div>
<div style="left:1102px;top:760px;width:59px;height:15px;box-sizing:border-box;border-right:1px solid #c0c0c0;border-bottom:1px solid #c0c0c0;background:#fff;"></div>
<div style="left:1102px;top:760px;width:55.5px;height:14px;overflow:hidden;"><div style="left:0px;top:1.30px;font-size:10.4px;line-height:14px;color:#000;white-space:nowrap;width:55.5px;text-align:right;transform:scaleX(0.865);transform-origin:100% 50%;">7</div></div>
<div style="left:1161px;top:760px;width:30px;height:15px;box-sizing:border-box;border-right:1px solid #c0c0c0;border-bottom:1px solid #c0c0c0;background:#fff;"></div>
<div style="left:1162.5px;top:760px;width:27.5px;height:14px;overflow:hidden;"><div style="left:0px;top:1.30px;font-size:10.4px;line-height:14px;color:#000;white-space:nowrap;transform:scaleX(0.865);transform-origin:0 50%;">ПЛ</div></div>
<div style="left:1191px;top:760px;width:54px;height:15px;box-sizing:border-box;border-right:1px solid #c0c0c0;border-bottom:1px solid #c0c0c0;background:#fff;"></div>
<div style="left:1192.5px;top:760px;width:51.5px;height:14px;overflow:hidden;"><div style="left:0px;top:1.30px;font-size:10.4px;line-height:14px;color:#000;white-space:nowrap;transform:scaleX(0.865);transform-origin:0 50%;">Собственны</div></div>
<div style="left:1245px;top:760px;width:61px;height:15px;box-sizing:border-box;border-right:1px solid #c0c0c0;border-bottom:1px solid #c0c0c0;background:#fff;"></div>
<div style="left:1246.5px;top:760px;width:58.5px;height:14px;overflow:hidden;"><div style="left:0px;top:1.30px;font-size:10.4px;line-height:14px;color:#000;white-space:nowrap;transform:scaleX(0.865);transform-origin:0 50%;">Симферополь</div></div>
<div style="left:1306px;top:760px;width:63px;height:15px;box-sizing:border-box;border-right:1px solid #c0c0c0;border-bottom:1px solid #c0c0c0;background:#fff;"></div>
<div style="left:1307.5px;top:760px;width:60.5px;height:14px;overflow:hidden;"><div style="left:0px;top:1.30px;font-size:10.4px;line-height:14px;color:#000;white-space:nowrap;transform:scaleX(0.865);transform-origin:0 50%;">Уфа-1</div></div>
<div style="left:1093px;top:775px;width:9px;height:15px;background:#ece9d8;box-sizing:border-box;border-right:1px solid #2a2a2a;border-bottom:1px solid #2a2a2a;box-shadow:inset 1px 1px 0 #fff;"></div>
<div style="left:1102px;top:775px;width:59px;height:15px;box-sizing:border-box;border-right:1px solid #c0c0c0;border-bottom:1px solid #c0c0c0;background:#fff;"></div>
<div style="left:1102px;top:775px;width:55.5px;height:14px;overflow:hidden;"><div style="left:0px;top:1.30px;font-size:10.4px;line-height:14px;color:#000;white-space:nowrap;width:55.5px;text-align:right;transform:scaleX(0.865);transform-origin:100% 50%;">8</div></div>
<div style="left:1161px;top:775px;width:30px;height:15px;box-sizing:border-box;border-right:1px solid #c0c0c0;border-bottom:1px solid #c0c0c0;background:#fff;"></div>
<div style="left:1162.5px;top:775px;width:27.5px;height:14px;overflow:hidden;"><div style="left:0px;top:1.30px;font-size:10.4px;line-height:14px;color:#000;white-space:nowrap;transform:scaleX(0.865);transform-origin:0 50%;">КУП</div></div>
<div style="left:1191px;top:775px;width:54px;height:15px;box-sizing:border-box;border-right:1px solid #c0c0c0;border-bottom:1px solid #c0c0c0;background:#fff;"></div>
<div style="left:1192.5px;top:775px;width:51.5px;height:14px;overflow:hidden;"><div style="left:0px;top:1.30px;font-size:10.4px;line-height:14px;color:#000;white-space:nowrap;transform:scaleX(0.865);transform-origin:0 50%;">Прицепной</div></div>
<div style="left:1245px;top:775px;width:61px;height:15px;box-sizing:border-box;border-right:1px solid #c0c0c0;border-bottom:1px solid #c0c0c0;background:#fff;"></div>
<div style="left:1246.5px;top:775px;width:58.5px;height:14px;overflow:hidden;"><div style="left:0px;top:1.30px;font-size:10.4px;line-height:14px;color:#000;white-space:nowrap;transform:scaleX(0.865);transform-origin:0 50%;">Симферополь</div></div>
<div style="left:1306px;top:775px;width:63px;height:15px;box-sizing:border-box;border-right:1px solid #c0c0c0;border-bottom:1px solid #c0c0c0;background:#fff;"></div>
<div style="left:1307.5px;top:775px;width:60.5px;height:14px;overflow:hidden;"><div style="left:0px;top:1.30px;font-size:10.4px;line-height:14px;color:#000;white-space:nowrap;transform:scaleX(0.865);transform-origin:0 50%;">Пенза-1</div></div>
<div style="left:1093px;top:790px;width:9px;height:15px;background:#ece9d8;box-sizing:border-box;border-right:1px solid #2a2a2a;border-bottom:1px solid #2a2a2a;box-shadow:inset 1px 1px 0 #fff;"></div>
<div style="left:1102px;top:790px;width:59px;height:15px;box-sizing:border-box;border-right:1px solid #c0c0c0;border-bottom:1px solid #c0c0c0;background:#fff;"></div>
<div style="left:1102px;top:790px;width:55.5px;height:14px;overflow:hidden;"><div style="left:0px;top:1.30px;font-size:10.4px;line-height:14px;color:#000;white-space:nowrap;width:55.5px;text-align:right;transform:scaleX(0.865);transform-origin:100% 50%;">9</div></div>
<div style="left:1161px;top:790px;width:30px;height:15px;box-sizing:border-box;border-right:1px solid #c0c0c0;border-bottom:1px solid #c0c0c0;background:#fff;"></div>
<div style="left:1162.5px;top:790px;width:27.5px;height:14px;overflow:hidden;"><div style="left:0px;top:1.30px;font-size:10.4px;line-height:14px;color:#000;white-space:nowrap;transform:scaleX(0.865);transform-origin:0 50%;">ПЛ</div></div>
<div style="left:1191px;top:790px;width:54px;height:15px;box-sizing:border-box;border-right:1px solid #c0c0c0;border-bottom:1px solid #c0c0c0;background:#fff;"></div>
<div style="left:1192.5px;top:790px;width:51.5px;height:14px;overflow:hidden;"><div style="left:0px;top:1.30px;font-size:10.4px;line-height:14px;color:#000;white-space:nowrap;transform:scaleX(0.865);transform-origin:0 50%;">Прицепной</div></div>
<div style="left:1245px;top:790px;width:61px;height:15px;box-sizing:border-box;border-right:1px solid #c0c0c0;border-bottom:1px solid #c0c0c0;background:#fff;"></div>
<div style="left:1246.5px;top:790px;width:58.5px;height:14px;overflow:hidden;"><div style="left:0px;top:1.30px;font-size:10.4px;line-height:14px;color:#000;white-space:nowrap;transform:scaleX(0.865);transform-origin:0 50%;">Симферополь</div></div>
<div style="left:1306px;top:790px;width:63px;height:15px;box-sizing:border-box;border-right:1px solid #c0c0c0;border-bottom:1px solid #c0c0c0;background:#fff;"></div>
<div style="left:1307.5px;top:790px;width:60.5px;height:14px;overflow:hidden;"><div style="left:0px;top:1.30px;font-size:10.4px;line-height:14px;color:#000;white-space:nowrap;transform:scaleX(0.865);transform-origin:0 50%;">Пенза-1</div></div>
<div style="left:1373.5px;top:683.5px;width:14px;height:134.3px;background:linear-gradient(90deg,#f3f2ea,#fdfdfb 50%,#f3f2ea);"></div>
<div style="left:1373.5px;top:683.5px;width:14px;height:14px;box-sizing:border-box;border:1px solid #b8cdf0;border-radius:2px;background:linear-gradient(135deg,#fdfeff,#dfe8fb 60%,#c6d5f6);"></div>
<svg style="position:absolute;left:1377.0px;top:688.5px" width="7" height="4" viewBox="0 0 7 4"><path d="M0 4 H7 L3.500 0 Z" fill="#3c56b0"/></svg>
<div style="left:1373.5px;top:803.8px;width:14px;height:14px;box-sizing:border-box;border:1px solid #b8cdf0;border-radius:2px;background:linear-gradient(135deg,#fdfeff,#dfe8fb 60%,#c6d5f6);"></div>
<svg style="position:absolute;left:1377.0px;top:808.8px" width="7" height="4" viewBox="0 0 7 4"><path d="M0 0 H7 L3.500 4 Z" fill="#3c56b0"/></svg>
<div style="left:1373.5px;top:697.5px;width:14px;height:13px;box-sizing:border-box;border:1px solid #a8c0f0;border-radius:2px;background:linear-gradient(90deg,#fbfcff,#dde6fb 55%,#c5d4f7);"></div>
<div style="left:1093px;top:817.8px;width:280.5px;height:14px;background:linear-gradient(180deg,#f3f2ea,#fdfdfb 50%,#f3f2ea);"></div>
<div style="left:1093px;top:817.8px;width:14px;height:14px;box-sizing:border-box;border:1px solid #b8cdf0;border-radius:2px;background:linear-gradient(135deg,#fdfeff,#dfe8fb 60%,#c6d5f6);"></div>
<svg style="position:absolute;left:1098.0px;top:821.3px" width="4" height="7" viewBox="0 0 4 7"><path d="M4 0 V7 L0 3.500 Z" fill="#3c56b0"/></svg>
<div style="left:1359.5px;top:817.8px;width:14px;height:14px;box-sizing:border-box;border:1px solid #b8cdf0;border-radius:2px;background:linear-gradient(135deg,#fdfeff,#dfe8fb 60%,#c6d5f6);"></div>
<svg style="position:absolute;left:1364.5px;top:821.3px" width="4" height="7" viewBox="0 0 4 7"><path d="M0 0 V7 L4 3.500 Z" fill="#3c56b0"/></svg>
<div style="left:1107px;top:817.8px;width:13.5px;height:14px;box-sizing:border-box;border:1px solid #a8c0f0;border-radius:2px;background:linear-gradient(180deg,#fbfcff,#dde6fb 55%,#c5d4f7);"></div>
<div style="left:1373.5px;top:817.8px;width:14px;height:14px;background:#ece9d8;"></div>
<div style="left:1396.5px;top:670.10px;font-size:10.4px;line-height:14px;color:#000;white-space:nowrap;transform:scaleX(0.865);transform-origin:0 50%;">Места вагона:</div>
<div style="left:1391px;top:682px;width:134.5px;height:151.5px;background:#fff;box-sizing:border-box;border:1px solid;border-color:#9d9a8c #fff #fff #9d9a8c;box-shadow:inset 1px 1px 0 #66645a, inset -1px -1px 0 #e4e1d0;"></div>
<div style="left:1393px;top:684px;width:8px;height:15px;background:#ece9d8;box-sizing:border-box;border-right:1px solid #2a2a2a;border-bottom:1px solid #2a2a2a;box-shadow:inset 1px 1px 0 #fff;"></div>
<div style="left:1401px;top:684px;width:56px;height:15px;background:#ece9d8;box-sizing:border-box;border-right:1px solid #2a2a2a;border-bottom:1px solid #2a2a2a;box-shadow:inset 1px 1px 0 #fff;"></div>
<div style="left:1402.5px;top:684px;width:53.5px;height:14px;overflow:hidden;"><div style="left:0px;top:1.30px;font-size:10.4px;line-height:14px;color:#000;white-space:nowrap;transform:scaleX(0.865);transform-origin:0 50%;">№ места</div></div>
<div style="left:1457px;top:684px;width:49px;height:15px;background:#ece9d8;box-sizing:border-box;border-right:1px solid #2a2a2a;border-bottom:1px solid #2a2a2a;box-shadow:inset 1px 1px 0 #fff;"></div>
<div style="left:1458.5px;top:684px;width:46.5px;height:14px;overflow:hidden;"><div style="left:0px;top:1.30px;font-size:10.4px;line-height:14px;color:#000;white-space:nowrap;transform:scaleX(0.865);transform-origin:0 50%;">Тип места</div></div>
<div style="left:1393px;top:699px;width:8px;height:15px;background:#ece9d8;box-sizing:border-box;border-right:1px solid #2a2a2a;border-bottom:1px solid #2a2a2a;box-shadow:inset 1px 1px 0 #fff;"></div>
<div style="left:1401px;top:699px;width:56px;height:15px;box-sizing:border-box;border-right:1px solid #c0c0c0;border-bottom:1px solid #c0c0c0;background:#fff;"></div>
<div style="left:1401px;top:699px;width:52.5px;height:14px;overflow:hidden;"><div style="left:0px;top:1.30px;font-size:10.4px;line-height:14px;color:#000;white-space:nowrap;width:52.5px;text-align:right;transform:scaleX(0.865);transform-origin:100% 50%;">1</div></div>
<div style="left:1457px;top:699px;width:49px;height:15px;box-sizing:border-box;border-right:1px solid #c0c0c0;border-bottom:1px solid #c0c0c0;background:#fff;"></div>
<div style="left:1458.5px;top:699px;width:46.5px;height:14px;overflow:hidden;"><div style="left:0px;top:1.30px;font-size:10.4px;line-height:14px;color:#000;white-space:nowrap;transform:scaleX(0.865);transform-origin:0 50%;">низ</div></div>
<div style="left:1393px;top:714px;width:8px;height:16px;background:#ece9d8;box-sizing:border-box;border-right:1px solid #2a2a2a;border-bottom:1px solid #2a2a2a;box-shadow:inset 1px 1px 0 #fff;"></div>
<svg style="position:absolute;left:1393.5px;top:716.5px" width="6" height="10" viewBox="0 0 6 10"><path d="M0 0 V10 L6 5 Z" fill="#000"/></svg>
<div style="left:1401px;top:714px;width:56px;height:16px;box-sizing:border-box;border-right:1px solid #c0c0c0;border-bottom:1px solid #c0c0c0;background:#fff;"></div>
<div style="left:1401px;top:714px;width:52.5px;height:15px;overflow:hidden;"><div style="left:0px;top:1.80px;font-size:10.4px;line-height:14px;color:#000;white-space:nowrap;width:52.5px;text-align:right;transform:scaleX(0.865);transform-origin:100% 50%;">2</div></div>
<div style="left:1457px;top:714px;width:49px;height:16px;box-sizing:border-box;border-right:1px solid #c0c0c0;border-bottom:1px solid #c0c0c0;background:#fff;"></div>
<div style="left:1458.5px;top:714px;width:46.5px;height:15px;overflow:hidden;"><div style="left:0px;top:1.80px;font-size:10.4px;line-height:14px;color:#000;white-space:nowrap;transform:scaleX(0.865);transform-origin:0 50%;">верх</div></div>
<div style="left:1393px;top:730px;width:8px;height:15px;background:#ece9d8;box-sizing:border-box;border-right:1px solid #2a2a2a;border-bottom:1px solid #2a2a2a;box-shadow:inset 1px 1px 0 #fff;"></div>
<div style="left:1401px;top:730px;width:56px;height:15px;box-sizing:border-box;border-right:1px solid #c0c0c0;border-bottom:1px solid #c0c0c0;background:#fff;"></div>
<div style="left:1401px;top:730px;width:52.5px;height:14px;overflow:hidden;"><div style="left:0px;top:1.30px;font-size:10.4px;line-height:14px;color:#000;white-space:nowrap;width:52.5px;text-align:right;transform:scaleX(0.865);transform-origin:100% 50%;">3</div></div>
<div style="left:1457px;top:730px;width:49px;height:15px;box-sizing:border-box;border-right:1px solid #c0c0c0;border-bottom:1px solid #c0c0c0;background:#fff;"></div>
<div style="left:1458.5px;top:730px;width:46.5px;height:14px;overflow:hidden;"><div style="left:0px;top:1.30px;font-size:10.4px;line-height:14px;color:#000;white-space:nowrap;transform:scaleX(0.865);transform-origin:0 50%;">низ</div></div>
<div style="left:1393px;top:745px;width:8px;height:15px;background:#ece9d8;box-sizing:border-box;border-right:1px solid #2a2a2a;border-bottom:1px solid #2a2a2a;box-shadow:inset 1px 1px 0 #fff;"></div>
<div style="left:1401px;top:745px;width:56px;height:15px;box-sizing:border-box;border-right:1px solid #c0c0c0;border-bottom:1px solid #c0c0c0;background:#fff;"></div>
<div style="left:1401px;top:745px;width:52.5px;height:14px;overflow:hidden;"><div style="left:0px;top:1.30px;font-size:10.4px;line-height:14px;color:#000;white-space:nowrap;width:52.5px;text-align:right;transform:scaleX(0.865);transform-origin:100% 50%;">4</div></div>
<div style="left:1457px;top:745px;width:49px;height:15px;box-sizing:border-box;border-right:1px solid #c0c0c0;border-bottom:1px solid #c0c0c0;background:#fff;"></div>
<div style="left:1458.5px;top:745px;width:46.5px;height:14px;overflow:hidden;"><div style="left:0px;top:1.30px;font-size:10.4px;line-height:14px;color:#000;white-space:nowrap;transform:scaleX(0.865);transform-origin:0 50%;">верх</div></div>
<div style="left:1393px;top:760px;width:8px;height:15px;background:#ece9d8;box-sizing:border-box;border-right:1px solid #2a2a2a;border-bottom:1px solid #2a2a2a;box-shadow:inset 1px 1px 0 #fff;"></div>
<div style="left:1401px;top:760px;width:56px;height:15px;box-sizing:border-box;border-right:1px solid #c0c0c0;border-bottom:1px solid #c0c0c0;background:#fff;"></div>
<div style="left:1401px;top:760px;width:52.5px;height:14px;overflow:hidden;"><div style="left:0px;top:1.30px;font-size:10.4px;line-height:14px;color:#000;white-space:nowrap;width:52.5px;text-align:right;transform:scaleX(0.865);transform-origin:100% 50%;">5</div></div>
<div style="left:1457px;top:760px;width:49px;height:15px;box-sizing:border-box;border-right:1px solid #c0c0c0;border-bottom:1px solid #c0c0c0;background:#fff;"></div>
<div style="left:1458.5px;top:760px;width:46.5px;height:14px;overflow:hidden;"><div style="left:0px;top:1.30px;font-size:10.4px;line-height:14px;color:#000;white-space:nowrap;transform:scaleX(0.865);transform-origin:0 50%;">низ</div></div>
<div style="left:1393px;top:775px;width:8px;height:15px;background:#ece9d8;box-sizing:border-box;border-right:1px solid #2a2a2a;border-bottom:1px solid #2a2a2a;box-shadow:inset 1px 1px 0 #fff;"></div>
<div style="left:1401px;top:775px;width:56px;height:15px;box-sizing:border-box;border-right:1px solid #c0c0c0;border-bottom:1px solid #c0c0c0;background:#fff;"></div>
<div style="left:1401px;top:775px;width:52.5px;height:14px;overflow:hidden;"><div style="left:0px;top:1.30px;font-size:10.4px;line-height:14px;color:#000;white-space:nowrap;width:52.5px;text-align:right;transform:scaleX(0.865);transform-origin:100% 50%;">6</div></div>
<div style="left:1457px;top:775px;width:49px;height:15px;box-sizing:border-box;border-right:1px solid #c0c0c0;border-bottom:1px solid #c0c0c0;background:#fff;"></div>
<div style="left:1458.5px;top:775px;width:46.5px;height:14px;overflow:hidden;"><div style="left:0px;top:1.30px;font-size:10.4px;line-height:14px;color:#000;white-space:nowrap;transform:scaleX(0.865);transform-origin:0 50%;">верх</div></div>
<div style="left:1393px;top:790px;width:8px;height:15px;background:#ece9d8;box-sizing:border-box;border-right:1px solid #2a2a2a;border-bottom:1px solid #2a2a2a;box-shadow:inset 1px 1px 0 #fff;"></div>
<div style="left:1401px;top:790px;width:56px;height:15px;box-sizing:border-box;border-right:1px solid #c0c0c0;border-bottom:1px solid #c0c0c0;background:#fff;"></div>
<div style="left:1401px;top:790px;width:52.5px;height:14px;overflow:hidden;"><div style="left:0px;top:1.30px;font-size:10.4px;line-height:14px;color:#000;white-space:nowrap;width:52.5px;text-align:right;transform:scaleX(0.865);transform-origin:100% 50%;">7</div></div>
<div style="left:1457px;top:790px;width:49px;height:15px;box-sizing:border-box;border-right:1px solid #c0c0c0;border-bottom:1px solid #c0c0c0;background:#fff;"></div>
<div style="left:1458.5px;top:790px;width:46.5px;height:14px;overflow:hidden;"><div style="left:0px;top:1.30px;font-size:10.4px;line-height:14px;color:#000;white-space:nowrap;transform:scaleX(0.865);transform-origin:0 50%;">низ</div></div>
<div style="left:1509.5px;top:683.5px;width:14px;height:134.3px;background:linear-gradient(90deg,#f3f2ea,#fdfdfb 50%,#f3f2ea);"></div>
<div style="left:1509.5px;top:683.5px;width:14px;height:14px;box-sizing:border-box;border:1px solid #b8cdf0;border-radius:2px;background:linear-gradient(135deg,#fdfeff,#dfe8fb 60%,#c6d5f6);"></div>
<svg style="position:absolute;left:1513.0px;top:688.5px" width="7" height="4" viewBox="0 0 7 4"><path d="M0 4 H7 L3.500 0 Z" fill="#3c56b0"/></svg>
<div style="left:1509.5px;top:803.8px;width:14px;height:14px;box-sizing:border-box;border:1px solid #b8cdf0;border-radius:2px;background:linear-gradient(135deg,#fdfeff,#dfe8fb 60%,#c6d5f6);"></div>
<svg style="position:absolute;left:1513.0px;top:808.8px" width="7" height="4" viewBox="0 0 7 4"><path d="M0 0 H7 L3.500 4 Z" fill="#3c56b0"/></svg>
<div style="left:1509.5px;top:697.5px;width:14px;height:13px;box-sizing:border-box;border:1px solid #a8c0f0;border-radius:2px;background:linear-gradient(90deg,#fbfcff,#dde6fb 55%,#c5d4f7);"></div>
<div style="left:1392.5px;top:817.8px;width:117px;height:14px;background:linear-gradient(180deg,#f3f2ea,#fdfdfb 50%,#f3f2ea);"></div>
<div style="left:1392.5px;top:817.8px;width:14px;height:14px;box-sizing:border-box;border:1px solid #b8cdf0;border-radius:2px;background:linear-gradient(135deg,#fdfeff,#dfe8fb 60%,#c6d5f6);"></div>
<svg style="position:absolute;left:1397.5px;top:821.3px" width="4" height="7" viewBox="0 0 4 7"><path d="M4 0 V7 L0 3.500 Z" fill="#3c56b0"/></svg>
<div style="left:1495.5px;top:817.8px;width:14px;height:14px;box-sizing:border-box;border:1px solid #b8cdf0;border-radius:2px;background:linear-gradient(135deg,#fdfeff,#dfe8fb 60%,#c6d5f6);"></div>
<svg style="position:absolute;left:1500.5px;top:821.3px" width="4" height="7" viewBox="0 0 4 7"><path d="M0 0 V7 L4 3.500 Z" fill="#3c56b0"/></svg>
<div style="left:1406.5px;top:817.8px;width:13.5px;height:14px;box-sizing:border-box;border:1px solid #a8c0f0;border-radius:2px;background:linear-gradient(180deg,#fbfcff,#dde6fb 55%,#c5d4f7);"></div>
<div style="left:1509.5px;top:817.8px;width:14px;height:14px;background:#ece9d8;"></div>
<div style="left:1530.5px;top:703.5px;width:29.5px;height:56.5px;background:#000;"></div>
<div style="left:1531.5px;top:704.5px;width:27.5px;height:54.5px;background:#ece9d8;box-sizing:border-box;border:1px solid;border-color:#fff #716f64 #716f64 #fff;box-shadow:inset -1px -1px 0 #aca899, inset 1px 1px 0 #f6f4ea;"></div>
<div style="left:1535px;top:708px;width:20.5px;height:47.5px;box-sizing:border-box;border:1px dotted #333;"></div>
<svg style="position:absolute;left:1538.5px;top:727.5px" width="13.6" height="8.8" viewBox="0 0 17 11"><g><path d="M0.500 4.200 H9.500 V1 L16 5.500 L9.500 10 V6.800 H0.500 Z" fill="#e01010" stroke="#400000" stroke-width=".8"/></g></svg>
<div style="left:1531.5px;top:766px;width:27.5px;height:54px;background:#ece9d8;box-sizing:border-box;border:1px solid;border-color:#fff #716f64 #716f64 #fff;box-shadow:inset -1px -1px 0 #aca899, inset 1px 1px 0 #f6f4ea;"></div>
<svg style="position:absolute;left:1538.5px;top:789.5px" width="13.6" height="8.8" viewBox="0 0 17 11"><g transform="translate(17,0) scale(-1,1)"><path d="M0.500 4.200 H9.500 V1 L16 5.500 L9.500 10 V6.800 H0.500 Z" fill="#e01010" stroke="#400000" stroke-width=".8"/></g></svg>
<div style="left:1572.5px;top:670.10px;font-size:10.4px;line-height:14px;color:#000;white-space:nowrap;transform:scaleX(0.865);transform-origin:0 50%;">Места билета:</div>
<div style="left:1566.5px;top:682px;width:135px;height:151.5px;background:#fff;box-sizing:border-box;border:1px solid;border-color:#9d9a8c #fff #fff #9d9a8c;box-shadow:inset 1px 1px 0 #66645a, inset -1px -1px 0 #e4e1d0;"></div>
<div style="left:1568px;top:684px;width:9px;height:15px;background:#ece9d8;box-sizing:border-box;border-right:1px solid #2a2a2a;border-bottom:1px solid #2a2a2a;box-shadow:inset 1px 1px 0 #fff;"></div>
<div style="left:1577px;top:684px;width:50px;height:15px;background:#ece9d8;box-sizing:border-box;border-right:1px solid #2a2a2a;border-bottom:1px solid #2a2a2a;box-shadow:inset 1px 1px 0 #fff;"></div>
<div style="left:1578.5px;top:684px;width:47.5px;height:14px;overflow:hidden;"><div style="left:0px;top:1.30px;font-size:10.4px;line-height:14px;color:#000;white-space:nowrap;transform:scaleX(0.865);transform-origin:0 50%;">№ места</div></div>
<div style="left:1627px;top:684px;width:50px;height:15px;background:#ece9d8;box-sizing:border-box;border-right:1px solid #2a2a2a;border-bottom:1px solid #2a2a2a;box-shadow:inset 1px 1px 0 #fff;"></div>
<div style="left:1628.5px;top:684px;width:47.5px;height:14px;overflow:hidden;"><div style="left:0px;top:1.30px;font-size:10.4px;line-height:14px;color:#000;white-space:nowrap;transform:scaleX(0.865);transform-origin:0 50%;">№ вагона</div></div>
<div style="left:1568px;top:699px;width:9px;height:15px;background:#ece9d8;box-sizing:border-box;border-right:1px solid #2a2a2a;border-bottom:1px solid #2a2a2a;box-shadow:inset 1px 1px 0 #fff;"></div>
<svg style="position:absolute;left:1569.0px;top:701.0px" width="6" height="10" viewBox="0 0 6 10"><path d="M0 0 V10 L6 5 Z" fill="#000"/></svg>
<div style="left:1577px;top:699px;width:50px;height:15px;box-sizing:border-box;border-right:1px solid #c0c0c0;border-bottom:1px solid #c0c0c0;background:#fff;"></div>
<div style="left:1577px;top:699px;width:46.5px;height:14px;overflow:hidden;"><div style="left:0px;top:1.30px;font-size:10.4px;line-height:14px;color:#000;white-space:nowrap;width:46.5px;text-align:right;transform:scaleX(0.865);transform-origin:100% 50%;">1</div></div>
<div style="left:1627px;top:699px;width:50px;height:15px;box-sizing:border-box;border-right:1px solid #c0c0c0;border-bottom:1px solid #c0c0c0;background:#fff;"></div>
<div style="left:1627px;top:699px;width:46.5px;height:14px;overflow:hidden;"><div style="left:0px;top:1.30px;font-size:10.4px;line-height:14px;color:#000;white-space:nowrap;width:46.5px;text-align:right;transform:scaleX(0.865);transform-origin:100% 50%;">2</div></div>
<div style="left:1568px;top:714px;width:9px;height:16px;background:#ece9d8;box-sizing:border-box;border-right:1px solid #2a2a2a;border-bottom:1px solid #2a2a2a;box-shadow:inset 1px 1px 0 #fff;"></div>
<div style="left:1577px;top:714px;width:50px;height:16px;box-sizing:border-box;border-right:1px solid #c0c0c0;border-bottom:1px solid #c0c0c0;background:#fff;"></div>
<div style="left:1577px;top:714px;width:46.5px;height:15px;overflow:hidden;"><div style="left:0px;top:1.80px;font-size:10.4px;line-height:14px;color:#000;white-space:nowrap;width:46.5px;text-align:right;transform:scaleX(0.865);transform-origin:100% 50%;">2</div></div>
<div style="left:1627px;top:714px;width:50px;height:16px;box-sizing:border-box;border-right:1px solid #c0c0c0;border-bottom:1px solid #c0c0c0;background:#fff;"></div>
<div style="left:1627px;top:714px;width:46.5px;height:15px;overflow:hidden;"><div style="left:0px;top:1.80px;font-size:10.4px;line-height:14px;color:#000;white-space:nowrap;width:46.5px;text-align:right;transform:scaleX(0.865);transform-origin:100% 50%;">2</div></div>
<div style="left:1686px;top:683.5px;width:14px;height:134.3px;background:linear-gradient(90deg,#f3f2ea,#fdfdfb 50%,#f3f2ea);"></div>
<div style="left:1686px;top:683.5px;width:14px;height:14px;box-sizing:border-box;border:1px solid #b8cdf0;border-radius:2px;background:linear-gradient(135deg,#fdfeff,#dfe8fb 60%,#c6d5f6);"></div>
<svg style="position:absolute;left:1689.5px;top:688.5px" width="7" height="4" viewBox="0 0 7 4"><path d="M0 4 H7 L3.500 0 Z" fill="#3c56b0"/></svg>
<div style="left:1686px;top:803.8px;width:14px;height:14px;box-sizing:border-box;border:1px solid #b8cdf0;border-radius:2px;background:linear-gradient(135deg,#fdfeff,#dfe8fb 60%,#c6d5f6);"></div>
<svg style="position:absolute;left:1689.5px;top:808.8px" width="7" height="4" viewBox="0 0 7 4"><path d="M0 0 H7 L3.500 4 Z" fill="#3c56b0"/></svg>
<div style="left:1686px;top:697.5px;width:14px;height:70px;box-sizing:border-box;border:1px solid #a8c0f0;border-radius:2px;background:linear-gradient(90deg,#fbfcff,#dde6fb 55%,#c5d4f7);"></div>
<svg style="position:absolute;left:1690.0px;top:729.0px" width="6" height="7" viewBox="0 0 6 7"><path d="M0 0.500 H6 M0 2.500 H6 M0 4.500 H6 M0 6.500 H6" stroke="#8aa6e8" stroke-width="1"/></svg>
<div style="left:1568px;top:817.8px;width:118px;height:14px;background:linear-gradient(180deg,#f3f2ea,#fdfdfb 50%,#f3f2ea);"></div>
<div style="left:1568px;top:817.8px;width:14px;height:14px;box-sizing:border-box;border:1px solid #b8cdf0;border-radius:2px;background:linear-gradient(135deg,#fdfeff,#dfe8fb 60%,#c6d5f6);"></div>
<svg style="position:absolute;left:1573.0px;top:821.3px" width="4" height="7" viewBox="0 0 4 7"><path d="M4 0 V7 L0 3.500 Z" fill="#3c56b0"/></svg>
<div style="left:1672px;top:817.8px;width:14px;height:14px;box-sizing:border-box;border:1px solid #b8cdf0;border-radius:2px;background:linear-gradient(135deg,#fdfeff,#dfe8fb 60%,#c6d5f6);"></div>
<svg style="position:absolute;left:1677.0px;top:821.3px" width="4" height="7" viewBox="0 0 4 7"><path d="M0 0 V7 L4 3.500 Z" fill="#3c56b0"/></svg>
<div style="left:1582px;top:817.8px;width:13.5px;height:14px;box-sizing:border-box;border:1px solid #a8c0f0;border-radius:2px;background:linear-gradient(180deg,#fbfcff,#dde6fb 55%,#c5d4f7);"></div>
<div style="left:1686px;top:817.8px;width:14px;height:14px;background:#ece9d8;"></div>
<div style="left:1416px;top:847px;width:143.5px;height:34px;background:#ece9d8;box-sizing:border-box;border:1px solid;border-color:#fff #716f64 #716f64 #fff;box-shadow:inset -1px -1px 0 #aca899, inset 1px 1px 0 #f6f4ea;"></div>
<svg style="position:absolute;left:1423px;top:859px;" width="9" height="11" viewBox="0 0 9 11"><path d="M0.500 0.500 H6 L8.500 3 V10.500 H0.500 Z" fill="#fff" stroke="#222" stroke-width="1"/><path d="M2 4 H7 M2 6 H7 M2 8 H7" stroke="#444" stroke-width=".8"/></svg>
<div style="left:1436px;top:855.00px;font-size:15px;line-height:19px;color:#000;white-space:nowrap;">Оформить билет</div>
<div style="left:1572px;top:847px;width:129.5px;height:34px;background:#ece9d8;box-sizing:border-box;border:1px solid;border-color:#fff #716f64 #716f64 #fff;box-shadow:inset -1px -1px 0 #aca899, inset 1px 1px 0 #f6f4ea;"></div>
<svg style="position:absolute;left:1603px;top:859px;" width="12" height="12" viewBox="0 0 12 12"><path d="M1.500 1.500 L10.500 10.500 M10.500 1.500 L1.500 10.500" stroke="#d01010" stroke-width="3"/></svg>
<div style="left:1618px;top:855.00px;font-size:15px;line-height:19px;color:#000;white-space:nowrap;">Отмена</div>
<div style="left:0px;top:0px;width:1920px;height:26px;background:linear-gradient(90deg,#8c8aa8 0%,#807e9c 8%,#7e7c9b 40%,#807d9c 60%,#8587a7 75%,#7f86aa 85%,#7c80a6 93%,#8e8eb2 100%);"></div>
<div style="left:0px;top:0px;width:1920px;height:26px;background:linear-gradient(180deg,rgba(255,255,255,.04) 0%,rgba(255,255,255,0) 50%,rgba(40,40,70,.03) 100%);"></div>
<div style="left:60px;top:4px;width:120px;height:22px;background:radial-gradient(ellipse 36px 12px at 60px 16px,rgba(214,160,190,.45),rgba(214,160,190,0));"></div>
<div style="left:0px;top:24px;width:1920px;height:1px;background:#6c6b86;"></div>
<div style="left:0px;top:25px;width:1920px;height:1px;background:#4e4d66;"></div>
<div style="left:760px;top:1px;width:400px;height:23px;background:radial-gradient(ellipse at center,rgba(255,255,255,.34) 0%,rgba(255,255,255,.22) 45%,rgba(255,255,255,0) 72%);"></div>
<div style="left:0px;top:4.50px;font-size:13px;line-height:18px;color:#000;white-space:nowrap;width:1920px;text-align:center;transform:scaleX(0.95);transform-origin:50% 50%;text-shadow:0 0 5px rgba(255,255,255,.85),0 0 9px rgba(255,255,255,.7),0 0 3px rgba(255,255,255,.7);">ПЗ ЖД [Режим ограниченной функциональности] - Microsoft Word</div>
<svg style="position:absolute;left:30px;top:0" width="120" height="26" viewBox="0 0 120 26"><path d="M8 2.5 H88 Q102 3 102 13 Q102 23 88 23.5 H18 Q15 10 8 2.5 Z" fill="rgba(222,222,238,.55)" stroke="rgba(80,75,100,.8)" stroke-width="1"/><path d="M9 3.5 H88 Q100 4 101 13" fill="none" stroke="rgba(255,255,255,.35)" stroke-width="1"/></svg>
<svg style="position:absolute;left:53px;top:6px" width="15" height="15" viewBox="0 0 15 15"><rect x="0.5" y="0.5" width="14" height="14" fill="#3b3bb8" stroke="#1d1d7a"/><rect x="3" y="1" width="9" height="6.5" fill="#f4f4fa"/><rect x="3.5" y="9.5" width="8" height="5" fill="#8d8dd8"/><rect x="5" y="10.5" width="2.5" height="3.5" fill="#111"/></svg>
<svg style="position:absolute;left:75px;top:6px" width="50" height="15" viewBox="0 0 50 15"><path d="M2 3 L2 8 L7 8 M2.5 7.5 Q6 1.5 10.5 4.5 Q13 8 8 12.5" fill="none" stroke="#a9b1d2" stroke-width="2"/><path d="M19 6.5 L21.5 9 L24 6.5" fill="none" stroke="#b9bdd6" stroke-width="1.3"/><path d="M40 2.5 L40 7 M36 3.5 Q32 7 35 11 Q39 14 43 11 Q46 7 42.5 3.5" fill="none" stroke="#a9b1d2" stroke-width="2"/></svg>
<svg style="position:absolute;left:139px;top:8px" width="10" height="9" viewBox="0 0 10 9"><rect x="1.5" y="0.5" width="7" height="1.6" fill="#15277c"/><path d="M1 4 H9 L5 8 Z" fill="#15277c"/></svg>
<svg style="position:absolute;left:1811px;top:0" width="109" height="21" viewBox="0 0 109 21"><defs><linearGradient id="wbg" x1="0" y1="0" x2="0" y2="1"><stop offset="0" stop-color="#c9c8d8"/><stop offset=".48" stop-color="#b4b3c8"/><stop offset=".5" stop-color="#8c8baa"/><stop offset="1" stop-color="#a19fba"/></linearGradient><linearGradient id="wbr" x1="0" y1="0" x2="0" y2="1"><stop offset="0" stop-color="#e8a89c"/><stop offset=".48" stop-color="#d98472"/><stop offset=".5" stop-color="#c03a22"/><stop offset="1" stop-color="#d8775c"/></linearGradient></defs><path d="M1.5 0 V11 Q1.5 18.5 9 18.5 H99 Q106.500 18.5 106.500 11 V0 Z" fill="rgba(255,255,255,.55)"/><path d="M3 0 V11 Q3 17.500 9 17.500 H31 V0 Z" fill="url(#wbg)"/><rect x="32" y="0" width="26" height="17.500" fill="url(#wbg)"/><path d="M59 0 V17.500 H99 Q105.500 17.500 105.500 11 V0 Z" fill="url(#wbr)"/><path d="M2.5 0 V11 Q2.5 17.500 9 17.500 H99 Q105.500 17.500 105.500 11 V0" fill="none" stroke="#3e3c52" stroke-width="1"/><path d="M31.500 0 V17 M58.500 0 V17" stroke="#4d4b63" stroke-width="1"/><rect x="12" y="8.5" width="10" height="3.500" fill="#fff" stroke="#555468" stroke-width=".8"/><rect x="41.500" y="3" width="8" height="7.500" fill="none" stroke="#fff" stroke-width="2"/><rect x="38.500" y="6" width="8" height="7.500" fill="#9a98b4" stroke="#fff" stroke-width="2"/><path d="M40.500 2 h10 v9.500 M37.500 5 h10 v9.500 h-10 z" fill="none" stroke="#555468" stroke-width=".6"/><path d="M77.500 4.500 L86.500 12.500 M86.500 4.500 L77.500 12.500" stroke="#5a3a3a" stroke-width="4.200"/><path d="M77.500 4.500 L86.500 12.500 M86.500 4.500 L77.500 12.500" stroke="#fff" stroke-width="2.600"/></svg>
<div style="left:0px;top:26px;width:1920px;height:24px;background:#bfdbff;"></div>
<svg style="position:absolute;left:45.500px;top:26px" width="73" height="25" viewBox="0 0 73 25"><defs><linearGradient id="tabg" x1="0" y1="0" x2="0" y2="1"><stop offset="0" stop-color="#e8f1fc"/><stop offset=".4" stop-color="#e1ebf8"/><stop offset="1" stop-color="#dbe6f5"/></linearGradient></defs><path d="M0.5 25 Q3 24 3.500 20 V5 Q3.500 1.500 7 1.500 H64.500 Q68 1.500 68 5 V20 Q68.500 24 71.500 25 Z" fill="url(#tabg)" stroke="#a0bfe6" stroke-width="1"/><path d="M4.500 20 V5.500 Q4.500 2.500 7.500 2.500 H64 Q67 2.500 67 5.500 V20" fill="none" stroke="rgba(255,255,255,.8)" stroke-width="1"/></svg>
<div style="left:59px;top:31.00px;font-size:12px;line-height:16px;color:#15428b;white-space:nowrap;transform:scaleX(0.92);transform-origin:0 50%;">Главная</div>
<div style="left:130px;top:31.00px;font-size:12px;line-height:16px;color:#15428b;white-space:nowrap;transform:scaleX(0.92);transform-origin:0 50%;">Вставка</div>
<div style="left:200px;top:31.00px;font-size:12px;line-height:16px;color:#15428b;white-space:nowrap;transform:scaleX(0.92);transform-origin:0 50%;">Разметка страницы</div>
<div style="left:332px;top:31.00px;font-size:12px;line-height:16px;color:#15428b;white-space:nowrap;transform:scaleX(0.92);transform-origin:0 50%;">Ссылки</div>
<div style="left:400px;top:31.00px;font-size:12px;line-height:16px;color:#15428b;white-space:nowrap;transform:scaleX(0.92);transform-origin:0 50%;">Рассылки</div>
<div style="left:479px;top:31.00px;font-size:12px;line-height:16px;color:#15428b;white-space:nowrap;transform:scaleX(0.92);transform-origin:0 50%;">Рецензирование</div>
<div style="left:598px;top:31.00px;font-size:12px;line-height:16px;color:#15428b;white-space:nowrap;transform:scaleX(0.92);transform-origin:0 50%;">Вид</div>
<svg style="position:absolute;left:1901px;top:29px" width="16" height="16" viewBox="0 0 16 16"><defs><radialGradient id="hg" cx=".4" cy=".3" r=".8"><stop offset="0" stop-color="#5b8cf0"/><stop offset=".6" stop-color="#1c4fc4"/><stop offset="1" stop-color="#0a2c8c"/></radialGradient></defs><circle cx="8" cy="8" r="7.300" fill="#fff" stroke="#9db4d8" stroke-width=".6"/><circle cx="8" cy="8" r="6" fill="url(#hg)"/><text x="8" y="12" font-size="10.500" font-weight="bold" fill="#fff" text-anchor="middle" font-family="Liberation Sans,sans-serif">?</text></svg>
<div style="left:0px;top:50px;width:1920px;height:90px;background:#bfdbff;"></div>
<div style="left:2px;top:50px;width:1916px;height:89px;border:1px solid #8db2e3;border-radius:4px;box-sizing:border-box;background:linear-gradient(180deg,#dbe7f6 0%,#cfdff2 100%);"></div>
<div style="left:0px;top:138px;width:1920px;height:1px;background:#dff0fc;"></div>
<div style="left:0px;top:139px;width:1920px;height:2px;background:linear-gradient(180deg,#a4bee4,#9fbbe2);"></div>
<div style="left:0px;top:141px;width:1920px;height:5px;background:linear-gradient(180deg,#b2ccef,#a8c5ed);"></div>
<div style="left:5px;top:52px;width:188px;height:85px;border:1px solid #a9c2e2;border-radius:4px;box-sizing:border-box;background:linear-gradient(180deg,#dde8f6 0%,#d6e3f3 18%,#c9daef 19%,#d0dff1 60%,#d9e5f4 100%);"></div>
<div style="left:6px;top:121px;width:186px;height:15px;background:#c2d8f0;border-radius:0 0 3px 3px;"></div>
<div style="left:6px;top:53px;width:186px;height:83px;border:1px solid rgba(255,255,255,.55);border-radius:3px;box-sizing:border-box;"></div>
<div style="left:5px;top:122.00px;font-size:12px;line-height:15px;color:#4672b4;white-space:nowrap;width:170px;text-align:center;transform:scaleX(0.92);transform-origin:50% 50%;">Буфер обмена</div>
<svg style="position:absolute;left:181px;top:124px" width="9" height="9" viewBox="0 0 9 9"><path d="M0.5 5 V0.5 H5" fill="none" stroke="#7a8fb0" stroke-width="1"/><path d="M3 3 L8 8 M8 4.500 V8 H4.500" fill="none" stroke="#6b82a8" stroke-width="1.200"/><rect x="4" y="4" width="4.500" height="4.500" fill="rgba(255,255,255,.7)"/><path d="M8 4.500 V8 H4.500 Z" fill="#6b82a8"/></svg>
<div style="left:197px;top:52px;width:262px;height:85px;border:1px solid #a9c2e2;border-radius:4px;box-sizing:border-box;background:linear-gradient(180deg,#dde8f6 0%,#d6e3f3 18%,#c9daef 19%,#d0dff1 60%,#d9e5f4 100%);"></div>
<div style="left:198px;top:121px;width:260px;height:15px;background:#c2d8f0;border-radius:0 0 3px 3px;"></div>
<div style="left:198px;top:53px;width:260px;height:83px;border:1px solid rgba(255,255,255,.55);border-radius:3px;box-sizing:border-box;"></div>
<div style="left:197px;top:122.00px;font-size:12px;line-height:15px;color:#4672b4;white-space:nowrap;width:244px;text-align:center;transform:scaleX(0.92);transform-origin:50% 50%;">Шрифт</div>
<svg style="position:absolute;left:447px;top:124px" width="9" height="9" viewBox="0 0 9 9"><path d="M0.5 5 V0.5 H5" fill="none" stroke="#7a8fb0" stroke-width="1"/><path d="M3 3 L8 8 M8 4.500 V8 H4.500" fill="none" stroke="#6b82a8" stroke-width="1.200"/><rect x="4" y="4" width="4.500" height="4.500" fill="rgba(255,255,255,.7)"/><path d="M8 4.500 V8 H4.500 Z" fill="#6b82a8"/></svg>
<div style="left:462px;top:52px;width:209px;height:85px;border:1px solid #a9c2e2;border-radius:4px;box-sizing:border-box;background:linear-gradient(180deg,#dde8f6 0%,#d6e3f3 18%,#c9daef 19%,#d0dff1 60%,#d9e5f4 100%);"></div>
<div style="left:463px;top:121px;width:207px;height:15px;background:#c2d8f0;border-radius:0 0 3px 3px;"></div>
<div style="left:463px;top:53px;width:207px;height:83px;border:1px solid rgba(255,255,255,.55);border-radius:3px;box-sizing:border-box;"></div>
<div style="left:462px;top:122.00px;font-size:12px;line-height:15px;color:#4672b4;white-space:nowrap;width:191px;text-align:center;transform:scaleX(0.92);transform-origin:50% 50%;">Абзац</div>
<svg style="position:absolute;left:659px;top:124px" width="9" height="9" viewBox="0 0 9 9"><path d="M0.5 5 V0.5 H5" fill="none" stroke="#7a8fb0" stroke-width="1"/><path d="M3 3 L8 8 M8 4.500 V8 H4.500" fill="none" stroke="#6b82a8" stroke-width="1.200"/><rect x="4" y="4" width="4.500" height="4.500" fill="rgba(255,255,255,.7)"/><path d="M8 4.500 V8 H4.500 Z" fill="#6b82a8"/></svg>
<div style="left:674px;top:52px;width:1094px;height:85px;border:1px solid #a9c2e2;border-radius:4px;box-sizing:border-box;background:linear-gradient(180deg,#dde8f6 0%,#d6e3f3 18%,#c9daef 19%,#d0dff1 60%,#d9e5f4 100%);"></div>
<div style="left:675px;top:121px;width:1092px;height:15px;background:#c2d8f0;border-radius:0 0 3px 3px;"></div>
<div style="left:675px;top:53px;width:1092px;height:83px;border:1px solid rgba(255,255,255,.55);border-radius:3px;box-sizing:border-box;"></div>
<div style="left:674px;top:122.00px;font-size:12px;line-height:15px;color:#4672b4;white-space:nowrap;width:1076px;text-align:center;transform:scaleX(0.92);transform-origin:50% 50%;">Стили</div>
<svg style="position:absolute;left:1756px;top:124px" width="9" height="9" viewBox="0 0 9 9"><path d="M0.5 5 V0.5 H5" fill="none" stroke="#7a8fb0" stroke-width="1"/><path d="M3 3 L8 8 M8 4.500 V8 H4.500" fill="none" stroke="#6b82a8" stroke-width="1.200"/><rect x="4" y="4" width="4.500" height="4.500" fill="rgba(255,255,255,.7)"/><path d="M8 4.500 V8 H4.500 Z" fill="#6b82a8"/></svg>
<div style="left:1771.5px;top:52px;width:93.5px;height:85px;border:1px solid #a9c2e2;border-radius:4px;box-sizing:border-box;background:linear-gradient(180deg,#dde8f6 0%,#d6e3f3 18%,#c9daef 19%,#d0dff1 60%,#d9e5f4 100%);"></div>
<div style="left:1772.5px;top:121px;width:91.5px;height:15px;background:#c2d8f0;border-radius:0 0 3px 3px;"></div>
<div style="left:1772.5px;top:53px;width:91.5px;height:83px;border:1px solid rgba(255,255,255,.55);border-radius:3px;box-sizing:border-box;"></div>
<div style="left:1771.5px;top:122.00px;font-size:12px;line-height:15px;color:#4672b4;white-space:nowrap;width:93.5px;text-align:center;transform:scaleX(0.92);transform-origin:50% 50%;">Редактирование</div>
<svg style="position:absolute;left:18px;top:55px" width="32" height="34" viewBox="0 0 32 34"><rect x="3" y="5" width="22" height="25" rx="1.500" fill="#f2c265" stroke="#c08a2e"/><rect x="9" y="1.500" width="10" height="6" rx="1.500" fill="#d8d8d8" stroke="#8a8a8a"/><circle cx="14" cy="3.500" r="1.200" fill="#666"/><path d="M11.500 13.500 H24 L28.500 18 V32.500 H11.500 Z" fill="#fff" stroke="#8a96a8"/><path d="M24 13.500 V18 H28.500" fill="#dde4ee" stroke="#8a96a8"/><path d="M14 20.500 H26 M14 23 H26 M14 25.500 H26 M14 28 H26 M14 30 H26" stroke="#b8bfcc" stroke-width=".9"/></svg>
<div style="left:5px;top:91.00px;font-size:12.5px;line-height:16px;color:#15428b;white-space:nowrap;width:57px;text-align:center;transform:scaleX(0.92);transform-origin:50% 50%;">Вставить</div>
<svg style="position:absolute;left:30.5px;top:109.5px" width="5.500" height="3.200" viewBox="0 0 7 4"><path d="M0 0 H7 L3.500 4 Z" fill="#5b7fb8"/></svg>
<svg style="position:absolute;left:65px;top:57px" width="12" height="14" viewBox="0 0 12 14"><path d="M3 0.500 L7.500 9 M9 0.500 L4.500 9" stroke="#9aa3b5" stroke-width="1.300" fill="none"/><circle cx="3" cy="11" r="2" fill="none" stroke="#8ea0c8" stroke-width="1.300"/><circle cx="9" cy="11" r="2" fill="none" stroke="#8ea0c8" stroke-width="1.300"/></svg>
<div style="left:82px;top:57.00px;font-size:12px;line-height:16px;color:#8d8d8d;white-space:nowrap;transform:scaleX(0.92);transform-origin:0 50%;">Вырезать</div>
<svg style="position:absolute;left:63px;top:80px" width="16" height="14" viewBox="0 0 16 14"><path d="M0.500 0.500 H6 L8.500 3 V9.500 H0.500 Z" fill="#f4f6fa" stroke="#a8b0c0"/><path d="M6.500 4.500 H12 L14.500 7 V13.500 H6.500 Z" fill="#f4f6fa" stroke="#a8b0c0"/><path d="M8 8 H13 M8 10 H13 M8 12 H13" stroke="#c4cad6" stroke-width=".8"/></svg>
<div style="left:82px;top:79.00px;font-size:12px;line-height:16px;color:#8d8d8d;white-space:nowrap;transform:scaleX(0.92);transform-origin:0 50%;">Копировать</div>
<svg style="position:absolute;left:63px;top:101px" width="18" height="15" viewBox="0 0 18 15"><path d="M11 5 L15.500 0.800 L17.200 2.500 L13 7 Z" fill="#4a4a9a" stroke="#2a2a6a" stroke-width=".6"/><path d="M9.500 5.500 L12.500 8.500 L11 10 L8 7 Z" fill="#c8c8d0" stroke="#777" stroke-width=".5"/><path d="M1 8 Q5 5 8.500 6.500 L11.500 9.500 Q10 13 6.500 14.500 Q4 11 1 8 Z" fill="#f3df8a" stroke="#a89030" stroke-width=".7"/></svg>
<div style="left:82px;top:101.00px;font-size:12px;line-height:16px;color:#15428b;white-space:nowrap;transform:scaleX(0.92);transform-origin:0 50%;">Формат по образцу</div>
<div style="left:202px;top:62px;width:122px;height:21px;background:#eaf2fb;border:1px solid #b3cbe8;box-sizing:border-box;"></div>
<div style="left:204px;top:64.50px;font-size:12px;line-height:16px;color:#000;white-space:nowrap;transform:scaleX(0.92);transform-origin:0 50%;">Times New Roman</div>
<svg style="position:absolute;left:314.5px;top:71.0px" width="5.500" height="3.200" viewBox="0 0 7 4"><path d="M0 0 H7 L3.500 4 Z" fill="#5b7fb8"/></svg>
<div style="left:325px;top:62px;width:55px;height:21px;background:#eaf2fb;border:1px solid #b3cbe8;box-sizing:border-box;"></div>
<div style="left:328px;top:64.50px;font-size:12px;line-height:16px;color:#000;white-space:nowrap;transform:scaleX(0.92);transform-origin:0 50%;">14</div>
<svg style="position:absolute;left:369.5px;top:71.0px" width="5.500" height="3.200" viewBox="0 0 7 4"><path d="M0 0 H7 L3.500 4 Z" fill="#5b7fb8"/></svg>
<div style="left:383px;top:62px;width:45px;height:21px;border:1px solid #9ebbe0;border-radius:3px;box-sizing:border-box;background:linear-gradient(180deg,#dce8f7 0%,#d3e1f4 45%,#c4d6ee 50%,#cddcf1 100%);"></div>
<div style="left:405px;top:63px;width:1px;height:19px;background:#a9c2e2;"></div>
<div style="left:406px;top:63px;width:1px;height:19px;background:rgba(255,255,255,.55);"></div>
<div style="left:386px;top:62px;width:19px;height:21px;font-family:'Liberation Serif',serif;font-weight:bold;font-size:17px;line-height:23px;color:#333;">A</div>
<svg style="position:absolute;left:397px;top:66px" width="6" height="4" viewBox="0 0 6 4"><path d="M0 4 H6 L3 0 Z" fill="#3f63b0"/></svg>
<div style="left:410px;top:62px;width:19px;height:21px;font-family:'Liberation Serif',serif;font-weight:bold;font-size:13px;line-height:27px;color:#333;">A</div>
<svg style="position:absolute;left:418px;top:66px" width="6" height="4" viewBox="0 0 6 4"><path d="M0 0 H6 L3 4 Z" fill="#3f63b0"/></svg>
<div style="left:431px;top:62px;width:24px;height:21px;border:1px solid #9ebbe0;border-radius:3px;box-sizing:border-box;background:linear-gradient(180deg,#dce8f7 0%,#d3e1f4 45%,#c4d6ee 50%,#cddcf1 100%);"></div>
<svg style="position:absolute;left:434px;top:64px" width="18" height="17" viewBox="0 0 18 17"><rect x="1.500" y="1.500" width="11" height="8" fill="#fff" stroke="#8a96b0" stroke-width=".8"/><text x="7" y="8.300" font-size="7" text-anchor="middle" font-family="Liberation Sans,sans-serif" fill="#223">Aa</text><path d="M8 12.500 L13.500 7 L16.500 10 L11 15.500 Z" fill="#f4f4f8" stroke="#7d86a0" stroke-width=".9"/><path d="M8 12.500 L9.500 11 L12.500 14 L11 15.500 Z" fill="#d8a8b8"/></svg>
<div style="left:201px;top:91px;width:184px;height:22px;border:1px solid #9ebbe0;border-radius:3px;box-sizing:border-box;background:linear-gradient(180deg,#dce8f7 0%,#d3e1f4 45%,#c4d6ee 50%,#cddcf1 100%);"></div>
<div style="left:224px;top:92px;width:1px;height:20px;background:#a9c2e2;"></div>
<div style="left:225px;top:92px;width:1px;height:20px;background:rgba(255,255,255,.55);"></div>
<div style="left:248px;top:92px;width:1px;height:20px;background:#a9c2e2;"></div>
<div style="left:249px;top:92px;width:1px;height:20px;background:rgba(255,255,255,.55);"></div>
<div style="left:282px;top:92px;width:1px;height:20px;background:#a9c2e2;"></div>
<div style="left:283px;top:92px;width:1px;height:20px;background:rgba(255,255,255,.55);"></div>
<div style="left:306px;top:92px;width:1px;height:20px;background:#a9c2e2;"></div>
<div style="left:307px;top:92px;width:1px;height:20px;background:rgba(255,255,255,.55);"></div>
<div style="left:330px;top:92px;width:1px;height:20px;background:#a9c2e2;"></div>
<div style="left:331px;top:92px;width:1px;height:20px;background:rgba(255,255,255,.55);"></div>
<div style="left:354px;top:92px;width:1px;height:20px;background:#a9c2e2;"></div>
<div style="left:355px;top:92px;width:1px;height:20px;background:rgba(255,255,255,.55);"></div>
<div style="left:202px;top:91px;width:22px;height:22px;text-align:center;font-family:'Liberation Serif',serif;font-weight:bold;font-size:15px;line-height:22px;color:#111;">Ж</div>
<div style="left:225px;top:91px;width:22px;height:22px;text-align:center;font-family:'Liberation Serif',serif;font-weight:bold;font-style:italic;font-size:15px;line-height:22px;color:#111;">К</div>
<div style="left:249px;top:91px;width:22px;height:22px;text-align:center;font-family:'Liberation Serif',serif;font-weight:bold;font-size:15px;line-height:21px;color:#111;text-decoration:underline;">Ч</div>
<svg style="position:absolute;left:273.5px;top:100.5px" width="5.500" height="3.200" viewBox="0 0 7 4"><path d="M0 0 H7 L3.500 4 Z" fill="#5b7fb8"/></svg>
<div style="left:283px;top:91px;width:23px;height:22px;text-align:center;font-family:'Liberation Serif',serif;font-size:13px;line-height:22px;color:#222;text-decoration:line-through;">abc</div>
<div style="left:307px;top:91px;width:23px;height:22px;text-align:center;font-weight:bold;font-size:14px;line-height:22px;color:#111;">x<span style="font-size:7px;color:#2a5ac0;position:relative;top:3px;line-height:0">2</span></div>
<div style="left:331px;top:91px;width:23px;height:22px;text-align:center;font-weight:bold;font-size:14px;line-height:22px;color:#111;">x<span style="font-size:7px;color:#2a5ac0;position:relative;top:-5px;line-height:0">2</span></div>
<div style="left:355px;top:91px;width:22px;height:22px;text-align:center;font-family:'Liberation Serif',serif;font-weight:bold;font-size:14px;line-height:23px;color:#222;">Aa</div>
<svg style="position:absolute;left:376.5px;top:100.5px" width="5.500" height="3.200" viewBox="0 0 7 4"><path d="M0 0 H7 L3.500 4 Z" fill="#5b7fb8"/></svg>
<div style="left:388px;top:91px;width:67px;height:22px;border:1px solid #9ebbe0;border-radius:3px;box-sizing:border-box;background:linear-gradient(180deg,#dce8f7 0%,#d3e1f4 45%,#c4d6ee 50%,#cddcf1 100%);"></div>
<div style="left:421px;top:92px;width:1px;height:20px;background:#a9c2e2;"></div>
<div style="left:422px;top:92px;width:1px;height:20px;background:rgba(255,255,255,.55);"></div>
<svg style="position:absolute;left:391px;top:93px" width="18" height="18" viewBox="0 0 18 18"><rect x="0.500" y="1" width="9" height="9" fill="#fff25a"/><text x="5" y="8.500" font-size="8.500" text-anchor="middle" font-family="Liberation Sans,sans-serif" fill="#222">ab</text><path d="M8 11 L14 3 L16.500 4.500 L10.500 12.500 Z" fill="#e8ecf6" stroke="#7080a8" stroke-width=".8"/><path d="M8 11 L7 13.500 L10.500 12.500 Z" fill="#555"/><rect x="1" y="14" width="16" height="3.500" fill="#ffee00"/></svg>
<svg style="position:absolute;left:411.5px;top:100.5px" width="5.500" height="3.200" viewBox="0 0 7 4"><path d="M0 0 H7 L3.500 4 Z" fill="#5b7fb8"/></svg>
<div style="left:423px;top:90px;width:20px;height:18px;text-align:center;font-family:'Liberation Serif',serif;font-weight:bold;font-size:17px;line-height:19px;color:#2a52a8;">A</div>
<div style="left:425px;top:106.5px;width:16px;height:3.5px;background:#ee1111;"></div>
<svg style="position:absolute;left:445.5px;top:100.5px" width="5.500" height="3.200" viewBox="0 0 7 4"><path d="M0 0 H7 L3.500 4 Z" fill="#5b7fb8"/></svg>
<div style="left:466px;top:62px;width:99px;height:21px;border:1px solid #9ebbe0;border-radius:3px;box-sizing:border-box;background:linear-gradient(180deg,#dce8f7 0%,#d3e1f4 45%,#c4d6ee 50%,#cddcf1 100%);"></div>
<div style="left:499px;top:63px;width:1px;height:19px;background:#a9c2e2;"></div>
<div style="left:500px;top:63px;width:1px;height:19px;background:rgba(255,255,255,.55);"></div>
<div style="left:534px;top:63px;width:1px;height:19px;background:#a9c2e2;"></div>
<div style="left:535px;top:63px;width:1px;height:19px;background:rgba(255,255,255,.55);"></div>
<svg style="position:absolute;left:471px;top:65px;" width="16" height="16" viewBox="0 0 16 16"><circle cx="2" cy="3.8" r="1.300" fill="#2a52a8"/><rect x="5" y="3" width="10" height="1.6" fill="#222"/><circle cx="2" cy="8.8" r="1.300" fill="#2a52a8"/><rect x="5" y="8" width="10" height="1.6" fill="#222"/><circle cx="2" cy="13.8" r="1.300" fill="#2a52a8"/><rect x="5" y="13" width="10" height="1.6" fill="#222"/></svg>
<svg style="position:absolute;left:490.5px;top:71.0px" width="5.500" height="3.200" viewBox="0 0 7 4"><path d="M0 0 H7 L3.500 4 Z" fill="#5b7fb8"/></svg>
<svg style="position:absolute;left:504px;top:65px;" width="16" height="16" viewBox="0 0 16 16"><text x="0" y="5.5" font-size="5.500" font-weight="bold" font-family="Liberation Sans,sans-serif" fill="#2a52a8">1</text><rect x="5" y="3" width="10" height="1.6" fill="#222"/><text x="0" y="10.5" font-size="5.500" font-weight="bold" font-family="Liberation Sans,sans-serif" fill="#2a52a8">2</text><rect x="5" y="8" width="10" height="1.6" fill="#222"/><text x="0" y="15.5" font-size="5.500" font-weight="bold" font-family="Liberation Sans,sans-serif" fill="#2a52a8">3</text><rect x="5" y="13" width="10" height="1.6" fill="#222"/></svg>
<svg style="position:absolute;left:525.5px;top:71.0px" width="5.500" height="3.200" viewBox="0 0 7 4"><path d="M0 0 H7 L3.500 4 Z" fill="#5b7fb8"/></svg>
<svg style="position:absolute;left:538px;top:65px;" width="16" height="17" viewBox="0 0 16 17"><rect x="4" y="2" width="10" height="1.6" fill="#222"/><rect x="7" y="7.5" width="5" height="1.6" fill="#222"/><rect x="10" y="13" width="4" height="1.6" fill="#222"/><text x="0" y="4.500" font-size="5" font-weight="bold" font-family="Liberation Sans,sans-serif" fill="#2a52a8">1</text><text x="3" y="10" font-size="5" font-weight="bold" font-family="Liberation Sans,sans-serif" fill="#2a52a8">a</text><text x="7" y="15.500" font-size="5" font-weight="bold" font-family="Liberation Sans,sans-serif" fill="#2a52a8">i</text></svg>
<svg style="position:absolute;left:556.5px;top:71.0px" width="5.500" height="3.200" viewBox="0 0 7 4"><path d="M0 0 H7 L3.500 4 Z" fill="#5b7fb8"/></svg>
<div style="left:568px;top:62px;width:45px;height:21px;border:1px solid #9ebbe0;border-radius:3px;box-sizing:border-box;background:linear-gradient(180deg,#dce8f7 0%,#d3e1f4 45%,#c4d6ee 50%,#cddcf1 100%);"></div>
<div style="left:590px;top:63px;width:1px;height:19px;background:#a9c2e2;"></div>
<div style="left:591px;top:63px;width:1px;height:19px;background:rgba(255,255,255,.55);"></div>
<svg style="position:absolute;left:571px;top:65px;" width="17" height="16" viewBox="0 0 17 16"><rect x="3" y="1" width="13" height="1.5" fill="#111"/><rect x="8" y="4.5" width="8" height="1.5" fill="#111"/><rect x="8" y="8" width="8" height="1.5" fill="#111"/><rect x="3" y="11.5" width="13" height="1.5" fill="#111"/><path d="M6 6.500 H1 M3 4.500 L1 6.500 L3 8.500" stroke="#2a52a8" stroke-width="1.200" fill="none"/><path d="M7 0 V16" stroke="#333" stroke-width=".8" stroke-dasharray="1 1"/></svg>
<svg style="position:absolute;left:593px;top:65px;" width="17" height="16" viewBox="0 0 17 16"><rect x="3" y="1" width="13" height="1.5" fill="#111"/><rect x="8" y="4.5" width="8" height="1.5" fill="#111"/><rect x="8" y="8" width="8" height="1.5" fill="#111"/><rect x="3" y="11.5" width="13" height="1.5" fill="#111"/><path d="M0 6.500 H5 M3 4.500 L5 6.500 L3 8.500" stroke="#2a52a8" stroke-width="1.200" fill="none"/><path d="M7 0 V16" stroke="#333" stroke-width=".8" stroke-dasharray="1 1"/></svg>
<div style="left:616px;top:62px;width:24px;height:21px;border:1px solid #9ebbe0;border-radius:3px;box-sizing:border-box;background:linear-gradient(180deg,#dce8f7 0%,#d3e1f4 45%,#c4d6ee 50%,#cddcf1 100%);"></div>
<svg style="position:absolute;left:620px;top:64px;" width="18" height="18" viewBox="0 0 18 18"><text x="0" y="8" font-size="9" font-weight="bold" font-family="Liberation Serif,serif" fill="#2a52a8">A</text><text x="0" y="17" font-size="9" font-weight="bold" font-family="Liberation Serif,serif" fill="#a03030">Я</text><path d="M12 1 V15 M9.500 12 L12 16 L14.500 12 Z" stroke="#111" stroke-width="1.300" fill="#111"/></svg>
<div style="left:644px;top:62px;width:23px;height:21px;border:1px solid #9ebbe0;border-radius:3px;box-sizing:border-box;background:linear-gradient(180deg,#dce8f7 0%,#d3e1f4 45%,#c4d6ee 50%,#cddcf1 100%);"></div>
<div style="left:644px;top:61px;width:23px;height:22px;text-align:center;font-size:17px;font-weight:bold;line-height:22px;color:#111;">¶</div>
<div style="left:466px;top:91px;width:93px;height:22px;border:1px solid #9ebbe0;border-radius:3px;box-sizing:border-box;background:linear-gradient(180deg,#dce8f7 0%,#d3e1f4 45%,#c4d6ee 50%,#cddcf1 100%);"></div>
<div style="left:489px;top:92px;width:1px;height:20px;background:#a9c2e2;"></div>
<div style="left:490px;top:92px;width:1px;height:20px;background:rgba(255,255,255,.55);"></div>
<div style="left:512px;top:92px;width:1px;height:20px;background:#a9c2e2;"></div>
<div style="left:513px;top:92px;width:1px;height:20px;background:rgba(255,255,255,.55);"></div>
<div style="left:536px;top:92px;width:1px;height:20px;background:#a9c2e2;"></div>
<div style="left:537px;top:92px;width:1px;height:20px;background:rgba(255,255,255,.55);"></div>
<div style="left:489px;top:92px;width:24px;height:20px;background:linear-gradient(180deg,#fde3a8 0%,#fbc868 45%,#f9b240 50%,#fcd888 100%);"></div>
<svg style="position:absolute;left:470.5px;top:94px;" width="15" height="17" viewBox="0 0 15 17"><rect x="0" y="1" width="15" height="1.7" fill="#111"/><rect x="0" y="4.5" width="10" height="1.7" fill="#111"/><rect x="0" y="8" width="15" height="1.7" fill="#111"/><rect x="0" y="11.5" width="10" height="1.7" fill="#111"/><rect x="0" y="15" width="15" height="1.7" fill="#111"/></svg>
<svg style="position:absolute;left:493.5px;top:94px;" width="15" height="17" viewBox="0 0 15 17"><rect x="0.0" y="1" width="15" height="1.7" fill="#111"/><rect x="2.5" y="4.5" width="10" height="1.7" fill="#111"/><rect x="0.0" y="8" width="15" height="1.7" fill="#111"/><rect x="2.5" y="11.5" width="10" height="1.7" fill="#111"/><rect x="0.0" y="15" width="15" height="1.7" fill="#111"/></svg>
<svg style="position:absolute;left:517px;top:94px;" width="15" height="17" viewBox="0 0 15 17"><rect x="0" y="1" width="15" height="1.7" fill="#111"/><rect x="5" y="4.5" width="10" height="1.7" fill="#111"/><rect x="0" y="8" width="15" height="1.7" fill="#111"/><rect x="5" y="11.5" width="10" height="1.7" fill="#111"/><rect x="0" y="15" width="15" height="1.7" fill="#111"/></svg>
<svg style="position:absolute;left:540.5px;top:94px;" width="15" height="17" viewBox="0 0 15 17"><rect x="0" y="1" width="15" height="1.7" fill="#111"/><rect x="0" y="4.5" width="15" height="1.7" fill="#111"/><rect x="0" y="8" width="15" height="1.7" fill="#111"/><rect x="0" y="11.5" width="15" height="1.7" fill="#111"/><rect x="0" y="15" width="15" height="1.7" fill="#111"/></svg>
<div style="left:562px;top:91px;width:32px;height:22px;border:1px solid #9ebbe0;border-radius:3px;box-sizing:border-box;background:linear-gradient(180deg,#dce8f7 0%,#d3e1f4 45%,#c4d6ee 50%,#cddcf1 100%);"></div>
<svg style="position:absolute;left:566px;top:93.5px;" width="18" height="17" viewBox="0 0 18 17"><path d="M3 1 V16 M0.800 4 L3 0.800 L5.200 4 Z M0.800 13 L3 16.200 L5.200 13 Z" stroke="#2a52a8" stroke-width="1.200" fill="#2a52a8"/><rect x="8" y="2" width="9" height="1.6" fill="#111"/><rect x="8" y="5.5" width="9" height="1.6" fill="#111"/><rect x="8" y="9" width="9" height="1.6" fill="#111"/><rect x="8" y="12.5" width="9" height="1.6" fill="#111"/></svg>
<svg style="position:absolute;left:585.5px;top:100.5px" width="5.500" height="3.200" viewBox="0 0 7 4"><path d="M0 0 H7 L3.500 4 Z" fill="#5b7fb8"/></svg>
<div style="left:597px;top:91px;width:67px;height:22px;border:1px solid #9ebbe0;border-radius:3px;box-sizing:border-box;background:linear-gradient(180deg,#dce8f7 0%,#d3e1f4 45%,#c4d6ee 50%,#cddcf1 100%);"></div>
<div style="left:631px;top:92px;width:1px;height:20px;background:#a9c2e2;"></div>
<div style="left:632px;top:92px;width:1px;height:20px;background:rgba(255,255,255,.55);"></div>
<svg style="position:absolute;left:601px;top:93px;" width="20" height="19" viewBox="0 0 20 19"><path d="M4 9 L10 3 L16 9 L10 14 Z" fill="#f4f6fb" stroke="#556" stroke-width="1"/><path d="M9 1 V7" stroke="#556" stroke-width="1.300"/><path d="M15.500 8 Q19 11 17 15 Q15 12 15.500 8" fill="#4a7ad0"/><rect x="2" y="15" width="15" height="3" fill="#fff" stroke="#9a9a9a" stroke-width=".7"/></svg>
<svg style="position:absolute;left:621.5px;top:100.5px" width="5.500" height="3.200" viewBox="0 0 7 4"><path d="M0 0 H7 L3.500 4 Z" fill="#5b7fb8"/></svg>
<svg style="position:absolute;left:636px;top:94px;" width="15" height="16" viewBox="0 0 15 16"><path d="M0.500 1 H13.500 M0.500 7 H13.500 M0.500 1 V13 M7 1 V13 M13.500 1 V13" stroke="#666" stroke-width="1" stroke-dasharray="1 1" fill="none"/><path d="M0 14 H14" stroke="#111" stroke-width="1.600"/></svg>
<svg style="position:absolute;left:654.5px;top:100.5px" width="5.500" height="3.200" viewBox="0 0 7 4"><path d="M0 0 H7 L3.500 4 Z" fill="#5b7fb8"/></svg>
<div style="left:679px;top:58px;width:1011px;height:58px;border:1px solid #b8cde8;box-sizing:border-box;background:#d9e6f6;"></div>
<div style="left:684px;top:63px;width:64px;height:48px;background:#fff;overflow:hidden;"></div>
<div style="left:686px;top:63px;width:60px;height:30px;overflow:hidden;font-family:'Liberation Serif',serif;line-height:30px;white-space:nowrap;color:#000;font-size:25px;">AaBbCcDdEe</div>
<div style="left:684px;top:95.00px;font-size:11.5px;line-height:14px;color:#15428b;white-space:nowrap;width:64px;text-align:center;transform:scaleX(0.92);transform-origin:50% 50%;">¶ 1</div>
<div style="left:756px;top:63px;width:64px;height:48px;background:#fff;overflow:hidden;"></div>
<div style="left:758px;top:63px;width:60px;height:30px;overflow:hidden;font-family:'Liberation Serif',serif;line-height:30px;white-space:nowrap;color:#000;font-size:19px;">AaBbCcDdEe</div>
<div style="left:756px;top:95.00px;font-size:11.5px;line-height:14px;color:#15428b;white-space:nowrap;width:64px;text-align:center;transform:scaleX(0.92);transform-origin:50% 50%;">¶ 3</div>
<div style="left:828px;top:63px;width:64px;height:48px;background:#fff;overflow:hidden;"></div>
<div style="left:830px;top:63px;width:60px;height:30px;overflow:hidden;font-family:'Liberation Serif',serif;line-height:30px;white-space:nowrap;color:#000;font-size:16px;font-style:italic;">AaBbCcDdEe</div>
<div style="left:828px;top:95.00px;font-size:11.5px;line-height:14px;color:#15428b;white-space:nowrap;width:64px;text-align:center;transform:scaleX(0.92);transform-origin:50% 50%;">Выделение</div>
<div style="left:900px;top:63px;width:64px;height:48px;background:#fff;overflow:hidden;"></div>
<div style="left:902px;top:63px;width:60px;height:30px;overflow:hidden;font-family:'Liberation Serif',serif;line-height:30px;white-space:nowrap;color:#000;font-size:22px;">AaBbCcDdEe</div>
<div style="left:900px;top:95.00px;font-size:11.5px;line-height:14px;color:#15428b;white-space:nowrap;width:64px;text-align:center;transform:scaleX(0.92);transform-origin:50% 50%;">¶ Заголов...</div>
<div style="left:972px;top:63px;width:64px;height:48px;background:#fff;overflow:hidden;"></div>
<div style="left:974px;top:63px;width:60px;height:30px;overflow:hidden;font-family:'Liberation Serif',serif;line-height:30px;white-space:nowrap;color:#000;font-size:15.5px;font-weight:bold;color:#17177a;">AaBbCcDdEe</div>
<div style="left:972px;top:95.00px;font-size:11.5px;line-height:14px;color:#15428b;white-space:nowrap;width:64px;text-align:center;transform:scaleX(0.92);transform-origin:50% 50%;">¶ Заголов...</div>
<div style="left:1044px;top:63px;width:64px;height:48px;background:#fff;overflow:hidden;"></div>
<div style="left:1046px;top:63px;width:60px;height:30px;overflow:hidden;font-family:'Liberation Serif',serif;line-height:30px;white-space:nowrap;color:#000;font-size:12.5px;font-family:'Liberation Sans',sans-serif;letter-spacing:-.7px;">AaBbCcDdEe</div>
<div style="left:1044px;top:95.00px;font-size:11.5px;line-height:14px;color:#15428b;white-space:nowrap;width:64px;text-align:center;transform:scaleX(0.92);transform-origin:50% 50%;">¶ Заголов...</div>
<div style="left:1116px;top:63px;width:64px;height:48px;background:#fff;overflow:hidden;"></div>
<div style="left:1118px;top:63px;width:60px;height:30px;overflow:hidden;font-family:'Liberation Serif',serif;line-height:30px;white-space:nowrap;color:#000;font-size:19px;color:#ee1c1c;">AaBbCcDdEe</div>
<div style="left:1116px;top:95.00px;font-size:11.5px;line-height:14px;color:#15428b;white-space:nowrap;width:64px;text-align:center;transform:scaleX(0.92);transform-origin:50% 50%;">¶ Заголов...</div>
<div style="left:1188px;top:63px;width:64px;height:48px;background:#fff;overflow:hidden;"></div>
<div style="left:1190px;top:63px;width:60px;height:30px;overflow:hidden;font-family:'Liberation Serif',serif;line-height:30px;white-space:nowrap;color:#000;font-size:16px;font-style:italic;">AaBbCcDdEe</div>
<div style="left:1188px;top:95.00px;font-size:11.5px;line-height:14px;color:#15428b;white-space:nowrap;width:64px;text-align:center;transform:scaleX(0.92);transform-origin:50% 50%;">¶ Заголов...</div>
<div style="left:1260px;top:63px;width:64px;height:48px;background:#fff;overflow:hidden;"></div>
<div style="left:1262px;top:63px;width:60px;height:30px;overflow:hidden;font-family:'Liberation Serif',serif;line-height:30px;white-space:nowrap;color:#000;font-size:15.5px;font-weight:bold;">AaBbCcDdEe</div>
<div style="left:1260px;top:95.00px;font-size:11.5px;line-height:14px;color:#15428b;white-space:nowrap;width:64px;text-align:center;transform:scaleX(0.92);transform-origin:50% 50%;">¶ Заголов...</div>
<div style="left:1332px;top:63px;width:64px;height:48px;background:#fff;overflow:hidden;"></div>
<div style="left:1334px;top:63px;width:60px;height:30px;overflow:hidden;font-family:'Liberation Serif',serif;line-height:30px;white-space:nowrap;color:#000;font-size:15.5px;font-weight:bold;">AaBbCcDdEe</div>
<div style="left:1332px;top:95.00px;font-size:11.5px;line-height:14px;color:#15428b;white-space:nowrap;width:64px;text-align:center;transform:scaleX(0.92);transform-origin:50% 50%;">¶ Заголов...</div>
<div style="left:1404px;top:63px;width:64px;height:48px;background:#fff;overflow:hidden;"></div>
<div style="left:1406px;top:63px;width:60px;height:30px;overflow:hidden;font-family:'Liberation Serif',serif;line-height:30px;white-space:nowrap;color:#000;font-size:22px;font-weight:bold;">AaBbCcDdEe</div>
<div style="left:1404px;top:95.00px;font-size:11.5px;line-height:14px;color:#15428b;white-space:nowrap;width:64px;text-align:center;transform:scaleX(0.92);transform-origin:50% 50%;">Название</div>
<div style="left:1476px;top:63px;width:64px;height:48px;background:#fff;overflow:hidden;"></div>
<div style="left:1478px;top:63px;width:60px;height:30px;overflow:hidden;font-family:'Liberation Serif',serif;line-height:30px;white-space:nowrap;color:#000;font-size:16px;">AaBbCcDdEe</div>
<div style="left:1476px;top:95.00px;font-size:11.5px;line-height:14px;color:#15428b;white-space:nowrap;width:64px;text-align:center;transform:scaleX(0.92);transform-origin:50% 50%;">¶ Обычный</div>
<div style="left:1548px;top:63px;width:64px;height:48px;background:#fff;overflow:hidden;"></div>
<div style="left:1550px;top:63px;width:60px;height:30px;overflow:hidden;font-family:'Liberation Serif',serif;line-height:30px;white-space:nowrap;color:#000;font-size:16px;">AaBbCcDdEe</div>
<div style="left:1548px;top:95.00px;font-size:11.5px;line-height:14px;color:#15428b;white-space:nowrap;width:64px;text-align:center;transform:scaleX(0.92);transform-origin:50% 50%;">Подзагол...</div>
<div style="left:1620px;top:63px;width:64px;height:48px;background:#fff;overflow:hidden;"></div>
<div style="left:1622px;top:63px;width:60px;height:30px;overflow:hidden;font-family:'Liberation Serif',serif;line-height:30px;white-space:nowrap;color:#000;font-size:16px;">AaBbCcDdEe</div>
<div style="left:1620px;top:95.00px;font-size:11.5px;line-height:14px;color:#15428b;white-space:nowrap;width:64px;text-align:center;transform:scaleX(0.92);transform-origin:50% 50%;">Строгий</div>
<div style="left:1689.5px;top:58px;width:14px;height:20px;border:1px solid #b3cbe8;box-sizing:border-box;background:linear-gradient(180deg,#e4eefa,#cfe0f4);border-radius:2px;"></div>
<div style="left:1689.5px;top:78px;width:14px;height:19px;border:1px solid #b3cbe8;box-sizing:border-box;background:linear-gradient(180deg,#e4eefa,#cfe0f4);border-radius:2px;"></div>
<div style="left:1689.5px;top:97px;width:14px;height:20px;border:1px solid #b3cbe8;box-sizing:border-box;background:linear-gradient(180deg,#e4eefa,#cfe0f4);border-radius:2px;"></div>
<svg style="position:absolute;left:1693px;top:65px;" width="8" height="5" viewBox="0 0 8 5"><path d="M0 5 H8 L4 0 Z" fill="#a9b8d0"/></svg>
<svg style="position:absolute;left:1693px;top:86px;" width="8" height="5" viewBox="0 0 8 5"><path d="M0 0 H8 L4 5 Z" fill="#5b7fb8"/></svg>
<svg style="position:absolute;left:1693px;top:102px;" width="8" height="9" viewBox="0 0 8 9"><rect x="0" y="0" width="8" height="1.500" fill="#5b7fb8"/><path d="M0 3.500 H8 L4 8 Z" fill="#5b7fb8"/></svg>
<svg style="position:absolute;left:1718px;top:57px;" width="34" height="32" viewBox="0 0 34 32"><text x="1" y="22" font-size="27" font-weight="bold" font-family="Liberation Serif,serif" fill="#c850b0" stroke="#fff" stroke-width=".5">A</text><text x="7" y="30.500" font-size="35" font-weight="bold" font-family="Liberation Serif,serif" fill="#4a86d4" stroke="#e8f0fc" stroke-width=".8">A</text></svg>
<div style="left:1706px;top:92.20px;font-size:12.5px;line-height:15px;color:#15428b;white-space:nowrap;width:58px;text-align:center;transform:scaleX(0.92);transform-origin:50% 50%;">Изменить</div>
<div style="left:1706px;top:105.30px;font-size:12.5px;line-height:15px;color:#15428b;white-space:nowrap;width:50px;text-align:center;transform:scaleX(0.92);transform-origin:50% 50%;">стили</div>
<svg style="position:absolute;left:1748.5px;top:111.5px" width="5.500" height="3.200" viewBox="0 0 7 4"><path d="M0 0 H7 L3.500 4 Z" fill="#5b7fb8"/></svg>
<svg style="position:absolute;left:1778px;top:57px;" width="16" height="14" viewBox="0 0 16 14"><circle cx="4" cy="10" r="3" fill="#dfe6f2" stroke="#334" stroke-width="1.200"/><circle cx="12" cy="10" r="3" fill="#dfe6f2" stroke="#334" stroke-width="1.200"/><rect x="2" y="1" width="4" height="7" fill="#445"/><rect x="10" y="1" width="4" height="7" fill="#445"/><rect x="6" y="4" width="4" height="3" fill="#445"/></svg>
<div style="left:1797px;top:57.00px;font-size:12.5px;line-height:16px;color:#15428b;white-space:nowrap;transform:scaleX(0.92);transform-origin:0 50%;">Найти</div>
<svg style="position:absolute;left:1834.5px;top:63.5px" width="5.500" height="3.200" viewBox="0 0 7 4"><path d="M0 0 H7 L3.500 4 Z" fill="#5b7fb8"/></svg>
<svg style="position:absolute;left:1778px;top:79px;" width="17" height="15" viewBox="0 0 17 15"><text x="0" y="7" font-size="8" font-family="Liberation Sans,sans-serif" fill="#222">ab</text><text x="5" y="14.500" font-size="8" font-weight="bold" font-family="Liberation Sans,sans-serif" fill="#2a8a2a">ac</text><path d="M1 9 V12 H4 M2.500 10.500 L4 12 L2.500 13.500" stroke="#2a52a8" fill="none" stroke-width="1"/></svg>
<div style="left:1797px;top:79.00px;font-size:12.5px;line-height:16px;color:#15428b;white-space:nowrap;transform:scaleX(0.92);transform-origin:0 50%;">Заменить</div>
<svg style="position:absolute;left:1781px;top:101px;" width="11" height="16" viewBox="0 0 11 16"><path d="M1 1 V12.500 L4 9.800 L6.300 15 L8.300 14 L6 9 H10 Z" fill="#fff" stroke="#223" stroke-width="1"/></svg>
<div style="left:1797px;top:101.00px;font-size:12.5px;line-height:16px;color:#15428b;white-space:nowrap;transform:scaleX(0.92);transform-origin:0 50%;">Выделить</div>
<svg style="position:absolute;left:1851.5px;top:107.5px" width="5.500" height="3.200" viewBox="0 0 7 4"><path d="M0 0 H7 L3.500 4 Z" fill="#5b7fb8"/></svg>
<svg style="position:absolute;left:3px;top:2px" width="40" height="42" viewBox="0 0 40 42"><defs><radialGradient id="ob" cx=".5" cy=".4" r=".62"><stop offset="0" stop-color="#fffdf4"/><stop offset=".5" stop-color="#f6e8c0"/><stop offset=".82" stop-color="#e2c88a"/><stop offset=".95" stop-color="#c8a860"/><stop offset="1" stop-color="#a88840"/></radialGradient><linearGradient id="obh" x1="0" y1="0" x2="0" y2="1"><stop offset="0" stop-color="rgba(255,255,255,.95)"/><stop offset="1" stop-color="rgba(255,255,255,.1)"/></linearGradient></defs><circle cx="19.500" cy="21" r="18.300" fill="rgba(70,60,80,.35)"/><circle cx="19.500" cy="20.200" r="17.600" fill="url(#ob)" stroke="#9a8458" stroke-width=".9"/><ellipse cx="19.500" cy="11" rx="13" ry="8" fill="url(#obh)" opacity=".75"/><path d="M17 10.500 H11 Q9.300 10.500 9.300 12.200 V17.500 Q9.300 19.200 11 19.200 H14 M17.800 14 V11.500" fill="none" stroke="#d8401c" stroke-width="2.500" stroke-linecap="round"/><path d="M21.500 15.500 H26 Q27.300 15.500 27.300 16.800 V19 M23 20.300 H21.500" fill="none" stroke="#3c8fd6" stroke-width="1.900" stroke-linecap="round"/><path d="M17.500 24 H13 Q11.500 24 11.500 25.500 V29.500 Q11.500 31 13 31 H17 Q18.300 31 18.300 29.700 V27.500" fill="none" stroke="#f1a218" stroke-width="2.200" stroke-linecap="round"/><path d="M22.500 24 H21.800 V29.500 Q21.800 31 23.300 31 H28 Q29.500 31 29.500 29.500 V25.200 Q29.500 24 28 24 H26.500" fill="none" stroke="#5fa82e" stroke-width="2.500" stroke-linecap="round"/><circle cx="18" cy="21.300" r="1" fill="#e8672a"/><circle cx="21.500" cy="21.300" r="1" fill="#3c8fd6"/><circle cx="18" cy="24.300" r=".9" fill="#f1c218"/><circle cx="21.500" cy="24.300" r=".9" fill="#5fa82e"/></svg>
<div style="left:1907px;top:144px;width:9px;height:2px;background:#3a3e58;"></div>
<div style="left:0px;top:1018px;width:1920px;height:22px;background:linear-gradient(180deg,#d7e6f9 0%,#c9dcf6 36%,#b0cdf2 37%,#bfd6f5 70%,#d2e3f8 100%);"></div>
<div style="left:0px;top:1018px;width:1920px;height:1px;background:#6a8ec8;"></div>
<div style="left:0px;top:1019px;width:1920px;height:1px;background:#f4f9ff;"></div>
<div style="left:0px;top:1039px;width:1920px;height:1px;background:#eef5fe;"></div>
<div style="left:8px;top:1021.50px;font-size:11.8px;line-height:15px;color:#15428b;white-space:nowrap;transform:scaleX(0.92);transform-origin:0 50%;">Число слов: 13 926</div>
<div style="left:114px;top:1020px;width:1px;height:19px;background:#8fa8d0;"></div>
<div style="left:115px;top:1020px;width:1px;height:19px;background:#f0f6fe;"></div>
<div style="left:1644px;top:1020px;width:94px;height:19px;border:1px solid #9ab5da;border-radius:2px;box-sizing:border-box;background:linear-gradient(180deg,#dce9fa,#c2d6f2);"></div>
<div style="left:1645px;top:1021px;width:19px;height:17px;background:linear-gradient(180deg,#fde3a8,#fbc050 50%,#fcd888);border:1px solid #d89a38;box-sizing:border-box;"></div>
<svg style="position:absolute;left:1647px;top:1022px;" width="15" height="15" viewBox="0 0 15 15"><rect x="2.500" y="1.500" width="10" height="12" fill="#fff" stroke="#555"/><path d="M4.500 4.500 H10.500 M4.500 7 H10.500 M4.500 9.500 H10.500" stroke="#666" stroke-width="1"/></svg>
<svg style="position:absolute;left:1665px;top:1022px;" width="15" height="15" viewBox="0 0 15 15"><path d="M1.500 2.500 H6.500 L7.500 3.500 L8.500 2.500 H13.500 V12.500 H8.500 L7.500 13.500 L6.500 12.500 H1.500 Z" fill="#fff" stroke="#555"/><path d="M7.500 3.500 V13 M3 5 H6 M3 7 H6 M3 9 H6 M9 5 H12 M9 7 H12 M9 9 H12" stroke="#666" stroke-width=".8"/></svg>
<svg style="position:absolute;left:1683px;top:1022px;" width="15" height="15" viewBox="0 0 15 15"><rect x="1.500" y="2.500" width="11" height="9" fill="#fff" stroke="#555"/><path d="M3 5 H11 M3 7 H11 M3 9 H8" stroke="#666" stroke-width=".8"/><circle cx="11.500" cy="11.500" r="3" fill="#3a8a3a" stroke="#fff" stroke-width=".6"/></svg>
<svg style="position:absolute;left:1701px;top:1022px;" width="15" height="15" viewBox="0 0 15 15"><path d="M2 3 H13 M5 5.500 H13 M7 8 H13 M5 10.500 H13 M2 13 H13" stroke="#555" stroke-width="1.100"/></svg>
<svg style="position:absolute;left:1719px;top:1022px;" width="15" height="15" viewBox="0 0 15 15"><path d="M2 3 H13 M2 5.500 H13 M2 8 H13 M2 10.500 H13 M2 13 H13" stroke="#555" stroke-width="1.100"/></svg>
<div style="left:1745px;top:1021.50px;font-size:12px;line-height:15px;color:#15428b;white-space:nowrap;transform:scaleX(0.92);transform-origin:0 50%;">100%</div>
<div style="left:1797px;top:1028px;width:101px;height:1px;background:#7f9cc8;"></div>
<div style="left:1797px;top:1029px;width:101px;height:1px;background:#e8f1fd;"></div>
<svg style="position:absolute;left:1780.5px;top:1021px;" width="16" height="16" viewBox="0 0 16 16"><circle cx="8" cy="8" r="7" fill="#eef3fa" stroke="#6d86ad" stroke-width="1.200"/><circle cx="8" cy="8" r="5.500" fill="none" stroke="#fff" stroke-width="1"/><path d="M4.500 8 H11.500" stroke="#3a4a6a" stroke-width="1.800"/></svg>
<svg style="position:absolute;left:1898.5px;top:1021px;" width="16" height="16" viewBox="0 0 16 16"><circle cx="8" cy="8" r="7" fill="#eef3fa" stroke="#6d86ad" stroke-width="1.200"/><circle cx="8" cy="8" r="5.500" fill="none" stroke="#fff" stroke-width="1"/><path d="M4.500 8 H11.500" stroke="#3a4a6a" stroke-width="1.800"/><path d="M8 4.500 V11.500" stroke="#3a4a6a" stroke-width="1.800"/></svg>
<svg style="position:absolute;left:1842px;top:1022px;" width="10" height="13" viewBox="0 0 10 13"><path d="M1 0.500 H9 V7.500 L5 12 L1 7.500 Z" fill="#e8eef8" stroke="#5a7098" stroke-width="1"/><path d="M5 3 V8" stroke="#9ab" stroke-width="1"/></svg>
<div style="left:0px;top:1040px;width:1920px;height:40px;background:linear-gradient(90deg,#304a7c 0%,#2e487a 12%,#304a7c 25%,#36528c 38%,#2e467a 50%,#3a5690 62%,#3c5892 75%,#2a3e68 79.500%,#26385e 83%,#2c426e 86%,#34508a 89%,#2c426e 93%,#30477a 100%);"></div>
<div style="left:0px;top:1040px;width:1920px;height:40px;background:linear-gradient(180deg,rgba(255,255,255,.12) 0%,rgba(255,255,255,.03) 30%,rgba(0,0,10,.04) 60%,rgba(0,0,10,.14) 100%);"></div>
<div style="left:0px;top:1040px;width:1920px;height:1px;background:#10141e;"></div>
<div style="left:0px;top:1041px;width:1920px;height:1px;background:rgba(220,225,240,.75);"></div>
<div style="left:0px;top:1042px;width:1920px;height:1px;background:rgba(255,255,255,.18);"></div>
<svg style="position:absolute;left:6px;top:1040px;" width="44" height="40" viewBox="0 0 44 40"><defs><radialGradient id="so" cx=".5" cy=".3" r=".75"><stop offset="0" stop-color="#a8d0f4"/><stop offset=".45" stop-color="#3f78c0"/><stop offset="1" stop-color="#12305e"/></radialGradient></defs><circle cx="21.500" cy="20.500" r="18" fill="url(#so)" stroke="rgba(200,225,255,.7)" stroke-width="1.200"/><ellipse cx="21.500" cy="11" rx="13" ry="8" fill="rgba(255,255,255,.35)"/><path d="M12 13 Q16 11 20 13.500 L18.500 20 Q15 18 11 19.500 Z" fill="#e8552a"/><path d="M21.500 14 Q26 16.500 31 13.500 L29.500 20 Q25 22.500 20 20.500 Z" fill="#7cc242"/><path d="M10.500 21 Q14.500 19.500 18 21.500 L16.500 28 Q13 26 9 27.500 Z" fill="#3a9ae8"/><path d="M19.500 22 Q24 24.500 29 22 L27.500 28 Q23 31 18 28.500 Z" fill="#f8c822"/></svg>
<div style="left:60px;top:1042px;width:158px;height:37px;background:linear-gradient(180deg,rgba(190,195,240,.40) 0%,rgba(150,160,220,.28) 48%,rgba(100,110,180,.24) 52%,rgba(130,140,200,.32) 100%);border:1px solid rgba(200,210,245,.55);border-radius:3px;box-sizing:border-box;box-shadow:0 0 0 1px rgba(20,30,60,.55);"></div>
<svg style="position:absolute;left:69px;top:1045px" width="32" height="32" viewBox="0 0 32 32"><rect x="2" y="3" width="28" height="27" rx="4" fill="none" stroke="#3a5ad8" stroke-width="2.500"/><rect x="8" y="4" width="16" height="9" fill="#e8e8f0" stroke="#a03030"/><rect x="6" y="15" width="20" height="13" rx="1" fill="#c42828"/><path d="M8 19 H24 M8 23 H24" stroke="#e8a0a0" stroke-width="1.500"/></svg>
<div style="left:114px;top:1051.50px;font-size:12.7px;line-height:16px;color:#fff;white-space:nowrap;transform:scaleX(0.92);transform-origin:0 50%;text-shadow:0 0 3px rgba(0,0,0,.6);">Пн 04 дек 2017  ...</div>
<div style="left:222px;top:1042px;width:158px;height:37px;background:linear-gradient(180deg,rgba(190,195,240,.40) 0%,rgba(150,160,220,.28) 48%,rgba(100,110,180,.24) 52%,rgba(130,140,200,.32) 100%);border:1px solid rgba(200,210,245,.55);border-radius:3px;box-sizing:border-box;box-shadow:0 0 0 1px rgba(20,30,60,.55);"></div>
<svg style="position:absolute;left:231px;top:1045px" width="32" height="32" viewBox="0 0 32 32"><circle cx="16" cy="16" r="14" fill="#e33b2e"/><path d="M16 16 L3.900 9 A14 14 0 0 0 10 28.600 Z" fill="#2ea04c"/><path d="M16 16 L10 28.600 A14 14 0 0 0 29.800 13 L16 13 Z" fill="#fbc116"/><path d="M16 2 A14 14 0 0 1 29.800 13 L16 13 Z" fill="#e33b2e"/><path d="M3.900 9 A14 14 0 0 1 16 2 L16 10 L10.500 13 Z" fill="#e33b2e"/><circle cx="16" cy="16" r="6.500" fill="#fff"/><circle cx="16" cy="16" r="5.200" fill="#4a8af4"/></svg>
<div style="left:267px;top:1051.50px;font-size:12.7px;line-height:16px;color:#fff;white-space:nowrap;transform:scaleX(0.92);transform-origin:0 50%;text-shadow:0 0 3px rgba(0,0,0,.6);">Новая вкладка - ...</div>
<div style="left:384px;top:1042px;width:158px;height:37px;background:linear-gradient(180deg,rgba(190,195,240,.40) 0%,rgba(150,160,220,.28) 48%,rgba(100,110,180,.24) 52%,rgba(130,140,200,.32) 100%);border:1px solid rgba(200,210,245,.55);border-radius:3px;box-sizing:border-box;box-shadow:0 0 0 1px rgba(20,30,60,.55);"></div>
<svg style="position:absolute;left:393px;top:1045px" width="32" height="32" viewBox="0 0 32 32"><ellipse cx="16" cy="16" rx="14.500" ry="15" fill="#e0142a"/><ellipse cx="16" cy="16" rx="6.500" ry="11" fill="#3a4a70"/><path d="M6 6 Q16 -2 26 6" fill="none" stroke="#ff6a70" stroke-width="1.500" opacity=".7"/></svg>
<div style="left:429px;top:1051.50px;font-size:12.7px;line-height:16px;color:#fff;white-space:nowrap;transform:scaleX(0.92);transform-origin:0 50%;text-shadow:0 0 3px rgba(0,0,0,.6);">DigiSeller - Opera</div>
<div style="left:546px;top:1042px;width:158px;height:37px;background:linear-gradient(180deg,rgba(190,195,240,.40) 0%,rgba(150,160,220,.28) 48%,rgba(100,110,180,.24) 52%,rgba(130,140,200,.32) 100%);border:1px solid rgba(200,210,245,.55);border-radius:3px;box-sizing:border-box;box-shadow:0 0 0 1px rgba(20,30,60,.55);"></div>
<svg style="position:absolute;left:555px;top:1045px" width="32" height="32" viewBox="0 0 32 32"><rect x="3" y="3" width="24" height="19" fill="#d8dce4" stroke="#667"/><rect x="5" y="5" width="20" height="15" fill="#0a2a12"/><path d="M6 16 L9 10 L11 17 L14 8 L17 15 L20 9 L23 16" fill="none" stroke="#38e048" stroke-width="1.500"/><path d="M9 28 H23 L20 22 H12 Z" fill="#c8ccd4" stroke="#778"/><rect x="20" y="20" width="9" height="9" fill="#eef" stroke="#889"/></svg>
<div style="left:591px;top:1051.50px;font-size:12.7px;line-height:16px;color:#fff;white-space:nowrap;transform:scaleX(0.92);transform-origin:0 50%;text-shadow:0 0 3px rgba(0,0,0,.6);">Диспетчер задач ...</div>
<div style="left:708px;top:1042px;width:158px;height:37px;background:linear-gradient(180deg,rgba(190,195,240,.40) 0%,rgba(150,160,220,.28) 48%,rgba(100,110,180,.24) 52%,rgba(130,140,200,.32) 100%);border:1px solid rgba(200,210,245,.55);border-radius:3px;box-sizing:border-box;box-shadow:0 0 0 1px rgba(20,30,60,.55);"></div>
<svg style="position:absolute;left:717px;top:1045px" width="32" height="32" viewBox="0 0 32 32"><rect x="10" y="2" width="19" height="15" fill="#3a6ad0" stroke="#dde"/><rect x="12" y="4" width="15" height="11" fill="#6aa0f0"/><path d="M15 22 H25 L23 17 H17 Z" fill="#ccd"/><rect x="1" y="8" width="22" height="11" rx="1" fill="#e8ecf4" stroke="#5a78b8"/><path d="M3 11 H21 M3 13.500 H21 M3 16 H21" stroke="#3a5aa8" stroke-width="1.400" stroke-dasharray="2 1"/><path d="M14 24 H28 L26 30 H16 Z" fill="#dde" stroke="#889"/></svg>
<div style="left:753px;top:1051.50px;font-size:12.7px;line-height:16px;color:#fff;white-space:nowrap;transform:scaleX(0.92);transform-origin:0 50%;text-shadow:0 0 3px rgba(0,0,0,.6);">Экранная клавиа...</div>
<div style="left:870px;top:1042px;width:158px;height:37px;background:linear-gradient(180deg,rgba(190,195,240,.40) 0%,rgba(150,160,220,.28) 48%,rgba(100,110,180,.24) 52%,rgba(130,140,200,.32) 100%);border:1px solid rgba(200,210,245,.55);border-radius:3px;box-sizing:border-box;box-shadow:0 0 0 1px rgba(20,30,60,.55);"></div>
<svg style="position:absolute;left:879px;top:1045px" width="34" height="32" viewBox="0 0 34 32"><ellipse cx="14" cy="20" rx="13" ry="10" fill="#e8e4dc" stroke="#a89880"/><circle cx="8" cy="17" r="2.500" fill="#e03030"/><circle cx="13" cy="13.500" r="2.500" fill="#f0c020"/><circle cx="19" cy="15" r="2.500" fill="#30a040"/><circle cx="9" cy="24" r="2.500" fill="#3060d0"/><path d="M20 22 L30 4 L33 6 L24 24 Z" fill="#e8a848" stroke="#a07020"/><path d="M20 22 L24 24 L19 28 Z" fill="#555"/></svg>
<div style="left:915px;top:1051.50px;font-size:12.7px;line-height:16px;color:#fff;white-space:nowrap;transform:scaleX(0.92);transform-origin:0 50%;text-shadow:0 0 3px rgba(0,0,0,.6);">Безымянный3 - ...</div>
<div style="left:1032px;top:1042px;width:158px;height:37px;background:linear-gradient(180deg,rgba(225,235,250,.62) 0%,rgba(190,205,230,.5) 48%,rgba(150,170,205,.45) 52%,rgba(185,200,228,.55) 100%);border:1px solid rgba(230,240,255,.85);border-radius:3px;box-sizing:border-box;box-shadow:0 0 0 1px rgba(20,30,60,.55);"></div>
<svg style="position:absolute;left:1041px;top:1045px" width="34" height="32" viewBox="0 0 34 32"><path d="M9 2 H25 L30 7 V30 H9 Z" fill="#fff" stroke="#8a96b0"/><path d="M12 10 H27 M12 13 H27 M12 16 H27 M12 19 H27 M12 22 H27 M12 25 H27" stroke="#9ab0d8" stroke-width="1"/><rect x="2" y="5" width="15" height="13" rx="2" fill="#2a5ab8" stroke="#fff" stroke-width=".8"/><text x="9.500" y="15.500" font-size="11" font-weight="bold" font-style="italic" font-family="Liberation Serif,serif" fill="#fff" text-anchor="middle">W</text></svg>
<div style="left:1077px;top:1051.50px;font-size:12.7px;line-height:16px;color:#fff;white-space:nowrap;transform:scaleX(0.92);transform-origin:0 50%;text-shadow:0 0 3px rgba(0,0,0,.6);">ПЗ ЖД [Режим о...</div>
<div style="left:1706px;top:1050.50px;font-size:12px;line-height:15px;color:#fff;white-space:nowrap;transform:scaleX(0.92);transform-origin:0 50%;">RU</div>
<svg style="position:absolute;left:1737px;top:1056px;" width="8" height="5" viewBox="0 0 8 5"><path d="M0 5 H8 L4 0 Z" fill="#fff"/></svg>
<svg style="position:absolute;left:1757px;top:1051px;" width="18" height="18" viewBox="0 0 18 18"><path d="M3 2 V17" stroke="#eee" stroke-width="1.500"/><path d="M4 3 Q8 1 11 3 Q13 4.500 15 3 V10 Q12 12 9.500 10 Q7 8.500 4 10 Z" fill="#f4f4f4"/><circle cx="12.500" cy="12.500" r="4.500" fill="#d82020"/><path d="M10.500 10.500 L14.500 14.500 M14.500 10.500 L10.500 14.500" stroke="#fff" stroke-width="1.400"/></svg>
<svg style="position:absolute;left:1782px;top:1051px;" width="18" height="18" viewBox="0 0 18 18"><rect x="5" y="3" width="11" height="9" fill="#dfe8f4" stroke="#fff" stroke-width="1.200"/><rect x="1" y="1" width="3" height="10" fill="#fff"/><path d="M8 12 V15 M5 15.500 H13" stroke="#fff" stroke-width="1.500"/></svg>
<svg style="position:absolute;left:1805px;top:1052px;" width="18" height="16" viewBox="0 0 18 16"><path d="M1 5.500 H4.500 L9 1.500 V14.500 L4.500 10.500 H1 Z" fill="#fff"/><path d="M11.500 5 Q13 8 11.500 11 M13.500 3 Q16.500 8 13.500 13" fill="none" stroke="#fff" stroke-width="1.200"/></svg>
<div style="left:1830px;top:1045.00px;font-size:12.5px;line-height:15px;color:#fff;white-space:nowrap;width:73px;text-align:center;transform:scaleX(0.92);transform-origin:50% 50%;">22:25</div>
<div style="left:1830px;top:1063.00px;font-size:12.5px;line-height:15px;color:#fff;white-space:nowrap;width:73px;text-align:center;transform:scaleX(0.92);transform-origin:50% 50%;">04.12.2017</div>
<div style="left:1907px;top:1041px;width:13px;height:39px;background:linear-gradient(180deg,rgba(255,255,255,.35),rgba(255,255,255,.08) 50%,rgba(255,255,255,.18));border-left:1px solid rgba(20,30,50,.7);box-sizing:border-box;"></div>
<div style="left:1908px;top:1041px;width:1px;height:39px;background:rgba(255,255,255,.4);"></div>
</body></html>
